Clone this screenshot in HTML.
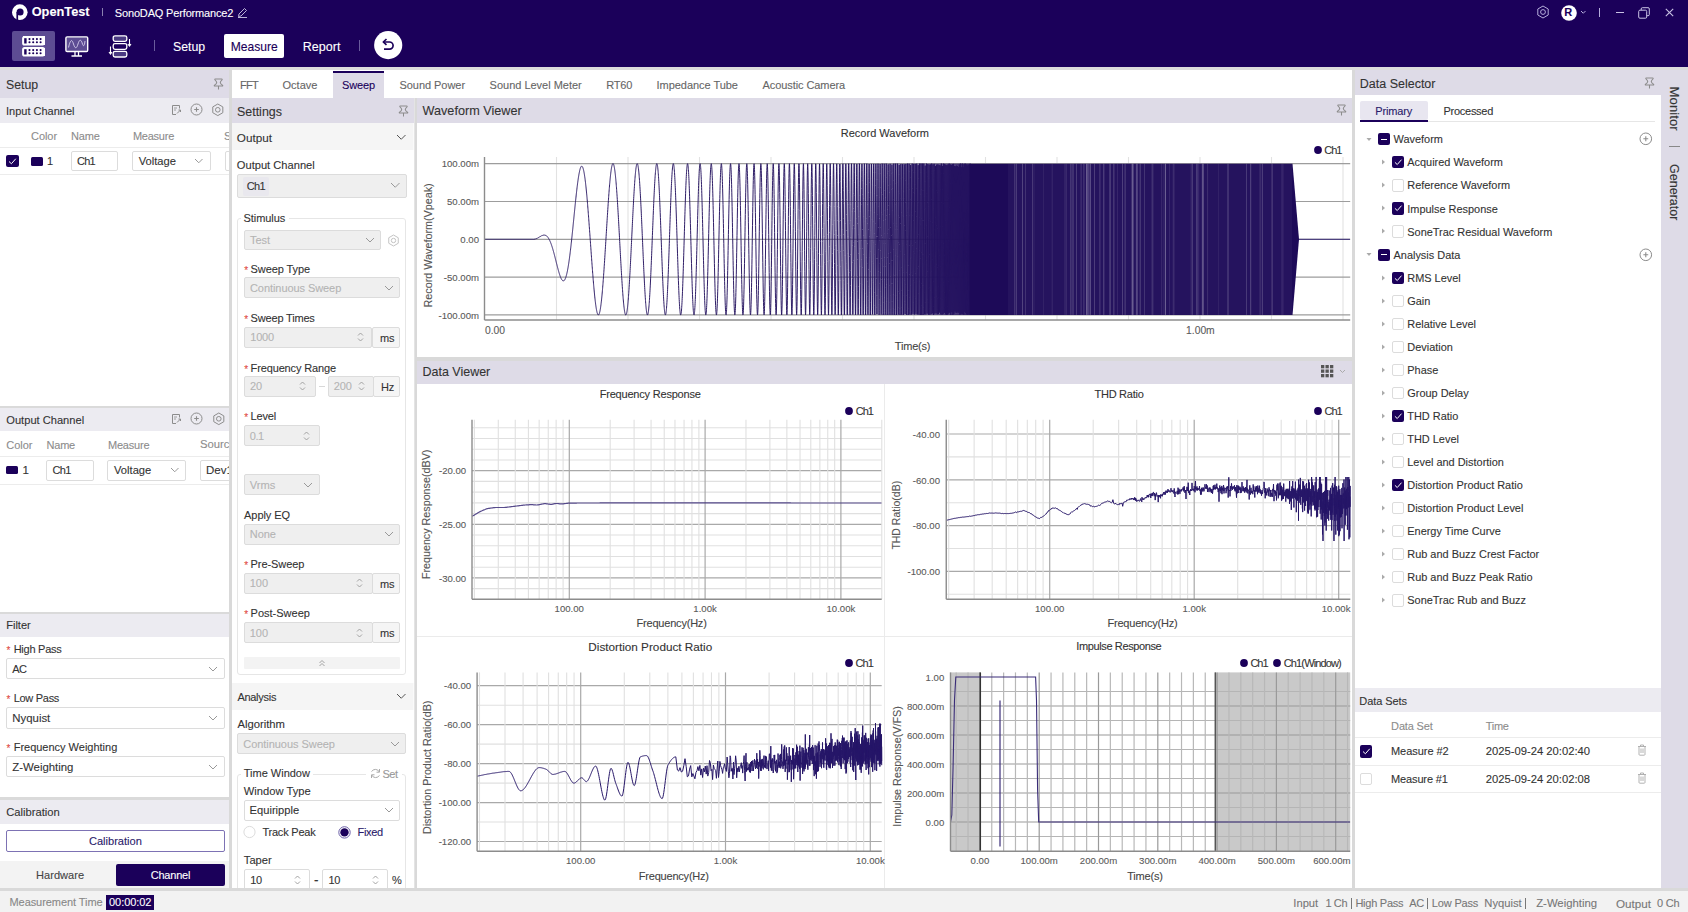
<!DOCTYPE html>
<html><head><meta charset="utf-8">
<style>
*{box-sizing:border-box;margin:0;padding:0}
html,body{width:1688px;height:912px;overflow:hidden;background:#f2f2f2;font-family:"Liberation Sans",sans-serif;font-size:12px;color:#333;position:relative}
.a{position:absolute}
.t{position:absolute;white-space:nowrap;line-height:1;-webkit-text-stroke:0.1px currentColor}
svg{position:absolute;overflow:visible}
</style></head><body>
<div class="a" style="left:0.00px;top:0.00px;width:1688.00px;height:67.00px;background:#1b005a;"></div>
<div class="a" style="left:0.00px;top:67.00px;width:1688.00px;height:3.00px;background:#dcdcdc;"></div>
<div class="a" style="left:0.00px;top:70.00px;width:229.00px;height:818.00px;background:#fff;"></div>
<div class="a" style="left:0.00px;top:70.00px;width:229.00px;height:28.00px;background:#dedbe7;"></div>
<div class="a" style="left:0.00px;top:98.00px;width:229.00px;height:24.50px;background:#ecebf1;"></div>
<div class="a" style="left:229.00px;top:70.00px;width:3.00px;height:821.00px;background:#d9d9d9;"></div>
<div class="a" style="left:232.00px;top:70.00px;width:1120.00px;height:28.00px;background:#fff;"></div>
<div class="a" style="left:232.00px;top:98.00px;width:182.00px;height:790.00px;background:#fff;"></div>
<div class="a" style="left:232.00px;top:98.00px;width:182.00px;height:25.00px;background:#dedbe7;"></div>
<div class="a" style="left:414.00px;top:98.00px;width:3.00px;height:793.00px;background:#d9d9d9;"></div>
<div class="a" style="left:417.00px;top:98.00px;width:935.00px;height:259.00px;background:#fff;"></div>
<div class="a" style="left:417.00px;top:98.00px;width:935.00px;height:25.00px;background:#dedbe7;"></div>
<div class="a" style="left:417.00px;top:357.00px;width:935.00px;height:4.00px;background:#d9d9d9;"></div>
<div class="a" style="left:417.00px;top:361.00px;width:935.00px;height:527.00px;background:#fff;"></div>
<div class="a" style="left:417.00px;top:361.00px;width:935.00px;height:23.00px;background:#dedbe7;"></div>
<div class="a" style="left:1352.00px;top:70.00px;width:3.00px;height:821.00px;background:#d9d9d9;"></div>
<div class="a" style="left:1355.00px;top:70.00px;width:333.00px;height:818.00px;background:#dedbe7;"></div>
<div class="a" style="left:1355.00px;top:95.00px;width:306.00px;height:793.00px;background:#fff;"></div>
<div class="a" style="left:0.00px;top:888.00px;width:1688.00px;height:3.00px;background:#d9d9d9;"></div>
<div class="a" style="left:0.00px;top:891.00px;width:1688.00px;height:21.00px;background:#f2f2f2;"></div>
<svg style="left:11px;top:4px;" width="18" height="17" viewBox="0 0 18 17"><circle cx="8.8" cy="8.15" r="7.8" fill="#fff"/><circle cx="9.1" cy="8" r="3.5" fill="#1b005a"/><rect x="5.4" y="8" width="1.7" height="9" fill="#1b005a"/></svg>
<div class="t" style="left:31.70px;top:6.18px;font-size:12.78px;color:#fff;font-weight:bold;">OpenTest</div>
<div class="a" style="left:101.50px;top:8.00px;width:1.00px;height:8.00px;background:#8a80b0;"></div>
<div class="t" style="left:114.80px;top:7.57px;font-size:11.00px;color:#fff;letter-spacing:-0.16px;">SonoDAQ Performance2</div>
<svg style="left:237px;top:7px;" width="11" height="11" viewBox="0 0 11 11"><path d="M1.5,9.5 L2,7 L7.5,1.5 L9.5,3.5 L4,9 Z M1,10.5 H10" fill="none" stroke="#cfc8e6" stroke-width="0.9" stroke-linejoin="round"/></svg>
<div class="a" style="left:12.30px;top:30.60px;width:42.70px;height:30.40px;background:#5d4c93;border-radius:2px;"></div>
<div class="a" style="left:23.00px;top:36.00px;width:21.50px;height:8.50px;background:#fff;"></div>
<div class="a" style="left:23.00px;top:47.50px;width:21.50px;height:8.50px;background:#fff;"></div>
<svg style="left:22.3px;top:35.6px;" width="23" height="10" viewBox="0 0 23 10"><rect x="0.75" y="0.75" width="21.5" height="8.2" rx="1.5" fill="none" stroke="#fff" stroke-width="1.3"/><rect x="2.2" y="2.2" width="2.4" height="5.3" fill="#1b005a"/><circle cx="7.5" cy="3.1" r="1.05" fill="#1b005a"/><circle cx="7.5" cy="6.300000000000001" r="1.05" fill="#1b005a"/><circle cx="11.2" cy="3.1" r="1.05" fill="#1b005a"/><circle cx="11.2" cy="6.300000000000001" r="1.05" fill="#1b005a"/><circle cx="14.9" cy="3.1" r="1.05" fill="#1b005a"/><circle cx="14.9" cy="6.300000000000001" r="1.05" fill="#1b005a"/><circle cx="18.6" cy="3.1" r="1.05" fill="#1b005a"/><circle cx="18.6" cy="6.300000000000001" r="1.05" fill="#1b005a"/></svg>
<svg style="left:22.3px;top:46.8px;" width="23" height="10" viewBox="0 0 23 10"><rect x="0.75" y="0.75" width="21.5" height="8.2" rx="1.5" fill="none" stroke="#fff" stroke-width="1.3"/><rect x="2.2" y="2.2" width="2.4" height="5.3" fill="#1b005a"/><circle cx="7.5" cy="3.1" r="1.05" fill="#1b005a"/><circle cx="7.5" cy="6.300000000000001" r="1.05" fill="#1b005a"/><circle cx="11.2" cy="3.1" r="1.05" fill="#1b005a"/><circle cx="11.2" cy="6.300000000000001" r="1.05" fill="#1b005a"/><circle cx="14.9" cy="3.1" r="1.05" fill="#1b005a"/><circle cx="14.9" cy="6.300000000000001" r="1.05" fill="#1b005a"/><circle cx="18.6" cy="3.1" r="1.05" fill="#1b005a"/><circle cx="18.6" cy="6.300000000000001" r="1.05" fill="#1b005a"/></svg>
<svg style="left:65px;top:35.5px;" width="24" height="21" viewBox="0 0 24 21"><rect x="0.9" y="0.9" width="21.8" height="14.6" rx="1.2" fill="#5d4c93" stroke="#fff" stroke-width="1.4"/><path d="M3.5,11.5 C5.5,3 7,3 8.5,8 C10,13 11.5,13 13,8 C14.5,3 16,3 17.5,8 C18.5,11 19.5,10 20,5" fill="none" stroke="#d8d0ee" stroke-width="0.9"/><path d="M10,16 V19.6 M13.5,16 V19.6 M6.5,20 H17" stroke="#fff" stroke-width="1.3"/></svg>
<svg style="left:108px;top:35px;" width="24" height="23" viewBox="0 0 24 23"><rect x="5.2" y="0.8" width="13.6" height="5.6" rx="1.8" fill="#4a3a82" stroke="#fff" stroke-width="1.3"/><rect x="5.2" y="8.7" width="13.6" height="5.6" rx="1.8" fill="#1b005a" stroke="#fff" stroke-width="1.3"/><rect x="5.2" y="16.4" width="13.6" height="5.6" rx="1.8" fill="#4a3a82" stroke="#fff" stroke-width="1.3"/><path d="M21.5,4 V10.5 M19.8,9 L21.5,11 L23,9" fill="none" stroke="#fff" stroke-width="1.1"/><path d="M2.5,11.5 V18.5 M1,17 L2.5,19 L4,17" fill="none" stroke="#fff" stroke-width="1.1"/></svg>
<div class="a" style="left:154.00px;top:40.00px;width:1.00px;height:11.00px;background:#6a5c9c;"></div>
<div class="t" style="left:173.00px;top:40.71px;font-size:12.32px;color:#fff;">Setup</div>
<div class="a" style="left:224.20px;top:33.60px;width:59.70px;height:24.20px;background:#fff;border-radius:2px;"></div>
<div class="t" style="left:230.80px;top:40.63px;font-size:12.08px;color:#1b005a;">Measure</div>
<div class="t" style="left:302.80px;top:40.61px;font-size:12.53px;color:#fff;">Report</div>
<div class="a" style="left:359.00px;top:40.00px;width:1.00px;height:11.00px;background:#6a5c9c;"></div>
<svg style="left:373.6px;top:30.9px;" width="28.4" height="28.2" viewBox="0 0 28.4 28.2"><circle cx="14.2" cy="14.1" r="14.1" fill="#fff"/><path d="M10,11 H15.5 A3.6,3.6 0 0 1 15.5,18.2 H10" fill="none" stroke="#1b005a" stroke-width="1.7"/><path d="M12.5,8 L9.3,11 L12.5,14" fill="none" stroke="#1b005a" stroke-width="1.7" stroke-linejoin="round"/></svg>
<svg style="left:1536px;top:5.300000000000001px;" width="14" height="14" viewBox="0 0 14 14"><polygon points="7.00,13.00 1.80,10.00 1.80,4.00 7.00,1.00 12.20,4.00 12.20,10.00" fill="none" stroke="#b5addb" stroke-width="1" stroke-linejoin="round"/><circle cx="7" cy="7" r="2.40" fill="none" stroke="#b5addb" stroke-width="1"/></svg>
<svg style="left:1560.5px;top:4.5px;" width="16" height="16" viewBox="0 0 16 16"><circle cx="8" cy="8" r="7.8" fill="#fff"/></svg>
<div class="t" style="left:1564.33px;top:7.27px;font-size:11.00px;color:#1b005a;font-weight:600;">R</div>
<svg style="left:1579.75px;top:9.875px;" width="6.5" height="4.25" viewBox="0 0 6.5 4.25"><polyline points="1,1 3.25,3.25 5.5,1" fill="none" stroke="#b5addb" stroke-width="1"/></svg>
<div class="a" style="left:1599.00px;top:8.00px;width:1.00px;height:9.00px;background:#b5addb;"></div>
<div class="a" style="left:1615.50px;top:12.00px;width:8.50px;height:1.00px;background:#c9c2e4;"></div>
<svg style="left:1638px;top:7px;" width="12" height="12" viewBox="0 0 12 12"><rect x="0.7" y="3.2" width="8" height="8" rx="1.2" fill="none" stroke="#c9c2e4" stroke-width="1"/><path d="M3.2,3.2 V2 A1.2,1.2 0 0 1 4.4,0.7 H10 A1.2,1.2 0 0 1 11.3,2 V7.5 A1.2,1.2 0 0 1 10,8.7 H8.7" fill="none" stroke="#c9c2e4" stroke-width="1"/></svg>
<svg style="left:1664.5px;top:7.8px;" width="9" height="9" viewBox="0 0 9 9"><path d="M0.8,0.8 L8.2,8.2 M8.2,0.8 L0.8,8.2" stroke="#c9c2e4" stroke-width="1.1"/></svg>
<div class="a" style="left:0;top:0;width:1688px;height:912px;clip-path:inset(70px 1459px 24px 0px)">
<div class="t" style="left:6.00px;top:78.91px;font-size:12.32px;color:#333;">Setup</div>
<svg style="left:212px;top:77.4px;" width="12" height="14" viewBox="0 0 12 14"><path d="M3.2,1.9 H9.6 Q10.6,1.9 10,2.8 Q8.3,4.4 8.3,5.6 Q8.6,7 10.4,8.1 Q11.2,9 10.2,9 H2.8 Q1.8,9 2.6,8.1 Q4.4,7 4.7,5.6 Q4.7,4.4 3,2.8 Q2.4,1.9 3.2,1.9 Z M6.5,9 V12.4" fill="none" stroke="#8c8c8c" stroke-width="1.05" stroke-linejoin="round"/></svg>
<div class="t" style="left:6.00px;top:106.32px;font-size:11.00px;color:#333;">Input Channel</div>
<svg style="left:169.6px;top:103.6px;" width="12" height="12" viewBox="0 0 12 12"><path d="M9.5,4.5 V1.5 H2.5 V10.5 H6" fill="none" stroke="#8c8c8c" stroke-width="1"/><path d="M4,4 H7 M4,6 H6" stroke="#8c8c8c" stroke-width="0.8"/><path d="M7,9.5 L10.5,6 M8.5,6 H10.5 V8" fill="none" stroke="#8c8c8c" stroke-width="1"/></svg>
<svg style="left:190.25px;top:103.1px;" width="13.0" height="13.0" viewBox="0 0 13.0 13.0"><circle cx="6.5" cy="6.5" r="5.5" fill="none" stroke="#8c8c8c" stroke-width="1"/><path d="M4.1899999999999995,6.5 H8.81 M6.5,4.1899999999999995 V8.81" stroke="#8c8c8c" stroke-width="1.1"/></svg>
<svg style="left:211.29999999999998px;top:102.8px;" width="13.6" height="13.6" viewBox="0 0 13.6 13.6"><polygon points="6.80,12.60 1.78,9.70 1.78,3.90 6.80,1.00 11.82,3.90 11.82,9.70" fill="none" stroke="#8c8c8c" stroke-width="1" stroke-linejoin="round"/><circle cx="6.8" cy="6.8" r="2.32" fill="none" stroke="#8c8c8c" stroke-width="1"/></svg>
<div class="t" style="left:31.10px;top:130.57px;font-size:11.00px;color:#8c8c8c;letter-spacing:-0.08px;">Color</div>
<div class="t" style="left:70.90px;top:130.57px;font-size:11.00px;color:#8c8c8c;letter-spacing:-0.14px;">Name</div>
<div class="t" style="left:132.90px;top:130.57px;font-size:11.00px;color:#8c8c8c;letter-spacing:-0.23px;">Measure</div>
<div class="t" style="left:224.10px;top:130.57px;font-size:11.00px;color:#8c8c8c;">S</div>
<div class="a" style="left:0.00px;top:147.00px;width:229.00px;height:1.00px;background:#ececec;"></div>
<div class="a" style="left:6.10px;top:154.70px;width:12.50px;height:12.50px;background:#1b005a;border-radius:2px;"></div>
<svg style="left:6.1px;top:154.7px;" width="12.5" height="12.5" viewBox="0 0 12.5 12.5"><polyline points="3.0,6.5 5.375,8.75 9.75,3.75" fill="none" stroke="#fff" stroke-width="1"/></svg>
<div class="a" style="left:30.80px;top:156.50px;width:12.30px;height:9.10px;background:#1b005a;border-radius:1.5px;"></div>
<div class="t" style="left:47.00px;top:156.37px;font-size:11.00px;color:#333;letter-spacing:-1.00px;">1</div>
<div class="a" style="left:70.60px;top:150.70px;width:47.90px;height:20.80px;background:#fff;border:1px solid #dcdcdc;border-radius:2px;"></div>
<div class="t" style="left:77.00px;top:156.37px;font-size:11.00px;color:#333;letter-spacing:-0.73px;">Ch1</div>
<div class="a" style="left:132.20px;top:150.70px;width:78.70px;height:20.80px;background:#fff;border:1px solid #dcdcdc;border-radius:2px;"></div>
<div class="t" style="left:138.70px;top:156.28px;font-size:11.18px;color:#333;">Voltage</div>
<svg style="left:194.45px;top:158.125px;" width="9.5" height="5.75" viewBox="0 0 9.5 5.75"><polyline points="1,1 4.75,4.75 8.5,1" fill="none" stroke="#999" stroke-width="1"/></svg>
<div class="a" style="left:224.60px;top:150.70px;width:10.00px;height:20.80px;background:#fff;border:1px solid #dcdcdc;border-radius:2px;"></div>
<div class="a" style="left:0.00px;top:174.00px;width:229.00px;height:1.00px;background:#ececec;"></div>
<div class="a" style="left:229.00px;top:150.00px;width:0.01px;height:1.00px;"></div>
<div class="a" style="left:0.00px;top:406.30px;width:229.00px;height:2.10px;background:#dadada;"></div>
<div class="a" style="left:0.00px;top:408.40px;width:229.00px;height:23.00px;background:#ecebf1;"></div>
<div class="t" style="left:6.30px;top:415.01px;font-size:11.12px;color:#333;">Output Channel</div>
<svg style="left:169.75px;top:412.5px;" width="12" height="12" viewBox="0 0 12 12"><path d="M9.5,4.5 V1.5 H2.5 V10.5 H6" fill="none" stroke="#8c8c8c" stroke-width="1"/><path d="M4,4 H7 M4,6 H6" stroke="#8c8c8c" stroke-width="0.8"/><path d="M7,9.5 L10.5,6 M8.5,6 H10.5 V8" fill="none" stroke="#8c8c8c" stroke-width="1"/></svg>
<svg style="left:190.4px;top:412.0px;" width="13.0" height="13.0" viewBox="0 0 13.0 13.0"><circle cx="6.5" cy="6.5" r="5.5" fill="none" stroke="#8c8c8c" stroke-width="1"/><path d="M4.1899999999999995,6.5 H8.81 M6.5,4.1899999999999995 V8.81" stroke="#8c8c8c" stroke-width="1.1"/></svg>
<svg style="left:211.6px;top:411.7px;" width="13.6" height="13.6" viewBox="0 0 13.6 13.6"><polygon points="6.80,12.60 1.78,9.70 1.78,3.90 6.80,1.00 11.82,3.90 11.82,9.70" fill="none" stroke="#8c8c8c" stroke-width="1" stroke-linejoin="round"/><circle cx="6.8" cy="6.8" r="2.32" fill="none" stroke="#8c8c8c" stroke-width="1"/></svg>
<div class="t" style="left:6.30px;top:439.57px;font-size:11.00px;color:#8c8c8c;letter-spacing:-0.04px;">Color</div>
<div class="t" style="left:46.60px;top:439.57px;font-size:11.00px;color:#8c8c8c;letter-spacing:-0.24px;">Name</div>
<div class="t" style="left:107.90px;top:439.57px;font-size:11.00px;color:#8c8c8c;letter-spacing:-0.17px;">Measure</div>
<div class="t" style="left:200.00px;top:439.42px;font-size:11.30px;color:#8c8c8c;">Source</div>
<div class="a" style="left:0.00px;top:456.00px;width:229.00px;height:1.00px;background:#ececec;"></div>
<div class="a" style="left:6.30px;top:465.50px;width:12.10px;height:8.50px;background:#1b005a;border-radius:1.5px;"></div>
<div class="t" style="left:22.40px;top:464.82px;font-size:11.50px;color:#333;">1</div>
<div class="a" style="left:46.30px;top:459.50px;width:47.40px;height:21.00px;background:#fff;border:1px solid #dcdcdc;border-radius:2px;"></div>
<div class="t" style="left:52.60px;top:465.37px;font-size:11.00px;color:#333;letter-spacing:-0.76px;">Ch1</div>
<div class="a" style="left:107.40px;top:459.50px;width:78.90px;height:21.00px;background:#fff;border:1px solid #dcdcdc;border-radius:2px;"></div>
<div class="t" style="left:114.00px;top:465.28px;font-size:11.18px;color:#333;">Voltage</div>
<svg style="left:170.05px;top:467.125px;" width="9.5" height="5.75" viewBox="0 0 9.5 5.75"><polyline points="1,1 4.75,4.75 8.5,1" fill="none" stroke="#999" stroke-width="1"/></svg>
<div class="a" style="left:200.00px;top:459.50px;width:35.00px;height:21.00px;background:#fff;border:1px solid #dcdcdc;border-radius:2px;"></div>
<div class="t" style="left:206.00px;top:465.12px;font-size:11.50px;color:#333;">Dev1</div>
<div class="a" style="left:0.00px;top:484.00px;width:229.00px;height:1.00px;background:#ececec;"></div>
<div class="a" style="left:229.00px;top:70.00px;width:3.00px;height:821.00px;background:#d9d9d9;"></div>
<div class="a" style="left:0.00px;top:612.00px;width:229.00px;height:2.40px;background:#dadada;"></div>
<div class="a" style="left:0.00px;top:614.40px;width:229.00px;height:22.60px;background:#ecebf1;"></div>
<div class="t" style="left:6.20px;top:620.24px;font-size:11.07px;color:#333;">Filter</div>
<div class="t" style="left:6.40px;top:646.08px;font-size:10.00px;color:#e0463c;">*</div>
<div class="t" style="left:13.70px;top:644.07px;font-size:11.00px;color:#333;letter-spacing:-0.26px;">High Pass</div>
<div class="a" style="left:6.20px;top:658.00px;width:218.40px;height:21.30px;background:#fff;border:1px solid #dcdcdc;border-radius:2px;"></div>
<div class="t" style="left:12.30px;top:663.72px;font-size:11.00px;color:#333;letter-spacing:-0.64px;">AC</div>
<svg style="left:208.0px;top:665.65px;" width="10" height="6.0" viewBox="0 0 10 6.0"><polyline points="1,1 5.0,5.0 9,1" fill="none" stroke="#999" stroke-width="1"/></svg>
<div class="t" style="left:6.40px;top:695.08px;font-size:10.00px;color:#e0463c;">*</div>
<div class="t" style="left:13.70px;top:693.07px;font-size:11.00px;color:#333;letter-spacing:-0.29px;">Low Pass</div>
<div class="a" style="left:6.20px;top:707.00px;width:218.40px;height:21.50px;background:#fff;border:1px solid #dcdcdc;border-radius:2px;"></div>
<div class="t" style="left:12.30px;top:712.62px;font-size:11.40px;color:#333;">Nyquist</div>
<svg style="left:208.0px;top:714.75px;" width="10" height="6.0" viewBox="0 0 10 6.0"><polyline points="1,1 5.0,5.0 9,1" fill="none" stroke="#999" stroke-width="1"/></svg>
<div class="t" style="left:6.40px;top:744.48px;font-size:10.00px;color:#e0463c;">*</div>
<div class="t" style="left:13.70px;top:742.47px;font-size:11.00px;color:#333;letter-spacing:-0.01px;">Frequency Weighting</div>
<div class="a" style="left:6.20px;top:756.20px;width:218.40px;height:21.20px;background:#fff;border:1px solid #dcdcdc;border-radius:2px;"></div>
<div class="t" style="left:12.30px;top:761.68px;font-size:11.39px;color:#333;">Z-Weighting</div>
<svg style="left:208.0px;top:763.8px;" width="10" height="6.0" viewBox="0 0 10 6.0"><polyline points="1,1 5.0,5.0 9,1" fill="none" stroke="#999" stroke-width="1"/></svg>
<div class="a" style="left:0.00px;top:797.30px;width:229.00px;height:2.70px;background:#dadada;"></div>
<div class="a" style="left:0.00px;top:800.00px;width:229.00px;height:24.00px;background:#ecebf1;"></div>
<div class="t" style="left:6.20px;top:806.97px;font-size:11.21px;color:#333;">Calibration</div>
<div class="a" style="left:6.20px;top:829.70px;width:218.40px;height:22.30px;background:#fff;border:1px solid #7d72b4;border-radius:2px;"></div>
<div class="t" style="left:88.90px;top:835.93px;font-size:11.09px;color:#2a1a6a;">Calibration</div>
<div class="a" style="left:0.00px;top:861.00px;width:229.00px;height:27.00px;background:#f3f3f3;"></div>
<div class="t" style="left:36.10px;top:870.34px;font-size:11.07px;color:#444;">Hardware</div>
<div class="a" style="left:115.50px;top:864.30px;width:109.50px;height:21.30px;background:#1b005a;border-radius:2px;"></div>
<div class="t" style="left:150.70px;top:870.37px;font-size:11.00px;color:#fff;letter-spacing:-0.21px;">Channel</div>
</div>
<div class="a" style="left:333.25px;top:72.50px;width:50.50px;height:25.50px;background:#dedbe7;"></div>
<div class="a" style="left:333.25px;top:70.50px;width:50.50px;height:2.00px;background:#1b005a;"></div>
<div class="t" style="left:240.00px;top:79.87px;font-size:11.00px;color:#666;letter-spacing:-0.72px;">FFT</div>
<div class="t" style="left:282.50px;top:79.85px;font-size:11.05px;color:#666;">Octave</div>
<div class="t" style="left:399.50px;top:79.87px;font-size:11.00px;color:#666;letter-spacing:-0.05px;">Sound Power</div>
<div class="t" style="left:489.60px;top:79.87px;font-size:11.00px;color:#666;letter-spacing:-0.01px;">Sound Level Meter</div>
<div class="t" style="left:606.30px;top:79.87px;font-size:11.00px;color:#666;letter-spacing:-0.25px;">RT60</div>
<div class="t" style="left:656.60px;top:79.87px;font-size:11.00px;color:#666;letter-spacing:-0.05px;">Impedance Tube</div>
<div class="t" style="left:762.50px;top:79.87px;font-size:11.00px;color:#666;letter-spacing:-0.08px;">Acoustic Camera</div>
<div class="t" style="left:342.00px;top:80.27px;font-size:11.00px;color:#1b005a;letter-spacing:-0.13px;">Sweep</div>
<div class="a" style="left:0;top:0;width:1688px;height:912px;clip-path:inset(98px 1274.5px 24px 232px)">
<div class="t" style="left:237.00px;top:105.59px;font-size:12.45px;color:#333;">Settings</div>
<svg style="left:397px;top:103.5px;" width="12" height="14" viewBox="0 0 12 14"><path d="M3.2,1.9 H9.6 Q10.6,1.9 10,2.8 Q8.3,4.4 8.3,5.6 Q8.6,7 10.4,8.1 Q11.2,9 10.2,9 H2.8 Q1.8,9 2.6,8.1 Q4.4,7 4.7,5.6 Q4.7,4.4 3,2.8 Q2.4,1.9 3.2,1.9 Z M6.5,9 V12.4" fill="none" stroke="#8c8c8c" stroke-width="1.05" stroke-linejoin="round"/></svg>
<div class="a" style="left:232.00px;top:123.00px;width:181.50px;height:27.20px;background:#f5f5f5;"></div>
<div class="t" style="left:236.80px;top:132.11px;font-size:11.73px;color:#333;">Output</div>
<svg style="left:396.35px;top:133.875px;" width="10.5" height="6.25" viewBox="0 0 10.5 6.25"><polyline points="1,1 5.25,5.25 9.5,1" fill="none" stroke="#555" stroke-width="1"/></svg>
<div class="t" style="left:236.80px;top:160.30px;font-size:11.14px;color:#333;">Output Channel</div>
<div class="a" style="left:237.10px;top:173.90px;width:169.60px;height:24.20px;background:#efefef;border:1px solid #dcdcdc;border-radius:2px;"></div>
<div class="a" style="left:243.00px;top:176.50px;width:25.80px;height:19.00px;background:#e9e8ee;border-radius:2px;"></div>
<div class="t" style="left:246.80px;top:180.87px;font-size:11.00px;color:#333;letter-spacing:-0.69px;">Ch1</div>
<svg style="left:389.95px;top:182.475px;" width="10.5" height="6.25" viewBox="0 0 10.5 6.25"><polyline points="1,1 5.25,5.25 9.5,1" fill="none" stroke="#999" stroke-width="1"/></svg>
<div class="a" style="left:237.10px;top:217.60px;width:169.10px;height:457.00px;border:1px solid #e6e6e6;border-radius:3px;"></div>
<div class="a" style="left:241.00px;top:210.00px;width:48.00px;height:14.00px;background:#fff;"></div>
<div class="t" style="left:243.50px;top:212.67px;font-size:11.00px;color:#333;letter-spacing:-0.05px;">Stimulus</div>
<div class="a" style="left:243.80px;top:229.70px;width:137.60px;height:20.80px;background:#efefef;border:1px solid #dcdcdc;border-radius:2px;"></div>
<div class="t" style="left:250.00px;top:235.17px;font-size:11.00px;color:#b4b4b4;letter-spacing:-0.07px;">Test</div>
<svg style="left:365.1px;top:237.1px;" width="10" height="6.0" viewBox="0 0 10 6.0"><polyline points="1,1 5.0,5.0 9,1" fill="none" stroke="#999" stroke-width="1"/></svg>
<svg style="left:387.4px;top:234.0px;" width="13.0" height="13.0" viewBox="0 0 13.0 13.0"><polygon points="6.50,12.00 1.74,9.25 1.74,3.75 6.50,1.00 11.26,3.75 11.26,9.25" fill="none" stroke="#c4c4c4" stroke-width="1" stroke-linejoin="round"/><circle cx="6.5" cy="6.5" r="2.20" fill="none" stroke="#c4c4c4" stroke-width="1"/></svg>
<div class="t" style="left:244.20px;top:266.38px;font-size:10.00px;color:#e0463c;">*</div>
<div class="t" style="left:250.60px;top:264.37px;font-size:11.00px;color:#333;letter-spacing:-0.09px;">Sweep Type</div>
<div class="a" style="left:243.60px;top:277.30px;width:156.20px;height:21.00px;background:#efefef;border:1px solid #dcdcdc;border-radius:2px;"></div>
<div class="t" style="left:250.00px;top:282.87px;font-size:11.00px;color:#b4b4b4;letter-spacing:-0.07px;">Continuous Sweep</div>
<svg style="left:383.7px;top:284.8px;" width="10" height="6.0" viewBox="0 0 10 6.0"><polyline points="1,1 5.0,5.0 9,1" fill="none" stroke="#999" stroke-width="1"/></svg>
<div class="t" style="left:244.20px;top:315.38px;font-size:10.00px;color:#e0463c;">*</div>
<div class="t" style="left:250.60px;top:313.37px;font-size:11.00px;color:#333;letter-spacing:-0.18px;">Sweep Times</div>
<div class="a" style="left:243.60px;top:326.60px;width:128.90px;height:21.00px;background:#efefef;border:1px solid #dcdcdc;border-radius:2px;"></div>
<div class="t" style="left:250.30px;top:332.17px;font-size:11.00px;color:#b4b4b4;letter-spacing:-0.22px;">1000</div>
<svg style="left:356.7px;top:331.1px;" width="7" height="12" viewBox="0 0 7 12"><polyline points="1,4.5 3.5,2 6,4.5" fill="none" stroke="#999" stroke-width="0.9"/><polyline points="1,7.5 3.5,10 6,7.5" fill="none" stroke="#999" stroke-width="0.9"/></svg>
<div class="a" style="left:371.50px;top:326.60px;width:28.30px;height:21.00px;background:#f5f5f5;border:1px solid #dcdcdc;border-radius:2px;"></div>
<div class="t" style="left:380.00px;top:332.67px;font-size:11.00px;color:#333;letter-spacing:-0.18px;">ms</div>
<div class="t" style="left:244.20px;top:364.68px;font-size:10.00px;color:#e0463c;">*</div>
<div class="t" style="left:250.60px;top:362.67px;font-size:11.00px;color:#333;letter-spacing:-0.14px;">Frequency Range</div>
<div class="a" style="left:243.60px;top:375.90px;width:72.20px;height:20.70px;background:#efefef;border:1px solid #dcdcdc;border-radius:2px;"></div>
<div class="t" style="left:250.00px;top:381.32px;font-size:11.00px;color:#b4b4b4;letter-spacing:-0.22px;">20</div>
<svg style="left:299.1px;top:380.25px;" width="7" height="12" viewBox="0 0 7 12"><polyline points="1,4.5 3.5,2 6,4.5" fill="none" stroke="#999" stroke-width="0.9"/><polyline points="1,7.5 3.5,10 6,7.5" fill="none" stroke="#999" stroke-width="0.9"/></svg>
<div class="a" style="left:319.00px;top:386.00px;width:5.80px;height:1.00px;background:#d8d8d8;"></div>
<div class="a" style="left:327.90px;top:375.90px;width:45.70px;height:20.70px;background:#efefef;border:1px solid #dcdcdc;border-radius:2px;"></div>
<div class="t" style="left:333.80px;top:381.32px;font-size:11.00px;color:#b4b4b4;letter-spacing:-0.12px;">200</div>
<svg style="left:357.6px;top:380.25px;" width="7" height="12" viewBox="0 0 7 12"><polyline points="1,4.5 3.5,2 6,4.5" fill="none" stroke="#999" stroke-width="0.9"/><polyline points="1,7.5 3.5,10 6,7.5" fill="none" stroke="#999" stroke-width="0.9"/></svg>
<div class="a" style="left:372.60px;top:375.90px;width:27.20px;height:20.70px;background:#f5f5f5;border:1px solid #dcdcdc;border-radius:2px;"></div>
<div class="t" style="left:381.00px;top:381.82px;font-size:11.00px;color:#333;letter-spacing:-0.22px;">Hz</div>
<div class="t" style="left:244.20px;top:413.48px;font-size:10.00px;color:#e0463c;">*</div>
<div class="t" style="left:250.60px;top:411.47px;font-size:11.00px;color:#333;letter-spacing:-0.18px;">Level</div>
<div class="a" style="left:244.00px;top:425.00px;width:76.40px;height:21.00px;background:#efefef;border:1px solid #dcdcdc;border-radius:2px;"></div>
<div class="t" style="left:249.70px;top:430.57px;font-size:11.00px;color:#b4b4b4;letter-spacing:-0.40px;">0.1</div>
<svg style="left:303.1px;top:429.5px;" width="7" height="12" viewBox="0 0 7 12"><polyline points="1,4.5 3.5,2 6,4.5" fill="none" stroke="#999" stroke-width="0.9"/><polyline points="1,7.5 3.5,10 6,7.5" fill="none" stroke="#999" stroke-width="0.9"/></svg>
<div class="a" style="left:244.00px;top:474.30px;width:76.40px;height:21.10px;background:#efefef;border:1px solid #dcdcdc;border-radius:2px;"></div>
<div class="t" style="left:249.70px;top:479.85px;font-size:11.15px;color:#b4b4b4;">Vrms</div>
<svg style="left:303.2px;top:481.85px;" width="10" height="6.0" viewBox="0 0 10 6.0"><polyline points="1,1 5.0,5.0 9,1" fill="none" stroke="#999" stroke-width="1"/></svg>
<div class="t" style="left:244.10px;top:510.17px;font-size:11.00px;color:#333;letter-spacing:-0.06px;">Apply EQ</div>
<div class="a" style="left:244.00px;top:523.60px;width:155.60px;height:21.10px;background:#efefef;border:1px solid #dcdcdc;border-radius:2px;"></div>
<div class="t" style="left:249.70px;top:529.22px;font-size:11.00px;color:#b4b4b4;">None</div>
<svg style="left:383.8px;top:531.1500000000001px;" width="10" height="6.0" viewBox="0 0 10 6.0"><polyline points="1,1 5.0,5.0 9,1" fill="none" stroke="#999" stroke-width="1"/></svg>
<div class="t" style="left:244.20px;top:560.88px;font-size:10.00px;color:#e0463c;">*</div>
<div class="t" style="left:250.60px;top:558.87px;font-size:11.00px;color:#333;letter-spacing:-0.08px;">Pre-Sweep</div>
<div class="a" style="left:244.00px;top:572.60px;width:128.50px;height:21.40px;background:#efefef;border:1px solid #dcdcdc;border-radius:2px;"></div>
<div class="t" style="left:249.70px;top:578.36px;font-size:11.03px;color:#b4b4b4;">100</div>
<svg style="left:356.3px;top:577.3px;" width="7" height="12" viewBox="0 0 7 12"><polyline points="1,4.5 3.5,2 6,4.5" fill="none" stroke="#999" stroke-width="0.9"/><polyline points="1,7.5 3.5,10 6,7.5" fill="none" stroke="#999" stroke-width="0.9"/></svg>
<div class="a" style="left:371.50px;top:572.60px;width:28.30px;height:21.40px;background:#f5f5f5;border:1px solid #dcdcdc;border-radius:2px;"></div>
<div class="t" style="left:380.00px;top:578.87px;font-size:11.00px;color:#333;letter-spacing:-0.18px;">ms</div>
<div class="t" style="left:244.20px;top:610.08px;font-size:10.00px;color:#e0463c;">*</div>
<div class="t" style="left:250.60px;top:608.07px;font-size:11.00px;color:#333;letter-spacing:-0.00px;">Post-Sweep</div>
<div class="a" style="left:244.00px;top:622.00px;width:128.50px;height:21.30px;background:#efefef;border:1px solid #dcdcdc;border-radius:2px;"></div>
<div class="t" style="left:249.70px;top:627.71px;font-size:11.03px;color:#b4b4b4;">100</div>
<svg style="left:356.3px;top:626.65px;" width="7" height="12" viewBox="0 0 7 12"><polyline points="1,4.5 3.5,2 6,4.5" fill="none" stroke="#999" stroke-width="0.9"/><polyline points="1,7.5 3.5,10 6,7.5" fill="none" stroke="#999" stroke-width="0.9"/></svg>
<div class="a" style="left:371.50px;top:622.00px;width:28.30px;height:21.30px;background:#f5f5f5;border:1px solid #dcdcdc;border-radius:2px;"></div>
<div class="t" style="left:380.00px;top:628.22px;font-size:11.00px;color:#333;letter-spacing:-0.18px;">ms</div>
<div class="a" style="left:244.00px;top:656.50px;width:155.60px;height:12.50px;background:#f3f3f3;border-radius:1px;"></div>
<svg style="left:318px;top:658.7px;" width="8" height="8" viewBox="0 0 8 8"><polyline points="1.5,4 4,1.5 6.5,4" fill="none" stroke="#999" stroke-width="0.9"/><polyline points="1.5,7 4,4.5 6.5,7" fill="none" stroke="#999" stroke-width="0.9"/></svg>
<div class="a" style="left:232.00px;top:682.50px;width:181.50px;height:27.50px;background:#f5f5f5;"></div>
<div class="t" style="left:237.40px;top:691.57px;font-size:11.00px;color:#333;letter-spacing:-0.28px;">Analysis</div>
<svg style="left:396.35px;top:692.875px;" width="10.5" height="6.25" viewBox="0 0 10.5 6.25"><polyline points="1,1 5.25,5.25 9.5,1" fill="none" stroke="#555" stroke-width="1"/></svg>
<div class="t" style="left:237.40px;top:719.44px;font-size:11.27px;color:#333;">Algorithm</div>
<div class="a" style="left:237.40px;top:733.40px;width:169.10px;height:20.80px;background:#efefef;border:1px solid #dcdcdc;border-radius:2px;"></div>
<div class="t" style="left:243.30px;top:738.87px;font-size:11.00px;color:#b4b4b4;letter-spacing:-0.05px;">Continuous Sweep</div>
<svg style="left:390.1px;top:740.8px;" width="10" height="6.0" viewBox="0 0 10 6.0"><polyline points="1,1 5.0,5.0 9,1" fill="none" stroke="#999" stroke-width="1"/></svg>
<div class="a" style="left:237.40px;top:773.60px;width:169.10px;height:130.00px;border:1px solid #e6e6e6;border-radius:3px;"></div>
<div class="a" style="left:241.00px;top:766.00px;width:72.00px;height:14.00px;background:#fff;"></div>
<div class="a" style="left:366.00px;top:766.00px;width:36.00px;height:14.00px;background:#fff;"></div>
<div class="t" style="left:243.80px;top:768.07px;font-size:11.00px;color:#333;letter-spacing:-0.01px;">Time Window</div>
<svg style="left:369.7px;top:768px;" width="11" height="11" viewBox="0 0 11 11"><path d="M9.3,4 A4.3,4.3 0 0 0 1.6,3.6 M1.7,7 A4.3,4.3 0 0 0 9.4,7.4" fill="none" stroke="#aaa" stroke-width="1"/><path d="M9.5,1 V4.2 H6.5 M1.5,10 V6.8 H4.5" fill="none" stroke="#aaa" stroke-width="1"/></svg>
<div class="t" style="left:382.40px;top:768.87px;font-size:11.00px;color:#999;letter-spacing:-0.44px;">Set</div>
<div class="t" style="left:243.80px;top:785.98px;font-size:11.18px;color:#333;">Window Type</div>
<div class="a" style="left:243.80px;top:800.00px;width:155.90px;height:20.60px;background:#fff;border:1px solid #dcdcdc;border-radius:2px;"></div>
<div class="t" style="left:249.60px;top:805.30px;font-size:11.15px;color:#333;">Equiripple</div>
<svg style="left:383.7px;top:807.3px;" width="10" height="6.0" viewBox="0 0 10 6.0"><polyline points="1,1 5.0,5.0 9,1" fill="none" stroke="#999" stroke-width="1"/></svg>
<svg style="left:243.3px;top:826px;" width="13" height="13" viewBox="0 0 13 13"><circle cx="6.5" cy="6" r="5.6" fill="#fff" stroke="#dcdcdc" stroke-width="1"/></svg>
<div class="t" style="left:262.40px;top:827.07px;font-size:11.00px;color:#333;letter-spacing:-0.21px;">Track Peak</div>
<svg style="left:337.7px;top:825.6px;" width="13" height="13" viewBox="0 0 13 13"><circle cx="6.5" cy="6.4" r="5.7" fill="#fff" stroke="#6b5fa8" stroke-width="1"/><circle cx="6.5" cy="6.4" r="4.2" fill="#1b005a"/></svg>
<div class="t" style="left:357.50px;top:827.07px;font-size:11.00px;color:#2a1a6a;letter-spacing:-0.30px;">Fixed</div>
<div class="t" style="left:243.80px;top:855.48px;font-size:11.19px;color:#333;">Taper</div>
<div class="a" style="left:243.80px;top:869.00px;width:66.20px;height:25.00px;background:#fff;border:1px solid #dcdcdc;border-radius:2px;"></div>
<div class="t" style="left:250.20px;top:874.67px;font-size:11.00px;color:#333;letter-spacing:-0.42px;">10</div>
<svg style="left:293.7px;top:873.6px;" width="7" height="12" viewBox="0 0 7 12"><polyline points="1,4.5 3.5,2 6,4.5" fill="none" stroke="#999" stroke-width="0.9"/><polyline points="1,7.5 3.5,10 6,7.5" fill="none" stroke="#999" stroke-width="0.9"/></svg>
<div class="t" style="left:314.00px;top:873.41px;font-size:13.51px;color:#333;">-</div>
<div class="a" style="left:321.90px;top:869.00px;width:66.30px;height:25.00px;background:#fff;border:1px solid #dcdcdc;border-radius:2px;"></div>
<div class="t" style="left:328.50px;top:874.67px;font-size:11.00px;color:#333;letter-spacing:-0.42px;">10</div>
<svg style="left:372.0px;top:873.6px;" width="7" height="12" viewBox="0 0 7 12"><polyline points="1,4.5 3.5,2 6,4.5" fill="none" stroke="#999" stroke-width="0.9"/><polyline points="1,7.5 3.5,10 6,7.5" fill="none" stroke="#999" stroke-width="0.9"/></svg>
<div class="t" style="left:392.00px;top:874.67px;font-size:11.00px;color:#333;letter-spacing:-1.00px;">%</div>
</div>
<div class="a" style="left:232.00px;top:888.00px;width:182.00px;height:3.00px;background:#d9d9d9;"></div>
<div class="a" style="left:413.50px;top:98.00px;width:1.00px;height:790.00px;background:#e4e4e4;"></div>
<div class="t" style="left:422.50px;top:105.23px;font-size:12.67px;color:#333;">Waveform Viewer</div>
<svg style="left:1334.8px;top:103.2px;" width="12" height="14" viewBox="0 0 12 14"><path d="M3.2,1.9 H9.6 Q10.6,1.9 10,2.8 Q8.3,4.4 8.3,5.6 Q8.6,7 10.4,8.1 Q11.2,9 10.2,9 H2.8 Q1.8,9 2.6,8.1 Q4.4,7 4.7,5.6 Q4.7,4.4 3,2.8 Q2.4,1.9 3.2,1.9 Z M6.5,9 V12.4" fill="none" stroke="#8c8c8c" stroke-width="1.05" stroke-linejoin="round"/></svg>
<div class="t" style="left:422.50px;top:365.92px;font-size:12.49px;color:#333;">Data Viewer</div>
<svg style="left:1321px;top:365px;" width="13" height="13" viewBox="0 0 13 13"><rect x="0.0" y="0.0" width="3.3" height="3.3" fill="#555"/><rect x="0.0" y="4.5" width="3.3" height="3.3" fill="#555"/><rect x="0.0" y="9.0" width="3.3" height="3.3" fill="#555"/><rect x="4.5" y="0.0" width="3.3" height="3.3" fill="#555"/><rect x="4.5" y="4.5" width="3.3" height="3.3" fill="#555"/><rect x="4.5" y="9.0" width="3.3" height="3.3" fill="#555"/><rect x="9.0" y="0.0" width="3.3" height="3.3" fill="#555"/><rect x="9.0" y="4.5" width="3.3" height="3.3" fill="#555"/><rect x="9.0" y="9.0" width="3.3" height="3.3" fill="#555"/></svg>
<svg style="left:1339.3px;top:369.25px;" width="7" height="4.5" viewBox="0 0 7 4.5"><polyline points="1,1 3.5,3.5 6,1" fill="none" stroke="#aaa" stroke-width="1"/></svg>
<div class="t" style="left:1359.75px;top:77.57px;font-size:12.50px;color:#333;">Data Selector</div>
<svg style="left:1643px;top:75.75px;" width="12" height="14" viewBox="0 0 12 14"><path d="M3.2,1.9 H9.6 Q10.6,1.9 10,2.8 Q8.3,4.4 8.3,5.6 Q8.6,7 10.4,8.1 Q11.2,9 10.2,9 H2.8 Q1.8,9 2.6,8.1 Q4.4,7 4.7,5.6 Q4.7,4.4 3,2.8 Q2.4,1.9 3.2,1.9 Z M6.5,9 V12.4" fill="none" stroke="#8c8c8c" stroke-width="1.05" stroke-linejoin="round"/></svg>
<div class="a" style="left:1359.75px;top:101.25px;width:68.25px;height:18.25px;background:#e8e6f0;border-radius:2px;"></div>
<div class="a" style="left:1428.00px;top:120.50px;width:226.75px;height:1.00px;background:#e6e6e6;"></div>
<div class="a" style="left:1359.75px;top:119.50px;width:68.25px;height:2.25px;background:#1b005a;"></div>
<div class="t" style="left:1375.25px;top:106.32px;font-size:11.00px;color:#2a1a6a;letter-spacing:-0.13px;">Primary</div>
<div class="t" style="left:1443.50px;top:106.32px;font-size:11.00px;color:#333;letter-spacing:-0.27px;">Processed</div>
<svg style="left:1366px;top:136.75px;" width="6" height="5" viewBox="0 0 6 5"><polygon points="0.5,1 5.5,1 3,4" fill="#aaa"/></svg>
<div class="a" style="left:1378.00px;top:133.25px;width:12.20px;height:12.20px;background:#1b005a;border-radius:2px;"></div>
<div class="a" style="left:1381.05px;top:138.60px;width:6.10px;height:1.50px;background:#fff;"></div>
<div class="t" style="left:1393.50px;top:134.35px;font-size:10.95px;color:#333;">Waveform</div>
<svg style="left:1638.95px;top:132.45px;" width="13.6" height="13.6" viewBox="0 0 13.6 13.6"><circle cx="6.8" cy="6.8" r="5.8" fill="none" stroke="#8c8c8c" stroke-width="1"/><path d="M4.364,6.8 H9.236 M6.8,4.364 V9.236" stroke="#8c8c8c" stroke-width="1.1"/></svg>
<svg style="left:1381px;top:159.305px;" width="5" height="6" viewBox="0 0 5 6"><polygon points="1,0.5 4,3 1,5.5" fill="#aaa"/></svg>
<div class="a" style="left:1391.75px;top:156.31px;width:12.20px;height:12.20px;background:#1b005a;border-radius:2px;"></div>
<svg style="left:1391.75px;top:156.305px;" width="12.2" height="12.2" viewBox="0 0 12.2 12.2"><polyline points="2.928,6.343999999999999 5.2459999999999996,8.54 9.516,3.6599999999999997" fill="none" stroke="#fff" stroke-width="1"/></svg>
<div class="t" style="left:1407.25px;top:157.40px;font-size:10.95px;color:#333;">Acquired Waveform</div>
<svg style="left:1381px;top:182.36px;" width="5" height="6" viewBox="0 0 5 6"><polygon points="1,0.5 4,3 1,5.5" fill="#aaa"/></svg>
<div class="a" style="left:1391.75px;top:179.36px;width:12.20px;height:12.20px;background:#fff;border:1px solid #dcdcdc;border-radius:2px;"></div>
<div class="t" style="left:1407.25px;top:180.46px;font-size:10.95px;color:#333;">Reference Waveform</div>
<svg style="left:1381px;top:205.415px;" width="5" height="6" viewBox="0 0 5 6"><polygon points="1,0.5 4,3 1,5.5" fill="#aaa"/></svg>
<div class="a" style="left:1391.75px;top:202.41px;width:12.20px;height:12.20px;background:#1b005a;border-radius:2px;"></div>
<svg style="left:1391.75px;top:202.415px;" width="12.2" height="12.2" viewBox="0 0 12.2 12.2"><polyline points="2.928,6.343999999999999 5.2459999999999996,8.54 9.516,3.6599999999999997" fill="none" stroke="#fff" stroke-width="1"/></svg>
<div class="t" style="left:1407.25px;top:203.51px;font-size:10.95px;color:#333;">Impulse Response</div>
<svg style="left:1381px;top:228.47px;" width="5" height="6" viewBox="0 0 5 6"><polygon points="1,0.5 4,3 1,5.5" fill="#aaa"/></svg>
<div class="a" style="left:1391.75px;top:225.47px;width:12.20px;height:12.20px;background:#fff;border:1px solid #dcdcdc;border-radius:2px;"></div>
<div class="t" style="left:1407.25px;top:226.57px;font-size:10.95px;color:#333;">SoneTrac Residual Waveform</div>
<svg style="left:1366px;top:252.025px;" width="6" height="5" viewBox="0 0 6 5"><polygon points="0.5,1 5.5,1 3,4" fill="#aaa"/></svg>
<div class="a" style="left:1378.00px;top:248.53px;width:12.20px;height:12.20px;background:#1b005a;border-radius:2px;"></div>
<div class="a" style="left:1381.05px;top:253.88px;width:6.10px;height:1.50px;background:#fff;"></div>
<div class="t" style="left:1393.50px;top:249.62px;font-size:10.95px;color:#333;">Analysis Data</div>
<svg style="left:1638.95px;top:247.725px;" width="13.6" height="13.6" viewBox="0 0 13.6 13.6"><circle cx="6.8" cy="6.8" r="5.8" fill="none" stroke="#8c8c8c" stroke-width="1"/><path d="M4.364,6.8 H9.236 M6.8,4.364 V9.236" stroke="#8c8c8c" stroke-width="1.1"/></svg>
<svg style="left:1381px;top:274.58px;" width="5" height="6" viewBox="0 0 5 6"><polygon points="1,0.5 4,3 1,5.5" fill="#aaa"/></svg>
<div class="a" style="left:1391.75px;top:271.58px;width:12.20px;height:12.20px;background:#1b005a;border-radius:2px;"></div>
<svg style="left:1391.75px;top:271.58px;" width="12.2" height="12.2" viewBox="0 0 12.2 12.2"><polyline points="2.928,6.343999999999999 5.2459999999999996,8.54 9.516,3.6599999999999997" fill="none" stroke="#fff" stroke-width="1"/></svg>
<div class="t" style="left:1407.25px;top:272.68px;font-size:10.95px;color:#333;">RMS Level</div>
<svg style="left:1381px;top:297.635px;" width="5" height="6" viewBox="0 0 5 6"><polygon points="1,0.5 4,3 1,5.5" fill="#aaa"/></svg>
<div class="a" style="left:1391.75px;top:294.63px;width:12.20px;height:12.20px;background:#fff;border:1px solid #dcdcdc;border-radius:2px;"></div>
<div class="t" style="left:1407.25px;top:295.73px;font-size:10.95px;color:#333;">Gain</div>
<svg style="left:1381px;top:320.69px;" width="5" height="6" viewBox="0 0 5 6"><polygon points="1,0.5 4,3 1,5.5" fill="#aaa"/></svg>
<div class="a" style="left:1391.75px;top:317.69px;width:12.20px;height:12.20px;background:#fff;border:1px solid #dcdcdc;border-radius:2px;"></div>
<div class="t" style="left:1407.25px;top:318.79px;font-size:10.95px;color:#333;">Relative Level</div>
<svg style="left:1381px;top:343.745px;" width="5" height="6" viewBox="0 0 5 6"><polygon points="1,0.5 4,3 1,5.5" fill="#aaa"/></svg>
<div class="a" style="left:1391.75px;top:340.75px;width:12.20px;height:12.20px;background:#fff;border:1px solid #dcdcdc;border-radius:2px;"></div>
<div class="t" style="left:1407.25px;top:341.84px;font-size:10.95px;color:#333;">Deviation</div>
<svg style="left:1381px;top:366.8px;" width="5" height="6" viewBox="0 0 5 6"><polygon points="1,0.5 4,3 1,5.5" fill="#aaa"/></svg>
<div class="a" style="left:1391.75px;top:363.80px;width:12.20px;height:12.20px;background:#fff;border:1px solid #dcdcdc;border-radius:2px;"></div>
<div class="t" style="left:1407.25px;top:364.90px;font-size:10.95px;color:#333;">Phase</div>
<svg style="left:1381px;top:389.855px;" width="5" height="6" viewBox="0 0 5 6"><polygon points="1,0.5 4,3 1,5.5" fill="#aaa"/></svg>
<div class="a" style="left:1391.75px;top:386.86px;width:12.20px;height:12.20px;background:#fff;border:1px solid #dcdcdc;border-radius:2px;"></div>
<div class="t" style="left:1407.25px;top:387.95px;font-size:10.95px;color:#333;">Group Delay</div>
<svg style="left:1381px;top:412.90999999999997px;" width="5" height="6" viewBox="0 0 5 6"><polygon points="1,0.5 4,3 1,5.5" fill="#aaa"/></svg>
<div class="a" style="left:1391.75px;top:409.91px;width:12.20px;height:12.20px;background:#1b005a;border-radius:2px;"></div>
<svg style="left:1391.75px;top:409.90999999999997px;" width="12.2" height="12.2" viewBox="0 0 12.2 12.2"><polyline points="2.928,6.343999999999999 5.2459999999999996,8.54 9.516,3.6599999999999997" fill="none" stroke="#fff" stroke-width="1"/></svg>
<div class="t" style="left:1407.25px;top:411.01px;font-size:10.95px;color:#333;">THD Ratio</div>
<svg style="left:1381px;top:435.965px;" width="5" height="6" viewBox="0 0 5 6"><polygon points="1,0.5 4,3 1,5.5" fill="#aaa"/></svg>
<div class="a" style="left:1391.75px;top:432.96px;width:12.20px;height:12.20px;background:#fff;border:1px solid #dcdcdc;border-radius:2px;"></div>
<div class="t" style="left:1407.25px;top:434.06px;font-size:10.95px;color:#333;">THD Level</div>
<svg style="left:1381px;top:459.02px;" width="5" height="6" viewBox="0 0 5 6"><polygon points="1,0.5 4,3 1,5.5" fill="#aaa"/></svg>
<div class="a" style="left:1391.75px;top:456.02px;width:12.20px;height:12.20px;background:#fff;border:1px solid #dcdcdc;border-radius:2px;"></div>
<div class="t" style="left:1407.25px;top:457.12px;font-size:10.95px;color:#333;">Level and Distortion</div>
<svg style="left:1381px;top:482.075px;" width="5" height="6" viewBox="0 0 5 6"><polygon points="1,0.5 4,3 1,5.5" fill="#aaa"/></svg>
<div class="a" style="left:1391.75px;top:479.07px;width:12.20px;height:12.20px;background:#1b005a;border-radius:2px;"></div>
<svg style="left:1391.75px;top:479.075px;" width="12.2" height="12.2" viewBox="0 0 12.2 12.2"><polyline points="2.928,6.343999999999999 5.2459999999999996,8.54 9.516,3.6599999999999997" fill="none" stroke="#fff" stroke-width="1"/></svg>
<div class="t" style="left:1407.25px;top:480.17px;font-size:10.95px;color:#333;">Distortion Product Ratio</div>
<svg style="left:1381px;top:505.13px;" width="5" height="6" viewBox="0 0 5 6"><polygon points="1,0.5 4,3 1,5.5" fill="#aaa"/></svg>
<div class="a" style="left:1391.75px;top:502.13px;width:12.20px;height:12.20px;background:#fff;border:1px solid #dcdcdc;border-radius:2px;"></div>
<div class="t" style="left:1407.25px;top:503.23px;font-size:10.95px;color:#333;">Distortion Product Level</div>
<svg style="left:1381px;top:528.185px;" width="5" height="6" viewBox="0 0 5 6"><polygon points="1,0.5 4,3 1,5.5" fill="#aaa"/></svg>
<div class="a" style="left:1391.75px;top:525.18px;width:12.20px;height:12.20px;background:#fff;border:1px solid #dcdcdc;border-radius:2px;"></div>
<div class="t" style="left:1407.25px;top:526.28px;font-size:10.95px;color:#333;">Energy Time Curve</div>
<svg style="left:1381px;top:551.24px;" width="5" height="6" viewBox="0 0 5 6"><polygon points="1,0.5 4,3 1,5.5" fill="#aaa"/></svg>
<div class="a" style="left:1391.75px;top:548.24px;width:12.20px;height:12.20px;background:#fff;border:1px solid #dcdcdc;border-radius:2px;"></div>
<div class="t" style="left:1407.25px;top:549.34px;font-size:10.95px;color:#333;">Rub and Buzz Crest Factor</div>
<svg style="left:1381px;top:574.2950000000001px;" width="5" height="6" viewBox="0 0 5 6"><polygon points="1,0.5 4,3 1,5.5" fill="#aaa"/></svg>
<div class="a" style="left:1391.75px;top:571.30px;width:12.20px;height:12.20px;background:#fff;border:1px solid #dcdcdc;border-radius:2px;"></div>
<div class="t" style="left:1407.25px;top:572.39px;font-size:10.95px;color:#333;">Rub and Buzz Peak Ratio</div>
<svg style="left:1381px;top:597.35px;" width="5" height="6" viewBox="0 0 5 6"><polygon points="1,0.5 4,3 1,5.5" fill="#aaa"/></svg>
<div class="a" style="left:1391.75px;top:594.35px;width:12.20px;height:12.20px;background:#fff;border:1px solid #dcdcdc;border-radius:2px;"></div>
<div class="t" style="left:1407.25px;top:595.45px;font-size:10.95px;color:#333;">SoneTrac Rub and Buzz</div>
<div class="a" style="left:1355.00px;top:687.60px;width:305.60px;height:24.90px;background:#ecebf1;"></div>
<div class="t" style="left:1359.30px;top:695.67px;font-size:11.00px;color:#333;letter-spacing:-0.08px;">Data Sets</div>
<div class="t" style="left:1391.10px;top:720.57px;font-size:11.00px;color:#8c8c8c;letter-spacing:-0.16px;">Data Set</div>
<div class="t" style="left:1485.70px;top:720.57px;font-size:11.00px;color:#8c8c8c;letter-spacing:-0.28px;">Time</div>
<div class="a" style="left:1355.00px;top:737.00px;width:305.60px;height:1.00px;background:#ececec;"></div>
<div class="a" style="left:1359.90px;top:745.10px;width:12.50px;height:12.50px;background:#1b005a;border-radius:2px;"></div>
<svg style="left:1359.9px;top:745.1px;" width="12.5" height="12.5" viewBox="0 0 12.5 12.5"><polyline points="3.0,6.5 5.375,8.75 9.75,3.75" fill="none" stroke="#fff" stroke-width="1"/></svg>
<div class="t" style="left:1391.00px;top:746.27px;font-size:11.00px;color:#333;letter-spacing:-0.05px;">Measure #2</div>
<div class="t" style="left:1485.70px;top:746.15px;font-size:11.24px;color:#333;">2025-09-24 20:02:40</div>
<svg style="left:1637.25px;top:743.9px;" width="10" height="12" viewBox="0 0 10 12"><path d="M1,2.5 H9 M3.5,2.5 V1 H6.5 V2.5 M2,2.5 V10.5 A0.8,0.8 0 0 0 2.8,11.2 H7.2 A0.8,0.8 0 0 0 8,10.5 V2.5 M4,4.5 V9 M6,4.5 V9" fill="none" stroke="#aaa" stroke-width="0.9"/></svg>
<div class="a" style="left:1355.00px;top:764.50px;width:305.60px;height:1.00px;background:#ececec;"></div>
<div class="a" style="left:1359.90px;top:772.80px;width:12.50px;height:12.50px;background:#fff;border:1px solid #dcdcdc;border-radius:2px;"></div>
<div class="t" style="left:1391.00px;top:773.97px;font-size:11.00px;color:#333;letter-spacing:-0.13px;">Measure #1</div>
<div class="t" style="left:1485.70px;top:773.85px;font-size:11.24px;color:#333;">2025-09-24 20:02:08</div>
<svg style="left:1637.25px;top:771.6px;" width="10" height="12" viewBox="0 0 10 12"><path d="M1,2.5 H9 M3.5,2.5 V1 H6.5 V2.5 M2,2.5 V10.5 A0.8,0.8 0 0 0 2.8,11.2 H7.2 A0.8,0.8 0 0 0 8,10.5 V2.5 M4,4.5 V9 M6,4.5 V9" fill="none" stroke="#aaa" stroke-width="0.9"/></svg>
<div class="a" style="left:1355.00px;top:792.30px;width:305.60px;height:1.00px;background:#ececec;"></div>
<div class="t" style="left:1651.85px;top:101.92px;font-size:13.29px;color:#333;transform:rotate(90deg);transform-origin:center;">Monitor</div>
<div class="a" style="left:1668.50px;top:146.00px;width:11.00px;height:1.00px;background:#888;"></div>
<div class="t" style="left:1645.85px;top:186.32px;font-size:12.50px;color:#333;transform:rotate(90deg);transform-origin:center;">Generator</div>
<div class="a" style="left:884.20px;top:384.00px;width:1.30px;height:504.00px;background:#ebebeb;"></div>
<div class="a" style="left:417.00px;top:636.00px;width:935.00px;height:1.30px;background:#ebebeb;"></div>
<div class="t" style="left:599.70px;top:389.07px;font-size:11.00px;color:#333;letter-spacing:-0.20px;">Frequency Response</div>
<svg style="left:845.2px;top:406.6px;" width="8" height="8" viewBox="0 0 8 8"><circle cx="4" cy="4" r="3.9" fill="#1b005a"/></svg>
<div class="t" style="left:855.70px;top:405.67px;font-size:11.00px;color:#333;letter-spacing:-1.00px;">Ch1</div>
<svg style="left:417px;top:384px" width="468" height="252" viewBox="417 384 468 252"><path d="M472.00,427.82H881.70" stroke="#e0e0e0" stroke-width="1.1"/><path d="M472.00,438.54H881.70" stroke="#e0e0e0" stroke-width="1.1"/><path d="M472.00,449.26H881.70" stroke="#e0e0e0" stroke-width="1.1"/><path d="M472.00,459.98H881.70" stroke="#e0e0e0" stroke-width="1.1"/><path d="M472.00,470.70H881.70" stroke="#a9a9a9" stroke-width="1.2"/><path d="M472.00,481.42H881.70" stroke="#e0e0e0" stroke-width="1.1"/><path d="M472.00,492.14H881.70" stroke="#e0e0e0" stroke-width="1.1"/><path d="M472.00,502.86H881.70" stroke="#e0e0e0" stroke-width="1.1"/><path d="M472.00,513.58H881.70" stroke="#e0e0e0" stroke-width="1.1"/><path d="M472.00,524.30H881.70" stroke="#a9a9a9" stroke-width="1.2"/><path d="M472.00,535.02H881.70" stroke="#e0e0e0" stroke-width="1.1"/><path d="M472.00,545.74H881.70" stroke="#e0e0e0" stroke-width="1.1"/><path d="M472.00,556.46H881.70" stroke="#e0e0e0" stroke-width="1.1"/><path d="M472.00,567.18H881.70" stroke="#e0e0e0" stroke-width="1.1"/><path d="M472.00,577.90H881.70" stroke="#a9a9a9" stroke-width="1.2"/><path d="M472.00,588.62H881.70" stroke="#e0e0e0" stroke-width="1.1"/><path d="M474.38,419.70V599.20" stroke="#e0e0e0" stroke-width="1.1"/><path d="M498.29,419.70V599.20" stroke="#e0e0e0" stroke-width="1.1"/><path d="M515.26,419.70V599.20" stroke="#e0e0e0" stroke-width="1.1"/><path d="M528.42,419.70V599.20" stroke="#e0e0e0" stroke-width="1.1"/><path d="M539.17,419.70V599.20" stroke="#e0e0e0" stroke-width="1.1"/><path d="M548.26,419.70V599.20" stroke="#e0e0e0" stroke-width="1.1"/><path d="M556.14,419.70V599.20" stroke="#e0e0e0" stroke-width="1.1"/><path d="M563.09,419.70V599.20" stroke="#e0e0e0" stroke-width="1.1"/><path d="M569.30,419.70V599.20" stroke="#a9a9a9" stroke-width="1.2"/><path d="M610.18,419.70V599.20" stroke="#e0e0e0" stroke-width="1.1"/><path d="M634.09,419.70V599.20" stroke="#e0e0e0" stroke-width="1.1"/><path d="M651.06,419.70V599.20" stroke="#e0e0e0" stroke-width="1.1"/><path d="M664.22,419.70V599.20" stroke="#e0e0e0" stroke-width="1.1"/><path d="M674.97,419.70V599.20" stroke="#e0e0e0" stroke-width="1.1"/><path d="M684.06,419.70V599.20" stroke="#e0e0e0" stroke-width="1.1"/><path d="M691.94,419.70V599.20" stroke="#e0e0e0" stroke-width="1.1"/><path d="M698.89,419.70V599.20" stroke="#e0e0e0" stroke-width="1.1"/><path d="M705.10,419.70V599.20" stroke="#a9a9a9" stroke-width="1.2"/><path d="M745.98,419.70V599.20" stroke="#e0e0e0" stroke-width="1.1"/><path d="M769.89,419.70V599.20" stroke="#e0e0e0" stroke-width="1.1"/><path d="M786.86,419.70V599.20" stroke="#e0e0e0" stroke-width="1.1"/><path d="M800.02,419.70V599.20" stroke="#e0e0e0" stroke-width="1.1"/><path d="M810.77,419.70V599.20" stroke="#e0e0e0" stroke-width="1.1"/><path d="M819.86,419.70V599.20" stroke="#e0e0e0" stroke-width="1.1"/><path d="M827.74,419.70V599.20" stroke="#e0e0e0" stroke-width="1.1"/><path d="M834.69,419.70V599.20" stroke="#e0e0e0" stroke-width="1.1"/><path d="M840.90,419.70V599.20" stroke="#a9a9a9" stroke-width="1.2"/><path d="M881.78,419.70V599.20" stroke="#e0e0e0" stroke-width="1.1"/><path d="M472.0,516.1 472.5,516.0 473.0,515.8 473.5,515.5 474.0,515.2 474.5,514.9 475.0,514.6 475.5,514.3 476.0,514.0 476.5,513.7 477.0,513.4 477.5,513.1 478.0,512.8 478.5,512.5 479.0,512.2 479.5,511.9 480.0,511.7 480.5,511.4 481.0,511.2 481.5,511.0 482.0,510.7 482.5,510.5 483.0,510.3 483.5,510.1 484.0,509.9 484.5,509.7 485.0,509.5 485.5,509.2 486.0,509.0 486.5,508.9 487.0,508.7 487.5,508.6 488.0,508.5 488.5,508.4 489.0,508.3 489.5,508.3 490.0,508.2 490.5,508.1 491.0,508.1 491.5,508.0 492.0,507.9 492.5,507.8 493.0,507.8 493.5,507.7 494.0,507.6 494.5,507.6 495.0,507.6 495.5,507.5 496.0,507.5 496.5,507.5 497.0,507.5 497.5,507.5 498.0,507.5 498.5,507.5 499.0,507.5 499.5,507.5 500.0,507.5 500.5,507.5 501.0,507.5 501.5,507.5 502.0,507.5 502.5,507.5 503.0,507.5 503.5,507.5 504.0,507.5 504.5,507.5 505.0,507.4 505.5,507.4 506.0,507.4 506.5,507.3 507.0,507.2 507.5,507.2 508.0,507.1 508.5,507.0 509.0,507.0 509.5,506.9 510.0,506.8 510.5,506.8 511.0,506.7 511.5,506.7 512.0,506.6 512.5,506.5 513.0,506.5 513.5,506.4 514.0,506.3 514.5,506.3 515.0,506.2 515.5,506.1 516.0,506.1 516.5,506.0 517.0,506.0 517.5,505.9 518.0,505.8 518.5,505.8 519.0,505.7 519.5,505.7 520.0,505.6 520.5,505.5 521.0,505.5 521.5,505.4 522.0,505.4 522.5,505.3 523.0,505.2 523.5,505.2 524.0,505.1 524.5,505.1 525.0,505.0 525.5,505.0 526.0,504.9 526.5,504.9 527.0,504.9 527.5,504.9 528.0,504.8 528.5,504.8 529.0,504.8 529.5,504.7 530.0,504.7 530.5,504.7 531.0,504.7 531.5,504.7 532.0,504.7 532.5,504.7 533.0,504.7 533.5,504.8 534.0,504.8 534.5,504.9 535.0,504.9 535.5,504.9 536.0,505.0 536.5,505.0 537.0,505.0 537.5,504.9 538.0,504.9 538.5,504.8 539.0,504.7 539.5,504.6 540.0,504.5 540.5,504.4 541.0,504.3 541.5,504.2 542.0,504.1 542.5,504.0 543.0,503.9 543.5,503.8 544.0,503.7 544.5,503.7 545.0,503.7 545.5,503.7 546.0,503.7 546.5,503.8 547.0,503.8 547.5,503.9 548.0,504.0 548.5,504.1 549.0,504.2 549.5,504.2 550.0,504.3 550.5,504.3 551.0,504.3 551.5,504.3 552.0,504.3 552.5,504.2 553.0,504.1 553.5,503.9 554.0,503.8 554.5,503.7 555.0,503.6 555.5,503.6 556.0,503.5 556.5,503.5 557.0,503.5 557.5,503.5 558.0,503.6 558.5,503.6 559.0,503.7 559.5,503.8 560.0,503.8 560.5,503.9 561.0,503.9 561.5,503.9 562.0,503.9 562.5,503.9 563.0,503.8 563.5,503.8 564.0,503.7 564.5,503.7 565.0,503.6 565.5,503.5 566.0,503.5 566.5,503.4 567.0,503.3 567.5,503.3 568.0,503.2 568.5,503.2 569.0,503.2 569.5,503.2 570.0,503.2 570.5,503.2 571.0,503.1 571.5,503.1 572.0,503.1 572.5,503.1 573.0,503.1 573.5,503.1 574.0,503.1 574.5,503.1 575.0,503.1 575.5,503.1 576.0,503.1 576.5,503.1 577.0,503.0 577.5,503.0 578.0,503.0 578.5,503.0 579.0,503.0 579.5,503.0 580.0,503.0 580.5,503.0 581.0,503.0 581.5,503.0 582.0,503.0 582.5,503.0 583.0,503.0 583.5,503.0 584.0,503.0 584.5,503.0 585.0,503.0 585.5,503.0 586.0,503.0 586.5,503.0 587.0,503.0 587.5,503.0 588.0,503.0 588.5,503.0 589.0,503.0 589.5,503.0 590.0,503.0 590.5,503.0 591.0,503.0 591.5,503.0 592.0,503.0 592.5,503.0 593.0,503.0 593.5,503.0 594.0,503.0 594.5,503.0 595.0,503.0 595.5,503.0 596.0,503.0 596.5,503.0 597.0,503.0 597.5,503.0 598.0,503.0 598.5,503.0 599.0,503.0 599.5,503.0 600.0,502.9 600.5,502.9 601.0,502.9 601.5,502.9 602.0,502.9 602.5,502.9 603.0,502.9 603.5,502.9 604.0,502.9 604.5,502.9 605.0,502.9 605.5,502.9 606.0,502.9 606.5,502.9 607.0,502.9 607.5,502.9 608.0,502.9 608.5,502.9 609.0,502.9 609.5,502.9 610.0,502.9 610.5,502.9 611.0,502.9 611.5,502.9 612.0,502.9 612.5,502.9 613.0,502.9 613.5,502.9 614.0,502.9 614.5,502.9 615.0,502.9 615.5,502.9 616.0,502.9 616.5,502.9 617.0,502.9 617.5,502.9 618.0,502.9 618.5,502.9 619.0,502.9 619.5,502.9 620.0,502.9 620.5,502.9 621.0,502.9 621.5,502.9 622.0,502.9 622.5,502.9 623.0,502.9 623.5,502.9 624.0,502.9 624.5,502.9 625.0,502.9 625.5,502.9 626.0,502.9 626.5,502.9 627.0,502.9 627.5,502.9 628.0,502.9 628.5,502.9 629.0,502.9 629.5,502.9 630.0,502.9 630.5,502.9 631.0,502.9 631.5,502.9 632.0,502.9 632.5,502.9 633.0,502.9 633.5,502.9 634.0,502.9 634.5,502.9 635.0,502.9 635.5,502.9 636.0,502.9 636.5,502.9 637.0,502.9 637.5,502.9 638.0,502.9 638.5,502.9 639.0,502.9 639.5,502.9 640.0,502.9 640.5,502.9 641.0,502.9 641.5,502.9 642.0,502.9 642.5,502.9 643.0,502.9 643.5,502.9 644.0,502.9 644.5,502.9 645.0,502.9 645.5,502.9 646.0,502.9 646.5,502.9 647.0,502.9 647.5,502.9 648.0,502.9 648.5,502.9 649.0,502.9 649.5,502.9 650.0,502.9 650.5,502.9 651.0,502.9 651.5,502.9 652.0,502.9 652.5,502.9 653.0,502.9 653.5,502.9 654.0,502.9 654.5,502.9 655.0,502.9 655.5,502.9 656.0,502.9 656.5,502.9 657.0,502.9 657.5,502.9 658.0,502.9 658.5,502.9 659.0,502.9 659.5,502.9 660.0,502.9 660.5,502.9 661.0,502.9 661.5,502.9 662.0,502.9 662.5,502.9 663.0,502.9 663.5,502.9 664.0,502.9 664.5,502.9 665.0,502.9 665.5,502.9 666.0,502.9 666.5,502.9 667.0,502.9 667.5,502.9 668.0,502.9 668.5,502.9 669.0,502.9 669.5,502.9 670.0,502.9 670.5,502.9 671.0,502.9 671.5,502.9 672.0,502.9 672.5,502.9 673.0,502.9 673.5,502.9 674.0,502.9 674.5,502.9 675.0,502.9 675.5,502.9 676.0,502.9 676.5,502.9 677.0,502.9 677.5,502.9 678.0,502.9 678.5,502.9 679.0,502.9 679.5,502.9 680.0,502.9 680.5,502.9 681.0,502.9 681.5,502.9 682.0,502.9 682.5,502.9 683.0,502.9 683.5,502.9 684.0,502.9 684.5,502.9 685.0,502.9 685.5,502.9 686.0,502.9 686.5,502.9 687.0,502.9 687.5,502.9 688.0,502.9 688.5,502.9 689.0,502.9 689.5,502.9 690.0,502.9 690.5,502.9 691.0,502.9 691.5,502.9 692.0,502.9 692.5,502.9 693.0,502.9 693.5,502.9 694.0,502.9 694.5,502.9 695.0,502.9 695.5,502.9 696.0,502.9 696.5,502.9 697.0,502.9 697.5,502.9 698.0,502.9 698.5,502.9 699.0,502.9 699.5,502.9 700.0,502.9 700.5,502.9 701.0,502.9 701.5,502.9 702.0,502.9 702.5,502.9 703.0,502.9 703.5,502.9 704.0,502.9 704.5,502.9 705.0,502.9 705.5,502.9 706.0,502.9 706.5,502.9 707.0,502.9 707.5,502.9 708.0,502.9 708.5,502.9 709.0,502.9 709.5,502.9 710.0,502.9 710.5,502.9 711.0,502.9 711.5,502.9 712.0,502.9 712.5,502.9 713.0,502.9 713.5,502.9 714.0,502.9 714.5,502.9 715.0,502.9 715.5,502.9 716.0,502.9 716.5,502.9 717.0,502.9 717.5,502.9 718.0,502.9 718.5,502.9 719.0,502.9 719.5,502.9 720.0,502.9 720.5,502.9 721.0,502.9 721.5,502.9 722.0,502.9 722.5,502.9 723.0,502.9 723.5,502.9 724.0,502.9 724.5,502.9 725.0,502.9 725.5,502.9 726.0,502.9 726.5,502.9 727.0,502.9 727.5,502.9 728.0,502.9 728.5,502.9 729.0,502.9 729.5,502.9 730.0,502.9 730.5,502.9 731.0,502.9 731.5,502.9 732.0,502.9 732.5,502.9 733.0,502.9 733.5,502.9 734.0,502.9 734.5,502.9 735.0,502.9 735.5,502.9 736.0,502.9 736.5,502.9 737.0,502.9 737.5,502.9 738.0,502.9 738.5,502.9 739.0,502.9 739.5,502.9 740.0,502.9 740.5,502.9 741.0,502.9 741.5,502.9 742.0,502.9 742.5,502.9 743.0,502.9 743.5,502.9 744.0,502.9 744.5,502.9 745.0,502.9 745.5,502.9 746.0,502.9 746.5,502.9 747.0,502.9 747.5,502.9 748.0,502.9 748.5,502.9 749.0,502.9 749.5,502.9 750.0,502.9 750.5,502.9 751.0,502.9 751.5,502.9 752.0,502.9 752.5,502.9 753.0,502.9 753.5,502.9 754.0,502.9 754.5,502.9 755.0,502.9 755.5,502.9 756.0,502.9 756.5,502.9 757.0,502.9 757.5,502.9 758.0,502.9 758.5,502.9 759.0,502.9 759.5,502.9 760.0,502.9 760.5,502.9 761.0,502.9 761.5,502.9 762.0,502.9 762.5,502.9 763.0,502.9 763.5,502.9 764.0,502.9 764.5,502.9 765.0,502.9 765.5,502.9 766.0,502.9 766.5,502.9 767.0,502.9 767.5,502.9 768.0,502.9 768.5,502.9 769.0,502.9 769.5,502.9 770.0,502.9 770.5,502.9 771.0,502.9 771.5,502.9 772.0,502.9 772.5,502.9 773.0,502.9 773.5,502.9 774.0,502.9 774.5,502.9 775.0,502.9 775.5,502.9 776.0,502.9 776.5,502.9 777.0,502.9 777.5,502.9 778.0,502.9 778.5,502.9 779.0,502.9 779.5,502.9 780.0,502.9 780.5,502.9 781.0,502.9 781.5,502.9 782.0,502.9 782.5,502.9 783.0,502.9 783.5,502.9 784.0,502.9 784.5,502.9 785.0,502.9 785.5,502.9 786.0,502.9 786.5,502.9 787.0,502.9 787.5,502.9 788.0,502.9 788.5,502.9 789.0,502.9 789.5,502.9 790.0,502.9 790.5,502.9 791.0,503.0 791.5,503.0 792.0,503.0 792.5,503.0 793.0,503.0 793.5,503.0 794.0,503.0 794.5,503.0 795.0,503.0 795.5,503.0 796.0,503.0 796.5,503.0 797.0,503.0 797.5,503.0 798.0,503.0 798.5,503.0 799.0,503.0 799.5,503.0 800.0,503.0 800.5,503.0 801.0,503.0 801.5,503.0 802.0,503.0 802.5,503.0 803.0,503.0 803.5,503.0 804.0,503.0 804.5,503.0 805.0,503.0 805.5,503.0 806.0,503.0 806.5,503.0 807.0,503.0 807.5,503.0 808.0,503.0 808.5,503.0 809.0,503.0 809.5,503.0 810.0,503.0 810.5,503.0 811.0,503.0 811.5,503.0 812.0,503.0 812.5,503.0 813.0,503.0 813.5,503.0 814.0,503.0 814.5,503.0 815.0,503.0 815.5,503.0 816.0,503.0 816.5,503.0 817.0,503.0 817.5,503.0 818.0,503.0 818.5,503.0 819.0,503.0 819.5,503.0 820.0,503.0 820.5,503.0 821.0,503.0 821.5,503.0 822.0,503.0 822.5,503.0 823.0,503.0 823.5,503.0 824.0,503.0 824.5,503.0 825.0,503.0 825.5,503.0 826.0,503.0 826.5,503.0 827.0,503.0 827.5,503.0 828.0,503.0 828.5,503.0 829.0,503.0 829.5,503.0 830.0,503.0 830.5,503.0 831.0,503.0 831.5,503.0 832.0,503.0 832.5,503.0 833.0,503.0 833.5,503.0 834.0,503.0 834.5,503.0 835.0,503.0 835.5,503.0 836.0,503.0 836.5,503.0 837.0,503.0 837.5,503.0 838.0,503.0 838.5,503.0 839.0,503.0 839.5,503.0 840.0,503.0 840.5,503.0 841.0,503.0 841.5,503.0 842.0,503.0 842.5,503.0 843.0,503.0 843.5,503.0 844.0,503.0 844.5,503.0 845.0,503.0 845.5,503.0 846.0,503.0 846.5,503.0 847.0,503.0 847.5,503.0 848.0,503.0 848.5,503.0 849.0,503.0 849.5,503.0 850.0,503.0 850.5,503.0 851.0,503.0 851.5,503.0 852.0,503.0 852.5,503.0 853.0,503.0 853.5,503.0 854.0,503.0 854.5,503.0 855.0,503.0 855.5,503.0 856.0,503.0 856.5,503.0 857.0,503.0 857.5,503.0 858.0,503.0 858.5,503.0 859.0,503.0 859.5,503.0 860.0,503.0 860.5,503.0 861.0,503.0 861.5,503.0 862.0,503.0 862.5,503.0 863.0,503.0 863.5,503.0 864.0,503.0 864.5,503.0 865.0,503.0 865.5,503.0 866.0,503.0 866.5,503.0 867.0,503.0 867.5,503.0 868.0,503.0 868.5,503.0 869.0,503.0 869.5,503.0 870.0,503.0 870.5,503.0 871.0,503.0 871.5,503.0 872.0,503.0 872.5,503.0 873.0,503.0 873.5,503.0 874.0,503.0 874.5,503.0 875.0,503.0 875.5,503.0 876.0,503.0 876.5,503.0 877.0,503.0 877.5,503.0 878.0,503.0 878.5,503.0 879.0,503.0 879.5,503.0 880.0,503.0 880.5,503.0 881.0,503.0 881.5,503.0" fill="none" stroke="#3a2c78" stroke-width="1.2" opacity="0.85"/><path d="M472.00,419.70V599.20" stroke="#8c8c8c" stroke-width="1.4"/><path d="M472.00,599.20H881.70" stroke="#8c8c8c" stroke-width="1.4"/></svg>
<div class="t" style="left:438.98px;top:466.48px;font-size:9.60px;color:#5a5a5a;">-20.00</div>
<div class="t" style="left:438.98px;top:520.08px;font-size:9.60px;color:#5a5a5a;">-25.00</div>
<div class="t" style="left:438.98px;top:573.68px;font-size:9.60px;color:#5a5a5a;">-30.00</div>
<div class="t" style="left:554.62px;top:603.78px;font-size:9.60px;color:#5a5a5a;">100.00</div>
<div class="t" style="left:693.36px;top:603.78px;font-size:9.60px;color:#5a5a5a;">1.00k</div>
<div class="t" style="left:826.49px;top:603.78px;font-size:9.60px;color:#5a5a5a;">10.00k</div>
<div class="t" style="left:636.60px;top:618.07px;font-size:11.00px;color:#444;letter-spacing:-0.21px;">Frequency(Hz)</div>
<div class="t" style="left:362.40px;top:508.80px;font-size:10.74px;color:#555;transform:rotate(-90deg);transform-origin:center;">Frequency Response(dBV)</div>
<div class="t" style="left:1094.50px;top:389.07px;font-size:11.00px;color:#333;letter-spacing:-0.26px;">THD Ratio</div>
<svg style="left:1314px;top:406.6px;" width="8" height="8" viewBox="0 0 8 8"><circle cx="4" cy="4" r="3.9" fill="#1b005a"/></svg>
<div class="t" style="left:1324.50px;top:405.67px;font-size:11.00px;color:#333;letter-spacing:-1.00px;">Ch1</div>
<svg style="left:885px;top:384px" width="467" height="252" viewBox="885 384 467 252"><path d="M946.25,434.00H1350.30" stroke="#a9a9a9" stroke-width="1.2"/><path d="M946.25,456.90H1350.30" stroke="#e0e0e0" stroke-width="1.1"/><path d="M946.25,479.80H1350.30" stroke="#a9a9a9" stroke-width="1.2"/><path d="M946.25,502.70H1350.30" stroke="#e0e0e0" stroke-width="1.1"/><path d="M946.25,525.60H1350.30" stroke="#a9a9a9" stroke-width="1.2"/><path d="M946.25,548.50H1350.30" stroke="#e0e0e0" stroke-width="1.1"/><path d="M946.25,571.40H1350.30" stroke="#a9a9a9" stroke-width="1.2"/><path d="M946.25,594.30H1350.30" stroke="#e0e0e0" stroke-width="1.1"/><path d="M948.70,419.70V599.20" stroke="#e0e0e0" stroke-width="1.1"/><path d="M974.14,419.70V599.20" stroke="#e0e0e0" stroke-width="1.1"/><path d="M992.20,419.70V599.20" stroke="#e0e0e0" stroke-width="1.1"/><path d="M1006.20,419.70V599.20" stroke="#e0e0e0" stroke-width="1.1"/><path d="M1017.64,419.70V599.20" stroke="#e0e0e0" stroke-width="1.1"/><path d="M1027.32,419.70V599.20" stroke="#e0e0e0" stroke-width="1.1"/><path d="M1035.70,419.70V599.20" stroke="#e0e0e0" stroke-width="1.1"/><path d="M1043.09,419.70V599.20" stroke="#e0e0e0" stroke-width="1.1"/><path d="M1049.70,419.70V599.20" stroke="#a9a9a9" stroke-width="1.2"/><path d="M1093.20,419.70V599.20" stroke="#e0e0e0" stroke-width="1.1"/><path d="M1118.64,419.70V599.20" stroke="#e0e0e0" stroke-width="1.1"/><path d="M1136.70,419.70V599.20" stroke="#e0e0e0" stroke-width="1.1"/><path d="M1150.70,419.70V599.20" stroke="#e0e0e0" stroke-width="1.1"/><path d="M1162.14,419.70V599.20" stroke="#e0e0e0" stroke-width="1.1"/><path d="M1171.82,419.70V599.20" stroke="#e0e0e0" stroke-width="1.1"/><path d="M1180.20,419.70V599.20" stroke="#e0e0e0" stroke-width="1.1"/><path d="M1187.59,419.70V599.20" stroke="#e0e0e0" stroke-width="1.1"/><path d="M1194.20,419.70V599.20" stroke="#a9a9a9" stroke-width="1.2"/><path d="M1237.70,419.70V599.20" stroke="#e0e0e0" stroke-width="1.1"/><path d="M1263.14,419.70V599.20" stroke="#e0e0e0" stroke-width="1.1"/><path d="M1281.20,419.70V599.20" stroke="#e0e0e0" stroke-width="1.1"/><path d="M1295.20,419.70V599.20" stroke="#e0e0e0" stroke-width="1.1"/><path d="M1306.64,419.70V599.20" stroke="#e0e0e0" stroke-width="1.1"/><path d="M1316.32,419.70V599.20" stroke="#e0e0e0" stroke-width="1.1"/><path d="M1324.70,419.70V599.20" stroke="#e0e0e0" stroke-width="1.1"/><path d="M1332.09,419.70V599.20" stroke="#e0e0e0" stroke-width="1.1"/><path d="M1338.70,419.70V599.20" stroke="#a9a9a9" stroke-width="1.2"/><path d="M946.2,520.4 947.0,520.2 947.7,520.0 948.4,519.8 949.1,519.7 949.8,519.5 950.5,519.3 951.2,519.1 951.9,519.0 952.6,518.8 953.3,518.6 954.0,518.5 954.7,518.3 955.4,518.3 956.1,518.1 956.8,518.0 957.5,517.9 958.2,517.7 958.9,517.6 959.6,517.6 960.3,517.4 961.0,517.3 961.7,517.3 962.4,517.1 963.1,517.1 963.8,517.1 964.5,517.0 965.2,516.9 965.9,516.8 966.6,516.7 967.3,516.6 968.0,516.7 968.7,516.5 969.4,516.1 970.1,516.4 970.8,516.2 971.5,516.1 972.2,515.9 972.9,515.9 973.6,515.6 974.3,515.6 975.0,515.4 975.7,515.1 976.4,515.1 977.1,514.9 977.8,514.7 978.5,514.7 979.2,514.7 979.9,514.6 980.6,514.3 981.3,514.3 982.0,514.1 982.7,514.0 983.4,514.0 984.1,513.8 984.8,513.7 985.5,513.7 986.2,513.4 986.9,513.6 987.6,513.5 988.3,513.3 989.0,513.4 989.7,512.9 990.4,513.1 991.1,513.2 991.8,513.0 992.5,513.1 993.2,513.1 993.9,513.3 994.6,513.1 995.3,512.9 996.0,513.1 996.7,513.0 997.4,513.1 998.1,513.2 998.8,513.1 999.5,513.1 1000.2,513.3 1000.9,513.3 1001.6,513.6 1002.3,513.4 1003.0,513.5 1003.7,513.7 1004.4,513.5 1005.1,513.6 1005.8,513.5 1006.5,513.6 1007.2,513.7 1007.9,513.4 1008.6,513.6 1009.3,513.5 1010.0,513.4 1010.7,513.3 1011.4,513.3 1012.1,513.2 1012.8,513.0 1013.5,512.9 1014.2,512.7 1014.9,512.4 1015.6,512.0 1016.3,512.6 1017.0,512.0 1017.7,511.9 1018.4,511.9 1019.1,511.6 1019.8,511.5 1020.5,511.3 1021.2,511.4 1021.9,511.1 1022.6,510.8 1023.3,510.5 1024.0,510.3 1024.7,510.9 1025.4,511.2 1026.1,511.5 1026.8,511.5 1027.5,512.2 1028.2,512.4 1028.9,512.5 1029.6,512.7 1030.3,513.5 1031.0,513.9 1031.7,513.8 1032.4,514.8 1033.1,515.2 1033.8,515.5 1034.5,516.2 1035.2,516.5 1035.9,517.1 1036.6,517.3 1037.3,518.1 1038.0,518.0 1038.7,518.3 1039.4,518.6 1040.1,518.2 1040.8,517.3 1041.5,517.4 1042.2,517.0 1042.9,516.5 1043.6,516.1 1044.3,515.6 1045.0,514.7 1045.7,514.1 1046.4,513.8 1047.1,512.3 1047.8,512.1 1048.5,510.6 1049.2,510.7 1049.9,509.9 1050.6,509.1 1051.3,509.1 1052.0,508.0 1052.7,508.1 1053.4,508.1 1054.1,508.0 1054.8,508.4 1055.5,507.9 1056.2,508.4 1056.9,508.7 1057.6,508.7 1058.3,509.8 1059.0,509.9 1059.7,510.4 1060.4,510.7 1061.1,511.1 1061.8,511.8 1062.5,512.3 1063.2,512.5 1063.9,513.3 1064.6,513.2 1065.3,513.6 1066.0,513.4 1066.7,514.5 1067.4,514.6 1068.1,514.3 1068.8,514.8 1069.5,514.2 1070.2,513.8 1070.9,512.5 1071.6,511.8 1072.3,512.0 1073.0,511.4 1073.7,510.9 1074.4,510.6 1075.1,509.8 1075.8,509.5 1076.5,508.4 1077.2,509.4 1077.9,507.4 1078.6,506.7 1079.3,506.5 1080.0,505.7 1080.7,505.3 1081.4,505.1 1082.1,504.1 1082.8,504.2 1083.5,504.1 1084.2,503.4 1084.9,504.1 1085.6,503.9 1086.3,504.3 1087.0,504.0 1087.7,504.3 1088.4,504.4 1089.1,505.1 1089.8,504.8 1090.5,506.2 1091.2,505.7 1091.9,506.3 1092.6,506.6 1093.3,506.0 1094.0,506.8 1094.7,506.8 1095.4,506.5 1096.1,506.5 1096.8,506.2 1097.5,506.0 1098.2,505.5 1098.9,504.9 1099.6,505.5 1100.3,505.0 1101.0,504.4 1101.7,503.4 1102.4,503.2 1103.1,503.1 1103.8,502.6 1104.5,502.2 1105.2,502.0 1105.9,501.9 1106.6,501.6 1107.3,501.0 1108.0,501.0 1108.7,501.4 1109.4,501.3 1110.1,502.1 1110.8,502.3 1111.5,502.7 1112.2,502.2 1112.9,499.7 1113.6,503.3 1114.3,503.6 1115.0,504.2 1115.7,503.2 1116.4,504.1 1117.1,504.8 1117.8,504.6 1118.5,504.4 1119.2,504.8 1119.9,503.1 1120.6,503.9 1121.3,503.5 1122.0,503.0 1122.7,506.3 1123.4,502.5 1124.1,501.7 1124.8,502.2 1125.5,501.6 1126.2,501.6 1126.9,499.9 1127.6,500.2 1128.3,499.9 1129.0,499.3 1129.7,499.9 1130.0,498.4 1130.2,499.4 1130.5,499.3 1130.8,499.0 1131.0,498.8 1131.2,498.7 1131.5,498.2 1131.8,499.5 1132.0,498.3 1132.2,498.7 1132.5,498.3 1132.8,498.8 1133.0,499.0 1133.2,498.3 1133.5,499.9 1133.8,499.2 1134.0,500.1 1134.2,500.0 1134.5,497.4 1134.8,499.3 1135.0,499.7 1135.2,497.8 1135.5,500.6 1135.8,498.3 1136.0,500.0 1136.2,499.6 1136.5,501.3 1136.8,501.6 1137.0,500.4 1137.2,500.3 1137.5,501.1 1137.8,500.6 1138.0,500.6 1138.2,500.6 1138.5,500.5 1138.8,499.9 1139.0,499.9 1139.2,500.4 1139.5,501.4 1139.8,501.0 1140.0,500.8 1140.2,500.2 1140.5,498.6 1140.8,499.3 1141.0,499.5 1141.2,500.9 1141.5,500.6 1141.8,501.9 1142.0,497.2 1142.2,499.6 1142.5,499.3 1142.8,499.3 1143.0,498.4 1143.2,499.3 1143.5,499.0 1143.8,499.8 1144.0,498.6 1144.2,498.5 1144.5,498.9 1144.8,498.7 1145.0,498.2 1145.2,497.2 1145.5,497.5 1145.8,497.7 1146.0,497.5 1146.2,498.1 1146.5,497.1 1146.8,497.0 1147.0,496.2 1147.2,495.1 1147.5,496.7 1147.8,496.6 1148.0,495.0 1148.2,497.4 1148.5,495.4 1148.8,496.8 1149.0,494.8 1149.2,494.4 1149.5,494.3 1149.8,494.8 1150.0,493.9 1150.2,493.9 1150.5,495.5 1150.8,498.0 1151.0,493.8 1151.2,494.8 1151.5,495.7 1151.8,494.7 1152.0,493.3 1152.2,496.1 1152.5,493.4 1152.8,493.6 1153.0,494.4 1153.2,492.3 1153.5,492.2 1153.8,493.5 1154.0,495.0 1154.2,496.2 1154.5,493.1 1154.8,494.7 1155.0,495.6 1155.2,500.1 1155.5,494.9 1155.8,494.3 1156.0,495.3 1156.2,492.8 1156.5,492.7 1156.8,494.8 1157.0,496.6 1157.2,496.5 1157.5,496.2 1157.8,495.3 1158.0,496.1 1158.2,502.1 1158.5,495.4 1158.8,496.5 1159.0,495.4 1159.2,496.7 1159.5,495.4 1159.8,496.3 1160.0,495.6 1160.2,497.4 1160.5,498.3 1160.8,494.4 1161.0,495.9 1161.2,494.8 1161.5,495.0 1161.8,495.9 1162.0,494.9 1162.2,496.4 1162.5,493.9 1162.8,494.4 1163.0,494.3 1163.2,494.0 1163.5,492.5 1163.8,492.0 1164.0,494.8 1164.2,494.0 1164.5,493.0 1164.8,492.0 1165.0,492.2 1165.2,494.7 1165.5,494.2 1165.8,490.8 1166.0,490.6 1166.2,492.3 1166.5,492.7 1166.8,491.2 1167.0,491.5 1167.2,490.7 1167.5,492.7 1167.8,490.6 1168.0,489.1 1168.2,491.4 1168.5,491.3 1168.8,490.4 1169.0,491.3 1169.2,491.8 1169.5,490.7 1169.8,491.2 1170.0,492.4 1170.2,492.4 1170.5,491.6 1170.8,490.8 1171.0,488.2 1171.2,491.4 1171.5,490.4 1171.8,490.6 1172.0,491.9 1172.2,491.9 1172.5,491.0 1172.8,491.5 1173.0,490.1 1173.2,491.7 1173.5,492.9 1173.8,493.5 1174.0,493.2 1174.2,488.4 1174.5,490.7 1174.8,495.5 1175.0,497.0 1175.2,492.7 1175.5,492.9 1175.8,491.8 1176.0,492.5 1176.2,492.8 1176.5,493.4 1176.8,492.8 1177.0,492.7 1177.2,490.8 1177.5,492.8 1177.8,494.5 1178.0,487.7 1178.2,489.3 1178.5,492.9 1178.8,494.1 1179.0,488.8 1179.2,489.5 1179.5,492.0 1179.8,492.1 1180.0,493.7 1180.2,489.6 1180.5,489.9 1180.8,490.0 1181.0,491.6 1181.2,490.6 1181.5,491.0 1181.8,489.2 1182.0,490.3 1182.2,488.8 1182.5,488.7 1182.8,488.1 1183.0,487.8 1183.2,487.2 1183.5,490.4 1183.8,488.1 1184.0,491.6 1184.2,486.1 1184.5,490.2 1184.8,490.4 1185.0,493.0 1185.2,491.8 1185.5,490.0 1185.8,492.0 1186.0,499.0 1186.2,490.4 1186.5,490.8 1186.8,490.4 1187.0,486.8 1187.2,491.1 1187.5,487.5 1187.8,490.6 1188.0,490.4 1188.2,482.7 1188.5,491.1 1188.8,493.1 1189.0,492.1 1189.2,490.6 1189.5,491.9 1189.8,495.0 1190.0,491.2 1190.2,490.6 1190.5,490.9 1190.8,489.0 1191.0,491.0 1191.2,490.2 1191.5,490.9 1191.8,490.3 1192.0,482.9 1192.2,488.1 1192.5,489.6 1192.8,490.2 1193.0,489.2 1193.2,490.1 1193.5,489.2 1193.8,488.7 1194.0,491.2 1194.2,486.2 1194.5,486.9 1194.8,487.5 1195.0,492.3 1195.2,484.1 1195.5,481.0 1195.8,489.0 1196.0,487.3 1196.2,490.2 1196.5,489.2 1196.8,488.9 1197.0,486.4 1197.2,490.6 1197.5,488.1 1197.8,490.1 1198.0,488.3 1198.2,488.7 1198.5,489.6 1198.8,489.4 1199.0,488.5 1199.2,489.1 1199.5,486.0 1199.8,490.6 1200.0,490.9 1200.2,489.7 1200.5,494.5 1200.8,493.3 1201.0,489.1 1201.2,494.7 1201.5,487.8 1201.8,490.5 1202.0,490.3 1202.2,489.6 1202.5,488.7 1202.8,491.5 1203.0,487.4 1203.2,489.7 1203.5,490.0 1203.8,488.2 1204.0,491.3 1204.2,487.5 1204.5,487.3 1204.8,487.0 1205.0,484.2 1205.2,487.9 1205.5,487.3 1205.8,488.7 1206.0,487.9 1206.2,488.5 1206.5,484.3 1206.8,487.6 1207.0,488.7 1207.2,485.5 1207.5,492.0 1207.8,490.3 1208.0,488.5 1208.2,489.4 1208.5,488.8 1208.8,489.5 1209.0,492.1 1209.2,487.6 1209.5,488.9 1209.8,488.9 1210.0,487.5 1210.2,490.7 1210.5,488.7 1210.8,491.2 1211.0,492.3 1211.2,489.3 1211.5,492.8 1211.8,490.2 1212.0,488.9 1212.2,489.4 1212.5,493.7 1212.8,491.7 1213.0,489.0 1213.2,485.9 1213.5,489.7 1213.8,485.2 1214.0,486.9 1214.2,488.5 1214.5,488.4 1214.8,489.2 1215.0,484.7 1215.2,489.5 1215.5,487.0 1215.8,488.5 1216.0,487.1 1216.2,487.7 1216.5,488.3 1216.8,483.6 1217.0,488.5 1217.2,487.9 1217.5,487.4 1217.8,489.5 1218.0,489.2 1218.2,492.1 1218.5,488.5 1218.8,490.3 1219.0,501.7 1219.2,490.9 1219.5,487.7 1219.8,485.5 1220.0,491.2 1220.2,489.5 1220.5,490.9 1220.8,487.2 1221.0,493.2 1221.2,488.8 1221.5,489.6 1221.8,485.9 1222.0,494.2 1222.2,487.6 1222.5,489.8 1222.8,488.0 1223.0,489.0 1223.2,490.9 1223.5,485.0 1223.8,486.8 1224.0,493.4 1224.2,490.0 1224.5,490.4 1224.8,487.7 1225.0,487.9 1225.2,488.8 1225.5,488.1 1225.8,488.4 1226.0,493.2 1226.2,491.3 1226.5,491.2 1226.8,486.7 1227.0,488.8 1227.2,487.9 1227.5,486.3 1227.8,490.5 1228.0,490.3 1228.2,497.6 1228.5,488.7 1228.8,477.3 1229.0,489.9 1229.2,490.1 1229.5,491.0 1229.8,490.1 1230.0,496.4 1230.2,491.0 1230.5,486.2 1230.8,489.6 1231.0,490.8 1231.2,487.4 1231.5,483.4 1231.8,488.1 1232.0,488.8 1232.2,486.8 1232.5,489.8 1232.8,487.8 1233.0,486.5 1233.2,487.7 1233.5,487.5 1233.8,488.7 1234.0,486.1 1234.2,486.5 1234.5,485.3 1234.8,490.4 1235.0,488.2 1235.2,491.4 1235.5,487.0 1235.8,490.0 1236.0,489.6 1236.2,493.1 1236.5,497.7 1236.8,485.2 1237.0,491.8 1237.2,493.5 1237.5,491.3 1237.8,486.2 1238.0,485.4 1238.2,493.0 1238.5,487.0 1238.8,486.0 1239.0,488.3 1239.2,489.6 1239.5,487.9 1239.8,489.8 1240.0,486.8 1240.2,493.1 1240.5,491.5 1240.8,487.8 1241.0,488.7 1241.2,492.8 1241.5,492.4 1241.8,490.0 1242.0,482.1 1242.2,490.5 1242.5,491.0 1242.8,490.8 1243.0,488.8 1243.2,486.4 1243.5,491.1 1243.8,487.9 1244.0,489.8 1244.2,491.6 1244.5,492.6 1244.8,487.9 1245.0,489.4 1245.2,491.3 1245.5,487.1 1245.8,490.3 1246.0,487.5 1246.2,492.5 1246.5,487.8 1246.8,485.0 1247.0,479.9 1247.2,489.8 1247.5,488.6 1247.8,493.4 1248.0,490.0 1248.2,489.6 1248.5,491.4 1248.8,491.7 1249.0,494.2 1249.2,499.5 1249.5,490.3 1249.8,485.3 1250.0,489.1 1250.2,492.4 1250.5,494.5 1250.8,490.2 1251.0,487.8 1251.2,489.4 1251.5,493.1 1251.8,493.0 1252.0,490.9 1252.2,491.4 1252.5,491.4 1252.8,494.2 1253.0,488.4 1253.2,484.4 1253.5,491.2 1253.8,486.3 1254.0,491.3 1254.2,490.0 1254.5,492.8 1254.8,497.5 1255.0,491.3 1255.2,492.0 1255.5,487.6 1255.8,491.0 1256.0,489.2 1256.2,486.0 1256.5,489.5 1256.8,491.6 1257.0,488.6 1257.2,486.6 1257.5,494.2 1257.8,485.5 1258.0,486.6 1258.2,492.6 1258.5,490.5 1258.8,491.2 1259.0,488.1 1259.2,491.3 1259.5,485.7 1259.8,490.1 1260.0,493.1 1260.2,489.4 1260.5,492.0 1260.8,493.6 1261.0,492.1 1261.2,491.6 1261.5,495.7 1261.8,492.7 1262.0,490.0 1262.2,491.4 1262.5,493.8 1262.8,491.4 1263.0,490.3 1263.2,488.4 1263.5,487.6 1263.8,486.3 1264.0,481.9 1264.2,483.0 1264.5,489.7 1264.8,492.8 1265.0,490.9 1265.2,498.3 1265.5,488.3 1265.8,494.8 1266.0,494.4 1266.2,493.9 1266.5,491.7 1266.8,495.5 1267.0,488.4 1267.2,488.6 1267.5,491.6 1267.8,492.2 1268.0,492.7 1268.2,489.8 1268.5,492.6 1268.8,496.2 1269.0,487.3 1269.2,490.6 1269.5,489.1 1269.8,490.5 1270.0,492.7 1270.2,496.9 1270.5,490.0 1270.8,490.6 1271.0,490.0 1271.2,495.6 1271.5,493.2 1271.8,493.2 1272.0,497.0 1272.2,495.2 1272.5,496.5 1272.8,488.9 1273.0,491.3 1273.2,490.2 1273.5,484.0 1273.8,493.0 1274.0,501.2 1274.2,494.5 1274.5,490.1 1274.8,490.5 1275.0,490.4 1275.2,493.3 1275.5,490.9 1275.8,495.7 1276.0,492.5 1276.2,492.0 1276.5,500.4 1276.8,488.1 1277.0,484.7 1277.2,490.4 1277.5,483.6 1277.8,487.0 1278.0,494.1 1278.2,498.3 1278.5,497.5 1278.8,485.8 1279.0,483.5 1279.2,495.3 1279.5,492.9 1279.8,494.9 1280.0,491.2 1280.1,490.4 1280.2,482.5 1280.4,494.1 1280.5,495.1 1280.6,486.8 1280.7,494.8 1280.8,490.5 1281.0,492.3 1281.1,495.2 1281.2,495.1 1281.3,485.8 1281.4,492.7 1281.6,500.7 1281.7,487.6 1281.8,489.8 1281.9,494.2 1282.0,491.4 1282.2,491.8 1282.3,493.5 1282.4,499.3 1282.5,490.0 1282.6,490.7 1282.8,495.4 1282.9,489.6 1283.0,496.1 1283.1,487.1 1283.2,497.5 1283.4,493.7 1283.5,498.9 1283.6,492.1 1283.7,483.6 1283.8,487.1 1284.0,493.1 1284.1,493.3 1284.2,493.2 1284.3,491.9 1284.4,494.3 1284.6,495.6 1284.7,493.0 1284.8,495.0 1284.9,492.2 1285.0,496.3 1285.2,490.2 1285.3,492.2 1285.4,492.8 1285.5,491.3 1285.6,496.6 1285.8,501.7 1285.9,491.0 1286.0,495.1 1286.1,493.5 1286.2,488.8 1286.4,496.1 1286.5,490.3 1286.6,496.8 1286.7,489.7 1286.8,489.2 1287.0,497.8 1287.1,494.5 1287.2,498.3 1287.3,490.2 1287.4,494.0 1287.6,488.8 1287.7,492.9 1287.8,490.7 1287.9,496.4 1288.0,489.7 1288.2,499.2 1288.3,491.7 1288.4,491.0 1288.5,490.5 1288.6,493.4 1288.8,489.8 1288.9,498.5 1289.0,491.6 1289.1,488.6 1289.2,494.6 1289.4,494.7 1289.5,503.9 1289.6,481.0 1289.7,491.7 1289.8,491.4 1290.0,495.3 1290.1,491.9 1290.2,491.2 1290.3,497.7 1290.4,494.2 1290.6,495.7 1290.7,497.5 1290.8,501.5 1290.9,494.9 1291.0,496.8 1291.2,491.0 1291.3,509.9 1291.4,489.3 1291.5,491.2 1291.6,489.1 1291.8,494.9 1291.9,486.4 1292.0,492.9 1292.1,498.5 1292.2,491.2 1292.4,497.2 1292.5,492.5 1292.6,495.7 1292.7,481.1 1292.8,498.2 1293.0,492.1 1293.1,491.2 1293.2,495.8 1293.3,488.4 1293.4,494.4 1293.6,495.6 1293.7,499.4 1293.8,499.6 1293.9,507.5 1294.0,498.8 1294.2,488.6 1294.3,489.6 1294.4,497.6 1294.5,494.7 1294.6,490.2 1294.8,496.7 1294.9,492.2 1295.0,492.9 1295.1,497.7 1295.2,495.2 1295.4,481.7 1295.5,493.0 1295.6,499.4 1295.7,496.7 1295.8,490.6 1296.0,491.9 1296.1,491.4 1296.2,491.4 1296.3,512.2 1296.4,500.0 1296.6,502.8 1296.7,493.1 1296.8,501.1 1296.9,496.6 1297.0,490.7 1297.2,489.5 1297.3,493.1 1297.4,493.5 1297.5,494.1 1297.6,500.5 1297.8,495.3 1297.9,496.4 1298.0,493.2 1298.1,487.8 1298.2,498.5 1298.4,490.3 1298.5,520.7 1298.6,479.6 1298.7,495.4 1298.8,490.5 1299.0,494.0 1299.1,502.8 1299.2,501.9 1299.3,493.9 1299.4,495.2 1299.6,496.1 1299.7,485.1 1299.8,489.6 1299.9,492.0 1300.0,484.3 1300.2,498.8 1300.3,477.9 1300.4,494.3 1300.5,501.2 1300.6,497.1 1300.8,504.8 1300.9,489.9 1301.0,489.4 1301.1,493.2 1301.2,492.5 1301.4,496.9 1301.5,494.8 1301.6,491.1 1301.7,492.1 1301.8,494.7 1302.0,490.2 1302.1,496.5 1302.2,489.2 1302.3,500.8 1302.4,508.5 1302.6,493.8 1302.7,512.1 1302.8,481.1 1302.9,495.5 1303.0,498.8 1303.2,499.8 1303.3,502.5 1303.4,499.9 1303.5,482.5 1303.6,481.7 1303.8,497.5 1303.9,496.4 1304.0,501.0 1304.1,500.9 1304.2,488.1 1304.4,495.2 1304.5,485.8 1304.6,510.6 1304.7,502.7 1304.8,491.0 1305.0,505.6 1305.1,491.2 1305.2,495.2 1305.3,493.6 1305.4,500.1 1305.6,505.8 1305.7,488.6 1305.8,495.0 1305.9,493.6 1306.0,498.3 1306.2,484.2 1306.3,500.0 1306.4,498.1 1306.5,490.8 1306.6,483.0 1306.8,501.1 1306.9,492.8 1307.0,496.9 1307.1,497.5 1307.2,499.2 1307.4,497.7 1307.5,489.7 1307.6,488.8 1307.7,511.9 1307.8,499.5 1308.0,513.5 1308.1,488.2 1308.2,491.3 1308.3,498.6 1308.4,513.3 1308.6,479.8 1308.7,510.5 1308.8,492.7 1308.9,505.7 1309.0,490.9 1309.2,494.8 1309.3,497.1 1309.4,482.4 1309.5,490.4 1309.6,493.7 1309.8,497.3 1309.9,500.7 1310.0,509.6 1310.1,498.8 1310.2,488.9 1310.4,490.3 1310.5,500.7 1310.6,504.3 1310.7,496.4 1310.8,491.7 1311.0,500.4 1311.1,493.3 1311.2,516.4 1311.3,496.2 1311.4,496.9 1311.6,477.0 1311.7,488.4 1311.8,479.5 1311.9,505.8 1312.0,499.4 1312.2,490.1 1312.3,483.7 1312.4,482.4 1312.5,486.2 1312.6,490.9 1312.8,501.9 1312.9,496.8 1313.0,495.8 1313.1,503.3 1313.2,503.5 1313.4,505.3 1313.5,487.5 1313.6,493.2 1313.7,485.4 1313.8,494.0 1314.0,493.8 1314.1,497.9 1314.2,492.2 1314.3,492.9 1314.4,498.4 1314.6,508.8 1314.7,504.8 1314.8,494.3 1314.9,491.0 1315.0,510.5 1315.2,482.1 1315.3,502.0 1315.4,507.3 1315.5,503.1 1315.6,502.7 1315.8,501.1 1315.9,509.5 1316.0,500.0 1316.1,477.0 1316.2,477.0 1316.4,496.8 1316.5,496.0 1316.6,517.3 1316.7,499.0 1316.8,502.2 1317.0,489.5 1317.1,493.3 1317.2,497.5 1317.3,502.2 1317.4,491.9 1317.6,516.7 1317.7,500.1 1317.8,508.2 1317.9,510.0 1318.0,493.5 1318.2,501.2 1318.3,493.7 1318.4,495.4 1318.5,488.5 1318.6,497.2 1318.8,498.1 1318.9,507.1 1319.0,492.8 1319.1,498.9 1319.2,493.7 1319.4,481.2 1319.5,499.4 1319.6,486.6 1319.7,490.9 1319.8,477.0 1320.0,499.8 1320.1,477.0 1320.2,513.7 1320.3,507.4 1320.4,497.9 1320.6,501.6 1320.7,506.8 1320.8,482.6 1320.9,494.2 1321.0,488.9 1321.2,519.5 1321.3,492.4 1321.4,509.4 1321.5,489.1 1321.6,484.2 1321.8,500.9 1321.9,503.0 1322.0,497.8 1322.1,499.3 1322.2,493.0 1322.4,493.0 1322.5,534.4 1322.6,518.0 1322.7,503.0 1322.8,509.8 1323.0,541.0 1323.1,501.2 1323.2,504.3 1323.3,502.9 1323.4,492.2 1323.6,500.5 1323.7,512.9 1323.8,492.0 1323.9,498.3 1324.0,495.2 1324.2,499.6 1324.3,516.0 1324.4,503.4 1324.5,490.9 1324.6,500.2 1324.8,521.3 1324.9,525.7 1325.0,504.3 1325.1,522.5 1325.2,503.8 1325.4,507.1 1325.5,477.0 1325.6,501.2 1325.7,491.0 1325.8,513.4 1326.0,502.4 1326.1,477.0 1326.2,530.6 1326.3,492.0 1326.4,513.8 1326.6,477.0 1326.7,483.7 1326.8,505.2 1326.9,491.7 1327.0,501.2 1327.2,502.0 1327.3,518.8 1327.4,508.6 1327.5,490.1 1327.6,494.6 1327.8,495.6 1327.9,490.1 1328.0,506.6 1328.1,503.2 1328.2,502.0 1328.4,517.9 1328.5,505.3 1328.6,514.0 1328.7,520.6 1328.8,508.8 1329.0,499.7 1329.1,505.3 1329.2,509.8 1329.3,506.8 1329.4,506.8 1329.6,502.5 1329.7,510.5 1329.8,490.5 1329.9,493.0 1330.0,503.4 1330.2,499.2 1330.3,515.0 1330.4,494.0 1330.5,487.9 1330.6,500.0 1330.8,519.8 1330.9,512.5 1331.0,494.3 1331.1,513.1 1331.2,495.1 1331.4,514.1 1331.5,510.2 1331.6,493.9 1331.7,530.5 1331.8,510.5 1332.0,520.1 1332.1,485.6 1332.2,512.5 1332.3,496.0 1332.4,495.7 1332.6,499.1 1332.7,483.1 1332.8,505.6 1332.9,498.2 1333.0,514.8 1333.2,503.3 1333.3,493.7 1333.4,492.1 1333.5,491.2 1333.6,487.6 1333.8,490.0 1333.9,539.3 1334.0,541.0 1334.1,530.4 1334.2,517.5 1334.4,510.1 1334.5,484.8 1334.6,507.4 1334.7,502.8 1334.8,520.9 1335.0,493.9 1335.1,477.0 1335.2,498.6 1335.3,516.8 1335.4,504.6 1335.6,497.9 1335.7,494.9 1335.8,534.6 1335.9,500.7 1336.0,486.3 1336.2,498.1 1336.3,501.4 1336.4,510.6 1336.5,514.3 1336.6,486.5 1336.8,487.8 1336.9,492.8 1337.0,520.6 1337.1,498.4 1337.2,508.9 1337.4,500.9 1337.5,491.8 1337.6,508.0 1337.7,530.5 1337.8,513.3 1338.0,493.6 1338.1,491.0 1338.2,490.0 1338.3,507.2 1338.4,494.0 1338.6,501.6 1338.7,485.7 1338.8,536.2 1338.9,489.9 1339.0,508.7 1339.2,501.4 1339.3,534.7 1339.4,500.4 1339.5,517.0 1339.6,490.8 1339.8,500.7 1339.9,489.1 1340.0,531.2 1340.1,506.3 1340.2,507.9 1340.4,500.8 1340.5,517.4 1340.6,494.9 1340.7,501.4 1340.8,499.1 1341.0,516.5 1341.1,505.9 1341.2,517.1 1341.3,511.1 1341.4,515.5 1341.6,495.0 1341.7,514.1 1341.8,487.9 1341.9,496.8 1342.0,528.3 1342.2,495.5 1342.3,513.6 1342.4,512.0 1342.5,513.9 1342.6,510.3 1342.8,501.0 1342.9,483.2 1343.0,492.6 1343.1,496.5 1343.2,493.6 1343.4,503.4 1343.5,498.1 1343.6,504.4 1343.7,505.4 1343.8,508.5 1344.0,479.5 1344.1,541.0 1344.2,492.8 1344.3,499.2 1344.4,505.8 1344.6,502.2 1344.7,487.5 1344.8,496.3 1344.9,507.8 1345.0,499.2 1345.2,524.8 1345.3,506.0 1345.4,501.8 1345.5,490.6 1345.6,515.3 1345.8,502.2 1345.9,477.0 1346.0,515.5 1346.1,501.2 1346.2,508.4 1346.4,508.9 1346.5,488.8 1346.6,494.8 1346.7,509.1 1346.8,497.3 1347.0,500.9 1347.1,499.9 1347.2,477.0 1347.3,496.8 1347.4,529.7 1347.6,523.7 1347.7,487.1 1347.8,500.6 1347.9,494.4 1348.0,506.7 1348.2,505.8 1348.3,492.6 1348.4,507.5 1348.5,497.1 1348.6,491.1 1348.8,477.0 1348.9,486.4 1349.0,539.3 1349.1,507.6 1349.2,492.8 1349.4,479.6 1349.5,491.0 1349.6,506.6 1349.7,496.8 1349.8,537.4 1350.0,495.4 1350.1,485.9 1350.2,506.9" fill="none" stroke="#261668" stroke-width="1.0"/><path d="M946.25,419.70V599.20" stroke="#8c8c8c" stroke-width="1.4"/><path d="M946.25,599.20H1350.30" stroke="#8c8c8c" stroke-width="1.4"/></svg>
<div class="t" style="left:912.78px;top:429.78px;font-size:9.60px;color:#5a5a5a;">-40.00</div>
<div class="t" style="left:912.78px;top:475.58px;font-size:9.60px;color:#5a5a5a;">-60.00</div>
<div class="t" style="left:912.78px;top:521.38px;font-size:9.60px;color:#5a5a5a;">-80.00</div>
<div class="t" style="left:907.44px;top:567.18px;font-size:9.60px;color:#5a5a5a;">-100.00</div>
<div class="t" style="left:1035.02px;top:603.78px;font-size:9.60px;color:#5a5a5a;">100.00</div>
<div class="t" style="left:1182.46px;top:603.78px;font-size:9.60px;color:#5a5a5a;">1.00k</div>
<div class="t" style="left:1321.68px;top:603.78px;font-size:9.60px;color:#5a5a5a;">10.00k</div>
<div class="t" style="left:1107.50px;top:618.07px;font-size:11.00px;color:#444;letter-spacing:-0.21px;">Frequency(Hz)</div>
<div class="t" style="left:862.83px;top:509.73px;font-size:10.49px;color:#555;transform:rotate(-90deg);transform-origin:center;">THD Ratio(dB)</div>
<div class="t" style="left:588.30px;top:641.10px;font-size:11.74px;color:#333;">Distortion Product Ratio</div>
<svg style="left:845.1px;top:659px;" width="8" height="8" viewBox="0 0 8 8"><circle cx="4" cy="4" r="3.9" fill="#1b005a"/></svg>
<div class="t" style="left:855.60px;top:658.07px;font-size:11.00px;color:#333;letter-spacing:-1.00px;">Ch1</div>
<svg style="left:417px;top:637px" width="468" height="251" viewBox="417 637 468 251"><path d="M477.10,685.70H881.70" stroke="#a9a9a9" stroke-width="1.2"/><path d="M477.10,705.18H881.70" stroke="#e0e0e0" stroke-width="1.1"/><path d="M477.10,724.65H881.70" stroke="#a9a9a9" stroke-width="1.2"/><path d="M477.10,744.12H881.70" stroke="#e0e0e0" stroke-width="1.1"/><path d="M477.10,763.60H881.70" stroke="#a9a9a9" stroke-width="1.2"/><path d="M477.10,783.08H881.70" stroke="#e0e0e0" stroke-width="1.1"/><path d="M477.10,802.55H881.70" stroke="#a9a9a9" stroke-width="1.2"/><path d="M477.10,822.03H881.70" stroke="#e0e0e0" stroke-width="1.1"/><path d="M477.10,841.50H881.70" stroke="#a9a9a9" stroke-width="1.2"/><path d="M479.49,672.40V851.20" stroke="#e0e0e0" stroke-width="1.1"/><path d="M504.99,672.40V851.20" stroke="#e0e0e0" stroke-width="1.1"/><path d="M523.08,672.40V851.20" stroke="#e0e0e0" stroke-width="1.1"/><path d="M537.11,672.40V851.20" stroke="#e0e0e0" stroke-width="1.1"/><path d="M548.58,672.40V851.20" stroke="#e0e0e0" stroke-width="1.1"/><path d="M558.27,672.40V851.20" stroke="#e0e0e0" stroke-width="1.1"/><path d="M566.67,672.40V851.20" stroke="#e0e0e0" stroke-width="1.1"/><path d="M574.07,672.40V851.20" stroke="#e0e0e0" stroke-width="1.1"/><path d="M580.70,672.40V851.20" stroke="#a9a9a9" stroke-width="1.2"/><path d="M624.29,672.40V851.20" stroke="#e0e0e0" stroke-width="1.1"/><path d="M649.79,672.40V851.20" stroke="#e0e0e0" stroke-width="1.1"/><path d="M667.88,672.40V851.20" stroke="#e0e0e0" stroke-width="1.1"/><path d="M681.91,672.40V851.20" stroke="#e0e0e0" stroke-width="1.1"/><path d="M693.38,672.40V851.20" stroke="#e0e0e0" stroke-width="1.1"/><path d="M703.07,672.40V851.20" stroke="#e0e0e0" stroke-width="1.1"/><path d="M711.47,672.40V851.20" stroke="#e0e0e0" stroke-width="1.1"/><path d="M718.87,672.40V851.20" stroke="#e0e0e0" stroke-width="1.1"/><path d="M725.50,672.40V851.20" stroke="#a9a9a9" stroke-width="1.2"/><path d="M769.09,672.40V851.20" stroke="#e0e0e0" stroke-width="1.1"/><path d="M794.59,672.40V851.20" stroke="#e0e0e0" stroke-width="1.1"/><path d="M812.68,672.40V851.20" stroke="#e0e0e0" stroke-width="1.1"/><path d="M826.71,672.40V851.20" stroke="#e0e0e0" stroke-width="1.1"/><path d="M838.18,672.40V851.20" stroke="#e0e0e0" stroke-width="1.1"/><path d="M847.87,672.40V851.20" stroke="#e0e0e0" stroke-width="1.1"/><path d="M856.27,672.40V851.20" stroke="#e0e0e0" stroke-width="1.1"/><path d="M863.67,672.40V851.20" stroke="#e0e0e0" stroke-width="1.1"/><path d="M870.30,672.40V851.20" stroke="#a9a9a9" stroke-width="1.2"/><path d="M477.0,776.3 477.4,776.2 477.8,776.1 478.2,776.0 478.6,775.9 479.0,775.8 479.4,775.7 479.8,775.7 480.2,775.6 480.6,775.5 481.0,775.4 481.4,775.3 481.8,775.2 482.2,775.1 482.6,775.1 483.0,775.0 483.4,774.9 483.8,774.8 484.2,774.7 484.6,774.6 485.0,774.6 485.4,774.5 485.8,774.4 486.2,774.3 486.6,774.3 487.0,774.2 487.4,774.1 487.8,774.0 488.2,774.0 488.6,773.9 489.0,773.8 489.4,773.8 489.8,773.7 490.2,773.6 490.6,773.6 491.0,773.5 491.4,773.4 491.8,773.4 492.2,773.3 492.6,773.2 493.0,773.2 493.4,773.1 493.8,773.1 494.2,773.0 494.6,773.0 495.0,772.9 495.4,772.8 495.8,772.8 496.2,772.7 496.6,772.7 497.0,772.6 497.4,772.6 497.8,772.5 498.2,772.4 498.6,772.4 499.0,772.3 499.4,772.3 499.8,772.2 500.2,772.2 500.6,772.1 501.0,772.0 501.4,772.0 501.8,771.9 502.2,771.9 502.6,771.8 503.0,771.8 503.4,771.7 503.8,771.7 504.2,771.7 504.6,771.6 505.0,771.6 505.4,771.6 505.8,771.5 506.2,771.5 506.6,771.5 507.0,771.4 507.4,771.4 507.8,771.4 508.2,771.4 508.6,771.4 509.0,771.4 509.4,771.5 509.8,771.7 510.2,772.0 510.6,772.4 511.0,772.9 511.4,773.5 511.8,774.2 512.2,775.0 512.6,775.8 513.0,776.7 513.4,777.6 513.8,778.5 514.2,779.5 514.6,780.5 515.0,781.5 515.4,782.5 515.8,783.4 516.2,784.4 516.6,785.3 517.0,786.2 517.4,787.0 517.8,787.8 518.2,788.5 518.6,789.1 519.0,789.7 519.4,790.1 519.8,790.5 520.2,790.7 520.6,790.8 521.0,790.8 521.4,790.7 521.8,790.6 522.2,790.4 522.6,790.1 523.0,789.8 523.4,789.5 523.8,789.1 524.2,788.6 524.6,788.2 525.0,787.7 525.4,787.1 525.8,786.5 526.2,785.9 526.6,785.3 527.0,784.6 527.4,783.9 527.8,783.2 528.2,782.5 528.6,781.8 529.0,781.1 529.4,780.3 529.8,779.6 530.2,778.8 530.6,778.1 531.0,777.3 531.4,776.6 531.8,775.9 532.2,775.2 532.6,774.5 533.0,773.8 533.4,773.1 533.8,772.5 534.2,771.9 534.6,771.3 535.0,770.7 535.4,770.2 535.8,769.8 536.2,769.3 536.6,768.9 537.0,768.6 537.4,768.3 537.8,768.0 538.2,767.8 538.6,767.7 539.0,767.6 539.4,767.6 539.8,767.6 540.2,767.6 540.6,767.7 541.0,767.7 541.4,767.8 541.8,767.9 542.2,768.0 542.6,768.1 543.0,768.2 543.4,768.3 543.8,768.4 544.2,768.6 544.6,768.7 545.0,768.8 545.4,769.0 545.8,769.1 546.2,769.3 546.6,769.5 547.0,769.8 547.4,770.1 547.8,770.4 548.2,770.8 548.6,771.2 549.0,771.6 549.4,772.1 549.8,772.5 550.2,772.9 550.6,773.2 551.0,773.6 551.4,773.9 551.8,774.1 552.2,774.3 552.6,774.4 553.0,774.4 553.4,774.4 553.8,774.4 554.2,774.3 554.6,774.2 555.0,774.1 555.4,774.1 555.8,773.9 556.2,773.8 556.6,773.7 557.0,773.6 557.4,773.4 557.8,773.3 558.2,773.1 558.6,773.0 559.0,772.8 559.4,772.7 559.8,772.5 560.2,772.4 560.6,772.2 561.0,772.1 561.4,772.0 561.8,771.9 562.2,771.7 562.6,771.7 563.0,771.6 563.4,771.5 563.8,771.4 564.2,771.4 564.6,771.4 565.0,771.4 565.4,771.6 565.8,771.9 566.2,772.2 566.6,772.7 567.0,773.2 567.4,773.8 567.8,774.5 568.2,775.2 568.6,775.9 569.0,776.7 569.4,777.4 569.8,778.2 570.2,778.9 570.6,779.7 571.0,780.3 571.4,781.0 571.8,781.5 572.2,782.0 572.6,782.5 573.0,782.8 573.4,783.0 573.8,783.1 574.2,783.1 574.6,783.0 575.0,782.8 575.4,782.6 575.8,782.3 576.2,782.0 576.6,781.6 577.0,781.3 577.4,780.9 577.8,780.5 578.2,780.0 578.6,779.6 579.0,779.3 579.4,778.9 579.8,778.6 580.2,778.3 580.6,778.1 581.0,777.9 581.4,777.8 581.8,777.8 582.2,777.9 582.6,778.2 583.0,778.5 583.4,779.0 583.8,779.5 584.2,779.9 584.6,780.4 585.0,780.9 585.4,781.2 585.8,781.5 586.2,781.6 586.6,781.6 587.0,781.3 587.4,781.0 587.8,780.5 588.2,779.9 588.6,779.2 589.0,778.4 589.4,777.6 589.8,776.7 590.2,775.7 590.6,774.7 591.0,773.7 591.4,772.7 591.8,771.7 592.2,770.8 592.6,769.9 593.0,769.1 593.4,768.3 593.8,767.6 594.2,767.0 594.6,766.6 595.0,766.3 595.4,766.1 595.8,766.1 596.2,766.5 596.6,767.2 597.0,768.2 597.4,769.4 597.8,770.9 598.2,772.6 598.6,774.4 599.0,776.4 599.4,778.5 599.8,780.6 600.2,782.8 600.6,785.0 601.0,787.2 601.4,789.3 601.8,791.3 602.2,793.2 602.6,794.9 603.0,796.4 603.4,797.7 603.8,798.8 604.2,799.6 604.6,800.0 605.0,800.1 605.4,799.5 605.8,798.2 606.2,796.4 606.6,794.1 607.0,791.4 607.4,788.5 607.8,785.4 608.2,782.2 608.6,779.2 609.0,776.3 609.4,773.7 609.8,771.5 610.2,769.8 610.6,768.7 611.0,768.3 611.4,768.5 611.8,769.2 612.2,770.1 612.6,771.4 613.0,772.8 613.4,774.4 613.8,776.1 614.2,777.8 614.6,779.4 615.0,780.9 615.4,782.3 615.8,783.4 616.2,784.4 616.6,785.5 617.0,786.6 617.4,787.8 617.8,788.9 618.2,790.0 618.6,791.1 619.0,792.1 619.4,793.0 619.8,793.8 620.2,794.6 620.6,795.2 621.0,795.6 621.4,796.0 621.8,796.1 622.2,795.9 622.6,794.9 623.0,793.2 623.4,791.0 623.8,788.3 624.2,785.3 624.6,782.1 625.0,778.8 625.4,775.5 625.8,772.4 626.2,769.5 626.6,766.9 627.0,764.8 627.4,763.3 627.8,762.5 628.2,762.5 628.6,763.0 629.0,764.0 629.4,765.4 629.8,767.1 630.2,769.1 630.6,771.2 631.0,773.4 631.4,775.7 631.8,777.9 632.2,779.9 632.6,781.8 633.0,783.3 633.4,784.5 633.8,785.3 634.2,785.6 634.6,785.3 635.0,784.3 635.4,782.9 635.8,780.9 636.2,778.7 636.6,776.2 637.0,773.5 637.4,770.8 637.8,768.1 638.2,765.4 638.6,763.0 639.0,760.9 639.4,759.1 639.8,757.7 640.2,757.0 640.6,756.7 641.0,756.6 641.4,756.5 641.8,756.3 642.2,756.2 642.6,756.1 643.0,756.0 643.4,755.9 643.8,755.9 644.2,755.8 644.6,755.7 645.0,755.7 645.4,755.6 645.8,755.6 646.2,755.6 646.6,755.6 647.0,755.7 647.4,756.0 647.8,756.6 648.2,757.3 648.6,758.1 649.0,759.1 649.4,760.2 649.8,761.4 650.2,762.6 650.6,763.9 651.0,765.2 651.4,766.5 651.8,767.8 652.2,769.0 652.6,770.2 653.0,771.2 653.4,772.4 653.8,773.7 654.2,775.1 654.6,776.6 655.0,778.1 655.4,779.6 655.8,781.2 656.2,782.8 656.6,784.4 657.0,786.0 657.4,787.6 657.8,789.1 658.2,790.5 658.6,791.9 659.0,793.2 659.4,794.4 659.8,795.5 660.2,796.4 660.6,797.2 661.0,797.8 661.4,798.3 661.8,798.5 662.2,798.6 662.6,798.0 663.0,796.7 663.4,794.8 663.8,792.5 664.2,789.7 664.6,786.7 665.0,783.5 665.4,780.3 665.8,777.1 666.2,774.0 666.6,771.2 667.0,768.8 667.4,766.8 667.8,765.4 668.2,764.6 668.6,763.9 669.0,763.3 669.4,762.6 669.8,762.0 670.2,761.4 670.6,760.8 671.0,760.3 671.4,759.8 671.8,759.3 672.2,758.9 672.6,758.5 673.0,758.1 673.4,757.8 673.8,757.5 674.2,757.3 674.6,757.1 675.0,757.0 675.4,756.9 675.8,756.8 677.4,770.0 678.7,771.1 680.0,767.6 681.3,772.0 682.6,771.2 683.8,765.7 685.0,758.7 686.2,766.6 687.3,776.8 688.5,775.9 689.6,769.1 690.7,765.6 691.8,776.9 692.9,773.5 693.9,776.0 694.9,778.8 696.0,772.3 697.0,770.6 697.9,766.6 698.9,770.8 699.9,765.4 700.8,775.1 701.7,768.9 702.6,777.5 703.5,768.2 704.4,772.0 705.3,766.0 706.2,774.1 707.0,765.7 707.8,776.1 708.7,772.4 709.5,760.5 710.3,762.7 711.1,770.8 711.9,769.3 712.6,779.6 713.4,765.0 714.2,768.4 714.9,769.4 715.7,770.6 716.4,778.3 717.1,768.9 717.8,761.0 718.5,777.5 719.2,771.5 719.9,761.4 720.6,765.7 721.3,767.6 722.0,769.8 722.6,773.4 723.3,767.8 723.9,766.3 724.6,763.8 725.2,768.1 725.8,769.3 726.4,771.4 727.1,757.0 727.7,763.8 728.3,771.2 728.9,777.8 729.5,773.4 730.1,755.8 730.6,757.6 731.2,771.3 731.8,768.4 732.4,768.4 732.9,779.0 733.5,762.0 734.0,774.6 734.6,768.4 735.1,764.4 735.6,755.8 736.2,760.9 736.7,777.8 737.2,767.9 737.8,771.9 738.3,770.6 738.8,766.3 739.3,771.9 739.8,768.9 740.3,765.9 740.8,765.1 741.3,762.7 741.8,768.4 742.2,765.6 742.7,773.1 743.2,764.8 743.7,761.2 744.1,755.6 744.6,770.8 745.1,781.0 745.5,766.1 746.0,753.2 746.4,771.6 746.9,762.2 747.3,770.2 747.8,768.1 748.2,770.2 748.7,766.6 749.1,764.2 749.5,772.1 749.9,764.0 750.4,772.6 750.8,762.0 751.2,766.4 751.6,761.0 752.0,771.0 752.5,761.3 752.9,760.4 753.3,771.0 753.7,767.2 754.1,764.6 754.5,759.1 754.9,764.7 755.3,767.4 755.6,769.0 756.0,760.5 756.4,767.9 756.8,753.2 757.2,765.1 757.6,759.1 757.9,769.0 758.3,761.9 758.7,778.6 759.1,765.4 759.4,766.4 759.8,750.3 760.2,755.7 760.5,770.5 760.9,759.9 761.2,771.0 761.6,759.6 761.9,767.8 762.3,758.9 762.6,766.6 763.0,768.0 763.3,769.4 763.7,759.1 764.0,755.6 764.4,767.1 764.7,765.0 765.0,767.8 765.4,755.9 765.7,768.2 766.0,762.4 766.4,756.6 766.7,760.5 767.0,769.1 767.3,764.3 767.7,764.2 768.0,763.7 768.3,760.7 768.6,770.9 768.9,763.2 769.3,753.8 769.6,753.8 769.9,759.4 770.2,760.5 770.5,767.6 770.8,746.1 771.1,767.7 771.4,770.4 771.7,759.7 772.0,770.8 772.3,758.3 772.6,761.6 772.9,759.4 773.2,773.0 773.5,770.0 773.8,769.6 774.1,755.0 774.4,763.1 774.7,754.9 774.9,763.4 775.2,766.0 775.5,771.3 775.8,761.3 776.1,763.7 776.4,761.2 776.6,759.8 776.9,773.1 777.2,764.6 777.5,771.6 777.7,767.6 778.0,753.5 778.3,757.8 778.6,766.5 778.8,767.6 779.1,766.4 779.4,761.8 779.6,767.5 779.9,755.1 780.2,760.0 780.4,753.9 780.7,768.3 781.0,764.1 781.2,766.3 781.5,759.7 781.7,744.3 782.0,756.1 782.2,762.4 782.5,761.7 782.7,767.6 783.0,768.9 783.3,766.9 783.5,766.6 783.8,749.4 784.0,765.7 784.2,746.6 784.5,764.5 784.7,745.4 785.0,764.4 785.2,771.9 785.5,759.8 785.7,765.8 786.0,768.6 786.2,758.7 786.4,747.4 786.7,760.9 786.9,753.2 787.1,757.9 787.4,779.7 787.6,773.6 787.8,765.2 788.1,755.9 788.3,764.5 788.5,763.1 788.8,759.5 789.0,772.2 789.2,747.1 789.5,771.7 789.7,757.5 789.9,769.8 790.1,759.5 790.4,760.2 790.6,755.7 790.8,762.2 791.0,762.9 791.3,781.9 791.5,771.7 791.7,760.0 791.9,763.9 792.1,760.9 792.3,764.4 792.6,748.0 792.8,760.2 793.0,769.4 793.2,756.8 793.4,748.6 793.6,779.2 793.9,771.7 794.1,758.6 794.3,761.2 794.5,768.5 794.7,763.9 794.9,755.0 795.1,757.5 795.3,759.4 795.5,759.9 795.7,768.4 795.9,752.4 796.1,762.7 796.3,758.7 796.6,744.7 796.8,765.1 797.0,760.8 797.2,750.3 797.4,746.7 797.6,766.6 797.8,772.0 798.0,760.3 798.2,757.9 798.4,764.9 798.6,754.7 798.7,755.7 798.9,766.5 799.1,751.0 799.3,767.9 799.5,761.6 799.7,769.0 799.9,745.6 800.1,780.6 800.3,758.6 800.5,764.0 800.7,753.2 800.9,751.6 801.1,767.7 801.2,762.7 801.4,763.2 801.6,764.2 801.8,763.6 802.0,747.3 802.2,756.8 802.4,756.5 802.6,774.0 802.7,769.0 802.9,752.4 803.1,747.8 803.3,764.3 803.5,763.2 803.7,769.2 803.8,750.2 804.0,771.4 804.2,760.3 804.4,768.5 804.6,760.9 804.7,755.7 804.9,752.8 805.1,769.1 805.3,734.4 805.4,766.9 805.6,763.9 805.8,753.4 806.0,764.5 806.1,757.6 806.3,748.8 806.5,756.3 806.7,762.9 806.8,758.8 807.0,752.6 807.2,763.6 807.4,764.0 807.5,767.6 807.7,759.9 807.9,769.7 808.0,752.7 808.2,754.8 808.4,747.2 808.5,757.5 808.7,758.4 808.9,757.7 809.0,762.0 809.2,765.7 809.4,744.8 809.5,750.5 809.7,735.0 809.9,765.7 810.0,763.8 810.2,756.1 810.4,760.1 810.5,748.0 810.7,749.2 810.8,750.0 811.0,759.9 811.2,754.4 811.3,758.8 811.5,749.1 811.7,746.9 811.8,760.6 812.0,759.6 812.1,760.7 812.3,764.0 812.4,759.4 812.6,745.1 812.8,748.7 812.9,759.7 813.1,749.8 813.2,747.6 813.4,749.8 813.5,770.1 813.7,761.8 813.8,759.5 814.0,755.8 814.2,776.1 814.3,756.3 814.5,765.4 814.6,764.5 814.8,760.5 814.9,757.2 815.1,745.2 815.2,761.6 815.4,774.3 815.5,761.4 815.7,773.2 815.8,762.8 816.0,764.4 816.1,753.4 816.3,756.1 816.4,778.7 816.6,766.0 816.7,749.0 816.9,745.7 817.0,756.1 817.2,756.1 817.3,760.7 817.4,770.5 817.6,752.5 817.7,771.8 817.9,761.4 818.0,757.1 818.2,743.5 818.3,768.7 818.5,770.9 818.6,767.1 818.7,760.8 818.9,753.4 819.0,741.4 819.2,750.3 819.3,745.1 819.5,745.6 819.6,749.8 819.7,751.9 819.9,760.5 820.0,766.8 820.2,754.7 820.3,762.7 820.4,753.5 820.6,753.8 820.7,759.0 820.9,751.2 821.0,758.1 821.1,752.2 821.3,749.2 821.4,764.5 821.5,768.2 821.7,758.0 821.8,752.3 821.9,757.3 822.1,749.8 822.2,752.1 822.4,753.0 822.5,742.4 822.6,754.4 822.8,759.2 822.9,757.9 823.0,754.5 823.2,764.1 823.3,749.1 823.4,764.5 823.6,763.4 823.7,757.2 823.8,767.7 823.9,749.3 824.1,757.5 824.2,754.4 824.3,758.4 824.5,752.9 824.6,758.7 824.7,758.7 824.9,760.5 825.0,750.1 825.1,754.6 825.2,754.5 825.4,750.1 825.5,755.2 825.6,738.3 825.8,746.0 825.9,751.3 826.0,752.2 826.1,760.4 826.3,750.8 826.4,768.6 826.5,743.5 826.6,769.8 826.8,747.5 826.9,746.0 827.0,749.1 827.2,750.1 827.3,752.7 827.4,751.3 827.5,758.6 827.6,761.2 827.8,746.5 827.9,764.8 828.0,756.9 828.1,754.9 828.3,761.6 828.4,754.1 828.5,766.4 828.6,745.1 828.8,764.5 828.9,751.0 829.0,760.6 829.1,751.2 829.2,768.1 829.4,757.8 829.5,760.7 829.6,746.2 829.7,742.8 829.8,756.6 830.0,766.8 830.1,756.0 830.2,742.9 830.3,768.3 830.4,750.5 830.6,760.7 830.7,748.0 830.8,748.9 830.9,756.9 831.0,733.3 831.1,746.5 831.3,751.1 831.4,751.1 831.5,741.3 831.6,763.2 831.7,752.5 831.8,752.8 832.0,738.9 832.1,753.4 832.2,759.2 832.3,760.8 832.4,758.8 832.5,768.0 832.6,752.0 832.8,755.2 832.9,759.1 833.0,751.9 833.1,752.0 833.2,756.8 833.3,751.6 833.4,755.7 833.6,754.7 833.7,746.2 833.8,765.7 833.9,759.0 834.0,746.2 834.1,745.8 834.2,749.6 834.3,748.6 834.5,745.5 834.6,755.2 834.7,750.7 834.8,745.7 834.9,765.6 835.0,750.5 835.1,755.8 835.2,742.4 835.3,744.3 835.4,745.0 835.6,760.6 835.7,758.9 835.8,751.2 835.9,750.6 836.0,755.7 836.1,746.0 836.2,751.0 836.3,760.6 836.4,745.7 836.5,758.1 836.6,752.1 836.7,754.4 836.9,751.7 837.0,759.7 837.1,759.8 837.2,757.2 837.3,739.6 837.4,753.8 837.5,762.3 837.6,744.6 837.7,740.3 837.8,750.9 837.9,759.2 838.0,742.4 838.1,755.4 838.2,750.3 838.3,752.3 838.4,755.9 838.5,751.1 838.6,748.0 838.8,753.9 838.9,765.1 839.0,757.4 839.1,758.2 839.2,745.0 839.3,748.3 839.4,741.8 839.5,760.0 839.6,760.7 839.7,756.0 839.8,758.9 839.9,749.1 840.0,749.5 840.1,762.3 840.2,749.3 840.3,760.8 840.4,766.0 840.5,743.1 840.6,745.3 840.7,766.3 840.8,760.6 840.9,765.2 841.0,766.3 841.1,750.1 841.2,769.0 841.3,763.9 841.4,761.0 841.5,755.2 841.6,749.7 841.7,746.3 841.8,740.8 841.9,745.6 842.0,746.2 842.1,754.1 842.2,746.8 842.3,738.0 842.4,753.9 842.5,735.6 842.6,749.6 842.7,758.0 842.8,739.8 842.9,742.4 843.0,751.9 843.1,763.3 843.2,751.2 843.3,748.6 843.4,754.5 843.5,737.8 843.5,739.7 843.6,757.9 843.7,758.8 843.8,757.1 843.9,753.3 844.0,755.9 844.1,737.6 844.2,743.1 844.3,748.9 844.4,760.2 844.5,753.7 844.6,752.4 844.7,742.7 844.8,753.1 844.9,755.3 845.0,756.9 845.1,751.0 845.2,769.1 845.3,742.4 845.4,759.6 845.4,741.5 845.5,741.5 845.6,758.1 845.7,748.8 845.8,745.8 845.9,752.5 846.0,773.5 846.1,747.1 846.2,749.4 846.3,762.5 846.4,747.5 846.5,772.3 846.6,741.5 846.6,750.4 846.7,760.4 846.8,750.3 846.9,748.0 847.0,740.3 847.1,751.0 847.2,759.4 847.3,749.9 847.4,743.8 847.5,763.3 847.6,759.2 847.6,756.9 847.7,750.2 847.8,744.8 847.9,761.6 848.0,752.5 848.1,748.8 848.2,750.4 848.3,755.2 848.4,759.0 848.5,751.7 848.5,748.6 848.6,742.3 848.7,749.5 848.8,750.0 848.9,754.5 849.0,751.6 849.1,747.2 849.2,750.8 849.2,757.0 849.3,750.9 849.4,750.2 849.5,749.6 849.6,748.9 849.7,754.5 849.8,756.8 849.9,749.2 849.9,750.0 850.0,754.9 850.1,758.0 850.2,763.2 850.3,740.4 850.4,758.7 850.5,747.5 850.6,756.8 850.6,759.3 850.7,767.0 850.8,747.3 850.9,760.1 851.0,731.1 851.1,752.0 851.2,733.0 851.2,745.4 851.3,742.0 851.4,739.2 851.5,751.2 851.6,742.1 851.7,741.6 851.7,744.6 851.8,746.9 851.9,755.6 852.0,747.5 852.1,743.4 852.2,736.8 852.3,756.1 852.3,753.6 852.4,756.4 852.5,757.8 852.6,761.3 852.7,755.8 852.8,770.3 852.8,748.0 852.9,758.2 853.0,764.8 853.1,749.1 853.2,750.9 853.2,746.9 853.3,748.7 853.4,757.8 853.5,752.8 853.6,742.2 853.7,771.9 853.7,745.0 853.8,760.8 853.9,751.5 854.0,756.8 854.1,755.9 854.2,757.9 854.2,757.8 854.3,765.6 854.4,745.3 854.5,752.1 854.6,737.0 854.6,733.7 854.7,755.2 854.8,736.2 854.9,744.3 855.0,753.0 855.0,748.4 855.1,751.6 855.2,728.1 855.3,739.9 855.4,737.7 855.4,750.5 855.5,750.3 855.6,754.0 855.7,761.0 855.8,780.0 855.8,746.1 855.9,756.5 856.0,758.3 856.1,749.6 856.2,742.1 856.2,757.9 856.3,758.2 856.4,755.3 856.5,744.4 856.5,731.6 856.6,741.7 856.7,760.8 856.8,760.7 856.9,741.8 856.9,752.6 857.0,761.6 857.1,761.8 857.2,742.6 857.2,748.9 857.3,749.9 857.4,741.0 857.5,765.3 857.6,735.4 857.6,753.9 857.7,759.2 857.8,754.3 857.9,756.8 857.9,731.2 858.0,750.9 858.1,753.0 858.2,752.9 858.2,739.1 858.3,748.4 858.4,743.4 858.5,762.4 858.5,744.8 858.6,749.3 858.7,748.9 858.8,748.6 858.8,765.0 858.9,762.9 859.0,753.7 859.1,747.5 859.1,746.6 859.2,734.4 859.3,751.0 859.4,753.1 859.4,748.9 859.5,742.4 859.6,760.6 859.7,757.0 859.7,751.7 859.8,763.9 859.9,752.5 860.0,769.7 860.0,748.8 860.1,751.7 860.2,745.2 860.3,758.2 860.3,746.2 860.4,753.8 860.5,751.5 860.6,743.9 860.6,769.3 860.7,759.7 860.8,748.3 860.9,757.6 860.9,753.3 861.0,746.6 861.1,766.1 861.1,757.5 861.2,772.8 861.3,754.8 861.4,756.1 861.4,756.9 861.5,752.5 861.6,752.0 861.7,751.4 861.7,737.4 861.8,748.8 861.9,760.9 861.9,763.6 862.0,752.1 862.1,743.5 862.2,759.0 862.2,743.4 862.3,741.4 862.4,738.2 862.4,732.6 862.5,766.4 862.6,750.5 862.7,725.6 862.7,743.1 862.8,735.4 862.9,757.4 862.9,744.4 863.0,743.4 863.1,755.4 863.1,763.8 863.2,743.2 863.3,749.3 863.4,741.3 863.4,757.7 863.5,751.8 863.6,750.7 863.6,742.6 863.7,762.4 863.8,747.0 863.8,759.7 863.9,760.2 864.0,739.7 864.1,747.9 864.1,751.7 864.2,740.2 864.3,748.7 864.3,752.3 864.4,735.3 864.5,746.9 864.5,752.2 864.6,745.5 864.7,744.4 864.7,737.3 864.8,749.6 864.9,751.2 865.0,748.5 865.0,761.2 865.1,749.4 865.2,745.7 865.2,764.4 865.3,755.4 865.4,758.9 865.4,760.6 865.5,744.9 865.6,741.0 865.6,763.7 865.7,732.9 865.8,744.8 865.8,763.2 865.9,743.6 866.0,758.6 866.0,742.4 866.1,770.0 866.2,748.7 866.2,756.4 866.3,737.8 866.4,755.8 866.4,755.3 866.5,745.4 866.6,755.3 866.6,747.5 866.7,752.8 866.8,744.9 866.8,745.4 866.9,738.6 867.0,753.1 867.0,747.5 867.1,748.4 867.2,763.6 867.2,749.5 867.3,748.0 867.4,743.0 867.4,757.3 867.5,750.6 867.6,742.0 867.6,747.1 867.7,754.3 867.8,750.1 867.8,759.3 867.9,758.1 868.0,768.3 868.0,743.5 868.1,748.8 868.2,747.1 868.2,747.1 868.3,749.8 868.4,746.1 868.4,757.0 868.5,738.4 868.5,749.6 868.6,754.6 868.7,774.4 868.7,749.0 868.8,751.8 868.9,749.6 868.9,753.4 869.0,747.6 869.1,755.3 869.1,760.8 869.2,767.2 869.3,746.2 869.3,756.4 869.4,751.5 869.4,752.8 869.5,745.2 869.6,750.1 869.6,754.0 869.7,751.3 869.8,745.6 869.8,759.7 869.9,750.2 870.0,747.1 870.0,749.2 870.1,747.2 870.1,742.5 870.2,753.5 870.3,747.0 870.3,738.2 870.4,757.7 870.5,745.9 870.5,736.4 870.6,748.2 870.6,742.7 870.7,750.4 870.8,738.4 870.8,745.1 870.9,734.4 871.0,736.7 871.0,749.4 871.1,743.6 871.1,761.7 871.2,742.1 871.3,749.9 871.3,737.4 871.4,761.4 871.5,758.2 871.5,735.1 871.6,750.5 871.6,755.2 871.7,767.1 871.8,757.9 871.8,741.6 871.9,754.6 871.9,752.6 872.0,745.3 872.1,745.5 872.1,746.2 872.2,739.9 872.3,750.9 872.3,744.1 872.4,747.6 872.4,745.3 872.5,742.1 872.6,765.2 872.6,750.9 872.7,754.2 872.7,771.8 872.8,748.0 872.9,742.2 872.9,733.4 873.0,735.9 873.0,753.8 873.1,736.2 873.2,730.4 873.2,748.6 873.3,747.6 873.3,762.9 873.4,735.6 873.5,759.4 873.5,728.0 873.6,759.4 873.6,750.7 873.7,739.9 873.8,758.9 873.8,749.6 873.9,753.4 873.9,748.5 874.0,758.1 874.1,753.9 874.1,739.8 874.2,740.5 874.2,740.8 874.3,755.0 874.3,753.5 874.4,750.6 874.5,746.1 874.5,743.0 874.6,751.1 874.6,756.3 874.7,754.8 874.8,762.3 874.8,763.2 874.9,744.9 874.9,770.2 875.0,761.2 875.1,750.7 875.1,751.3 875.2,752.9 875.2,743.6 875.3,742.2 875.3,748.5 875.4,744.9 875.5,723.1 875.5,753.5 875.6,731.4 875.6,750.9 875.7,744.9 875.7,742.5 875.8,754.6 875.9,740.8 875.9,739.5 876.0,750.5 876.0,749.8 876.1,741.8 876.2,741.2 876.2,741.4 876.3,750.7 876.3,751.6 876.4,755.0 876.4,746.9 876.5,739.9 876.6,754.1 876.6,770.9 876.7,761.9 876.7,738.8 876.8,754.4 876.8,746.7 876.9,746.8 876.9,745.4 877.0,740.5 877.1,735.8 877.1,751.6 877.2,738.8 877.2,742.9 877.3,744.3 877.3,748.5 877.4,743.9 877.5,746.4 877.5,743.9 877.6,749.9 877.6,750.8 877.7,760.6 877.7,752.6 877.8,742.6 877.8,752.6 877.9,755.7 878.0,742.7 878.0,742.8 878.1,727.8 878.1,760.8 878.2,748.9 878.2,759.5 878.3,734.2 878.3,727.0 878.4,750.3 878.5,740.2 878.5,749.1 878.6,740.8 878.6,754.8 878.7,744.7 878.7,746.2 878.8,751.8 878.8,743.7 878.9,744.2 879.0,758.6 879.0,746.8 879.1,749.5 879.1,752.0 879.2,748.5 879.2,752.1 879.3,764.4 879.3,757.1 879.4,735.2 879.4,728.2 879.5,745.1 879.6,726.8 879.6,723.7 879.7,738.3 879.7,739.0 879.8,749.0 879.8,751.5 879.9,766.6 879.9,741.2 880.0,742.1 880.0,749.4 880.1,757.0 880.1,745.1 880.2,739.4 880.3,723.7 880.3,754.8 880.4,745.3 880.4,761.0 880.5,763.3 880.5,764.0 880.6,751.3 880.6,755.0 880.7,735.4 880.7,751.0 880.8,744.0 880.8,756.4 880.9,742.4 880.9,745.2 881.0,739.8 881.1,763.3 881.1,748.2 881.2,738.3 881.2,743.7 881.3,735.8 881.3,757.8 881.4,758.0 881.4,748.5 881.5,749.7 881.5,734.3 881.6,760.9 881.6,746.7 881.7,765.2" fill="none" stroke="#261668" stroke-width="1.0"/><path d="M477.10,672.40V851.20" stroke="#8c8c8c" stroke-width="1.4"/><path d="M477.10,851.20H881.70" stroke="#8c8c8c" stroke-width="1.4"/></svg>
<div class="t" style="left:443.98px;top:681.48px;font-size:9.60px;color:#5a5a5a;">-40.00</div>
<div class="t" style="left:443.98px;top:720.43px;font-size:9.60px;color:#5a5a5a;">-60.00</div>
<div class="t" style="left:443.98px;top:759.38px;font-size:9.60px;color:#5a5a5a;">-80.00</div>
<div class="t" style="left:438.64px;top:798.33px;font-size:9.60px;color:#5a5a5a;">-100.00</div>
<div class="t" style="left:438.64px;top:837.28px;font-size:9.60px;color:#5a5a5a;">-120.00</div>
<div class="t" style="left:566.02px;top:856.18px;font-size:9.60px;color:#5a5a5a;">100.00</div>
<div class="t" style="left:713.76px;top:856.18px;font-size:9.60px;color:#5a5a5a;">1.00k</div>
<div class="t" style="left:855.89px;top:856.18px;font-size:9.60px;color:#5a5a5a;">10.00k</div>
<div class="t" style="left:638.80px;top:871.07px;font-size:11.00px;color:#444;letter-spacing:-0.21px;">Frequency(Hz)</div>
<div class="t" style="left:361.20px;top:761.61px;font-size:10.73px;color:#555;transform:rotate(-90deg);transform-origin:center;">Distortion Product Ratio(dB)</div>
<div class="t" style="left:1076.30px;top:641.47px;font-size:11.00px;color:#333;letter-spacing:-0.38px;">Impulse Response</div>
<svg style="left:1239.9px;top:659px;" width="8" height="8" viewBox="0 0 8 8"><circle cx="4" cy="4" r="3.9" fill="#1b005a"/></svg>
<div class="t" style="left:1250.40px;top:658.07px;font-size:11.00px;color:#333;letter-spacing:-1.00px;">Ch1</div>
<svg style="left:1273.3px;top:659px;" width="8" height="8" viewBox="0 0 8 8"><circle cx="4" cy="4" r="3.9" fill="#1b005a"/></svg>
<div class="t" style="left:1283.80px;top:658.07px;font-size:11.00px;color:#333;letter-spacing:-0.87px;">Ch1(Window)</div>
<svg style="left:885px;top:637px" width="467" height="251" viewBox="885 637 467 251"><rect x="950.5" y="672.4" width="30.0" height="178.80000000000007" fill="#c9c9c9"/><rect x="1215" y="672.4" width="135.20000000000005" height="178.80000000000007" fill="#c9c9c9"/><path d="M950.50,836.50H1350.20" stroke="#b5b5b5" stroke-width="1.2"/><path d="M950.50,822.00H1350.20" stroke="#9a9a9a" stroke-width="1.2"/><path d="M950.50,807.50H1350.20" stroke="#b5b5b5" stroke-width="1.2"/><path d="M950.50,793.00H1350.20" stroke="#9a9a9a" stroke-width="1.2"/><path d="M950.50,778.50H1350.20" stroke="#b5b5b5" stroke-width="1.2"/><path d="M950.50,764.00H1350.20" stroke="#9a9a9a" stroke-width="1.2"/><path d="M950.50,749.50H1350.20" stroke="#b5b5b5" stroke-width="1.2"/><path d="M950.50,735.00H1350.20" stroke="#9a9a9a" stroke-width="1.2"/><path d="M950.50,720.50H1350.20" stroke="#b5b5b5" stroke-width="1.2"/><path d="M950.50,706.00H1350.20" stroke="#9a9a9a" stroke-width="1.2"/><path d="M950.50,691.50H1350.20" stroke="#b5b5b5" stroke-width="1.2"/><path d="M956.18,672.40V851.20" stroke="#b8b8b8" stroke-width="1.2"/><path d="M968.04,672.40V851.20" stroke="#b8b8b8" stroke-width="1.2"/><path d="M979.90,672.40V851.20" stroke="#9a9a9a" stroke-width="1.2"/><path d="M991.76,672.40V851.20" stroke="#b8b8b8" stroke-width="1.2"/><path d="M1003.62,672.40V851.20" stroke="#b8b8b8" stroke-width="1.2"/><path d="M1015.48,672.40V851.20" stroke="#b8b8b8" stroke-width="1.2"/><path d="M1027.34,672.40V851.20" stroke="#b8b8b8" stroke-width="1.2"/><path d="M1039.20,672.40V851.20" stroke="#9a9a9a" stroke-width="1.2"/><path d="M1051.06,672.40V851.20" stroke="#b8b8b8" stroke-width="1.2"/><path d="M1062.92,672.40V851.20" stroke="#b8b8b8" stroke-width="1.2"/><path d="M1074.78,672.40V851.20" stroke="#b8b8b8" stroke-width="1.2"/><path d="M1086.64,672.40V851.20" stroke="#b8b8b8" stroke-width="1.2"/><path d="M1098.50,672.40V851.20" stroke="#9a9a9a" stroke-width="1.2"/><path d="M1110.36,672.40V851.20" stroke="#b8b8b8" stroke-width="1.2"/><path d="M1122.22,672.40V851.20" stroke="#b8b8b8" stroke-width="1.2"/><path d="M1134.08,672.40V851.20" stroke="#b8b8b8" stroke-width="1.2"/><path d="M1145.94,672.40V851.20" stroke="#b8b8b8" stroke-width="1.2"/><path d="M1157.80,672.40V851.20" stroke="#9a9a9a" stroke-width="1.2"/><path d="M1169.66,672.40V851.20" stroke="#b8b8b8" stroke-width="1.2"/><path d="M1181.52,672.40V851.20" stroke="#b8b8b8" stroke-width="1.2"/><path d="M1193.38,672.40V851.20" stroke="#b8b8b8" stroke-width="1.2"/><path d="M1205.24,672.40V851.20" stroke="#b8b8b8" stroke-width="1.2"/><path d="M1217.10,672.40V851.20" stroke="#9a9a9a" stroke-width="1.2"/><path d="M1228.96,672.40V851.20" stroke="#b8b8b8" stroke-width="1.2"/><path d="M1240.82,672.40V851.20" stroke="#b8b8b8" stroke-width="1.2"/><path d="M1252.68,672.40V851.20" stroke="#b8b8b8" stroke-width="1.2"/><path d="M1264.54,672.40V851.20" stroke="#b8b8b8" stroke-width="1.2"/><path d="M1276.40,672.40V851.20" stroke="#9a9a9a" stroke-width="1.2"/><path d="M1288.26,672.40V851.20" stroke="#b8b8b8" stroke-width="1.2"/><path d="M1300.12,672.40V851.20" stroke="#b8b8b8" stroke-width="1.2"/><path d="M1311.98,672.40V851.20" stroke="#b8b8b8" stroke-width="1.2"/><path d="M1323.84,672.40V851.20" stroke="#b8b8b8" stroke-width="1.2"/><path d="M1335.70,672.40V851.20" stroke="#9a9a9a" stroke-width="1.2"/><path d="M1347.56,672.40V851.20" stroke="#b8b8b8" stroke-width="1.2"/><path d="M980.30,672.40V851.20" stroke="#333" stroke-width="1.5"/><path d="M1215.30,672.40V851.20" stroke="#555" stroke-width="1.5"/><path d="M950.5,822.0 951.8,815.0 953.0,770.0 954.5,700.0 955.8,677.0 1035.6,677.0 1036.5,700.0 1037.6,790.0 1038.7,822.0 1350.0,822.0" fill="none" stroke="#3a2c78" stroke-width="1.1"/><path d="M1000.00,700.50V846.50" stroke="#3a2c78" stroke-width="1.2"/><path d="M950.50,672.40V851.20" stroke="#8c8c8c" stroke-width="1.4"/><path d="M950.50,851.20H1350.20" stroke="#8c8c8c" stroke-width="1.4"/></svg>
<div class="t" style="left:925.62px;top:672.78px;font-size:9.60px;color:#5a5a5a;">1.00</div>
<div class="t" style="left:906.94px;top:701.78px;font-size:9.60px;color:#5a5a5a;">800.00m</div>
<div class="t" style="left:906.94px;top:730.78px;font-size:9.60px;color:#5a5a5a;">600.00m</div>
<div class="t" style="left:906.94px;top:759.78px;font-size:9.60px;color:#5a5a5a;">400.00m</div>
<div class="t" style="left:906.94px;top:788.78px;font-size:9.60px;color:#5a5a5a;">200.00m</div>
<div class="t" style="left:925.62px;top:817.78px;font-size:9.60px;color:#5a5a5a;">0.00</div>
<div class="t" style="left:970.56px;top:856.18px;font-size:9.60px;color:#5a5a5a;">0.00</div>
<div class="t" style="left:1020.52px;top:856.18px;font-size:9.60px;color:#5a5a5a;">100.00m</div>
<div class="t" style="left:1079.82px;top:856.18px;font-size:9.60px;color:#5a5a5a;">200.00m</div>
<div class="t" style="left:1139.12px;top:856.18px;font-size:9.60px;color:#5a5a5a;">300.00m</div>
<div class="t" style="left:1198.42px;top:856.18px;font-size:9.60px;color:#5a5a5a;">400.00m</div>
<div class="t" style="left:1257.72px;top:856.18px;font-size:9.60px;color:#5a5a5a;">500.00m</div>
<div class="t" style="left:1313.14px;top:856.18px;font-size:9.60px;color:#5a5a5a;">600.00m</div>
<div class="t" style="left:1127.25px;top:871.07px;font-size:11.00px;color:#444;letter-spacing:-0.19px;">Time(s)</div>
<div class="t" style="left:836.70px;top:761.28px;font-size:10.80px;color:#555;transform:rotate(-90deg);transform-origin:center;">Impulse Response(V/FS)</div>
<div class="t" style="left:840.80px;top:128.07px;font-size:11.00px;color:#333;letter-spacing:-0.00px;">Record Waveform</div>
<svg style="left:1313.8px;top:145.7px;" width="8" height="8" viewBox="0 0 8 8"><circle cx="4" cy="4" r="3.9" fill="#1b005a"/></svg>
<div class="t" style="left:1324.30px;top:144.77px;font-size:11.00px;color:#333;letter-spacing:-1.00px;">Ch1</div>
<svg style="left:417px;top:123px" width="935" height="234" viewBox="417 123 935 234"><path d="M556.50,157.00V320.00" stroke="#e2e2e2" stroke-width="1.1"/><path d="M628.00,157.00V320.00" stroke="#e2e2e2" stroke-width="1.1"/><path d="M699.50,157.00V320.00" stroke="#e2e2e2" stroke-width="1.1"/><path d="M771.00,157.00V320.00" stroke="#e2e2e2" stroke-width="1.1"/><path d="M842.50,157.00V320.00" stroke="#e2e2e2" stroke-width="1.1"/><path d="M914.00,157.00V320.00" stroke="#e2e2e2" stroke-width="1.1"/><path d="M985.50,157.00V320.00" stroke="#e2e2e2" stroke-width="1.1"/><path d="M1057.00,157.00V320.00" stroke="#e2e2e2" stroke-width="1.1"/><path d="M1128.50,157.00V320.00" stroke="#e2e2e2" stroke-width="1.1"/><path d="M1200.00,157.00V320.00" stroke="#e2e2e2" stroke-width="1.1"/><path d="M1271.50,157.00V320.00" stroke="#e2e2e2" stroke-width="1.1"/><path d="M1343.00,157.00V320.00" stroke="#e2e2e2" stroke-width="1.1"/><path d="M484.50,163.65H1350.20" stroke="#9d9d9d" stroke-width="1.2"/><path d="M484.50,201.48H1350.20" stroke="#9d9d9d" stroke-width="1.2"/><path d="M484.50,239.30H1350.20" stroke="#9d9d9d" stroke-width="1.2"/><path d="M484.50,277.12H1350.20" stroke="#9d9d9d" stroke-width="1.2"/><path d="M484.50,314.95H1350.20" stroke="#9d9d9d" stroke-width="1.2"/><defs><linearGradient id="wg" x1="0" x2="1" y1="0" y2="0"><stop offset="0" stop-color="#2a1a6a" stop-opacity="0"/><stop offset="0.4" stop-color="#2a1a6a" stop-opacity="0.3"/><stop offset="1" stop-color="#1d0a58" stop-opacity="0.92"/></linearGradient></defs><rect x="830" y="163.65" width="140" height="151.30" fill="url(#wg)"/><path d="M484.5,239.3 484.6,239.3 484.7,239.3 484.8,239.3 484.9,239.3 485.0,239.3 485.1,239.3 485.2,239.3 485.3,239.3 485.4,239.3 485.5,239.3 485.6,239.3 485.7,239.3 485.8,239.3 485.9,239.3 486.0,239.3 486.1,239.3 486.2,239.3 486.3,239.3 486.4,239.3 486.5,239.3 486.6,239.3 486.7,239.3 486.8,239.3 486.9,239.3 487.0,239.3 487.1,239.3 487.2,239.3 487.3,239.3 487.4,239.3 487.5,239.3 487.6,239.3 487.7,239.3 487.8,239.3 487.9,239.3 488.0,239.3 488.1,239.3 488.2,239.3 488.3,239.3 488.4,239.3 488.5,239.3 488.6,239.3 488.7,239.3 488.8,239.3 488.9,239.3 489.0,239.3 489.1,239.3 489.2,239.3 489.3,239.3 489.4,239.3 489.5,239.3 489.6,239.3 489.7,239.3 489.8,239.3 489.9,239.3 490.0,239.3 490.1,239.3 490.2,239.3 490.3,239.3 490.4,239.3 490.5,239.3 490.6,239.3 490.7,239.3 490.8,239.3 490.9,239.3 491.0,239.3 491.1,239.3 491.2,239.3 491.3,239.3 491.4,239.3 491.5,239.3 491.6,239.3 491.7,239.3 491.8,239.3 491.9,239.3 492.0,239.3 492.1,239.3 492.2,239.3 492.3,239.3 492.4,239.3 492.5,239.3 492.6,239.3 492.7,239.3 492.8,239.3 492.9,239.3 493.0,239.3 493.1,239.3 493.2,239.3 493.3,239.3 493.4,239.3 493.5,239.3 493.6,239.3 493.7,239.3 493.8,239.3 493.9,239.3 494.0,239.3 494.1,239.3 494.2,239.3 494.3,239.3 494.4,239.3 494.5,239.3 494.6,239.3 494.7,239.3 494.8,239.3 494.9,239.3 495.0,239.3 495.1,239.3 495.2,239.3 495.3,239.3 495.4,239.3 495.5,239.3 495.6,239.3 495.7,239.3 495.8,239.3 495.9,239.3 496.0,239.3 496.1,239.3 496.2,239.3 496.3,239.3 496.4,239.3 496.5,239.3 496.6,239.3 496.7,239.3 496.8,239.3 496.9,239.3 497.0,239.3 497.1,239.3 497.2,239.3 497.3,239.3 497.4,239.3 497.5,239.3 497.6,239.3 497.7,239.3 497.8,239.3 497.9,239.3 498.0,239.3 498.1,239.3 498.2,239.3 498.3,239.3 498.4,239.3 498.5,239.3 498.6,239.3 498.7,239.3 498.8,239.3 498.9,239.3 499.0,239.3 499.1,239.3 499.2,239.3 499.3,239.3 499.4,239.3 499.5,239.3 499.6,239.3 499.7,239.3 499.8,239.3 499.9,239.3 500.0,239.3 500.1,239.3 500.2,239.3 500.3,239.3 500.4,239.3 500.5,239.3 500.6,239.3 500.7,239.3 500.8,239.3 500.9,239.3 501.0,239.3 501.1,239.3 501.2,239.3 501.3,239.3 501.4,239.3 501.5,239.3 501.6,239.3 501.7,239.3 501.8,239.3 501.9,239.3 502.0,239.3 502.1,239.3 502.2,239.3 502.3,239.3 502.4,239.3 502.5,239.3 502.6,239.3 502.7,239.3 502.8,239.3 502.9,239.3 503.0,239.3 503.1,239.3 503.2,239.3 503.3,239.3 503.4,239.3 503.5,239.3 503.6,239.3 503.7,239.3 503.8,239.3 503.9,239.3 504.0,239.3 504.1,239.3 504.2,239.3 504.3,239.3 504.4,239.3 504.5,239.3 504.6,239.3 504.7,239.3 504.8,239.3 504.9,239.3 505.0,239.3 505.1,239.3 505.2,239.3 505.3,239.3 505.4,239.3 505.5,239.3 505.6,239.3 505.7,239.3 505.8,239.3 505.9,239.3 506.0,239.3 506.1,239.3 506.2,239.3 506.3,239.3 506.4,239.3 506.5,239.3 506.6,239.3 506.7,239.3 506.8,239.3 506.9,239.3 507.0,239.3 507.1,239.3 507.2,239.3 507.3,239.3 507.4,239.3 507.5,239.3 507.6,239.3 507.7,239.3 507.8,239.3 507.9,239.3 508.0,239.3 508.1,239.3 508.2,239.3 508.3,239.3 508.4,239.3 508.5,239.3 508.6,239.3 508.7,239.3 508.8,239.3 508.9,239.3 509.0,239.3 509.1,239.3 509.2,239.3 509.3,239.3 509.4,239.3 509.5,239.3 509.6,239.3 509.7,239.3 509.8,239.3 509.9,239.3 510.0,239.3 510.1,239.3 510.2,239.3 510.3,239.3 510.4,239.3 510.5,239.3 510.6,239.3 510.7,239.3 510.8,239.3 510.9,239.3 511.0,239.3 511.1,239.3 511.2,239.3 511.3,239.3 511.4,239.3 511.5,239.3 511.6,239.3 511.7,239.3 511.8,239.3 511.9,239.3 512.0,239.3 512.1,239.3 512.2,239.3 512.3,239.3 512.4,239.3 512.5,239.3 512.6,239.3 512.7,239.3 512.8,239.3 512.9,239.3 513.0,239.3 513.1,239.3 513.2,239.3 513.3,239.3 513.4,239.3 513.5,239.3 513.6,239.3 513.7,239.3 513.8,239.3 513.9,239.3 514.0,239.3 514.1,239.3 514.2,239.3 514.3,239.3 514.4,239.3 514.5,239.3 514.6,239.3 514.7,239.3 514.8,239.3 514.9,239.3 515.0,239.3 515.1,239.3 515.2,239.3 515.3,239.3 515.4,239.3 515.5,239.3 515.6,239.3 515.7,239.3 515.8,239.3 515.9,239.3 516.0,239.3 516.1,239.3 516.2,239.3 516.3,239.3 516.4,239.3 516.5,239.3 516.6,239.3 516.7,239.3 516.8,239.3 516.9,239.3 517.0,239.3 517.1,239.3 517.2,239.3 517.3,239.3 517.4,239.3 517.5,239.3 517.6,239.3 517.7,239.3 517.8,239.3 517.9,239.3 518.0,239.3 518.1,239.3 518.2,239.3 518.3,239.3 518.4,239.3 518.5,239.3 518.6,239.3 518.7,239.3 518.8,239.3 518.9,239.3 519.0,239.3 519.1,239.3 519.2,239.3 519.3,239.3 519.4,239.3 519.5,239.3 519.6,239.3 519.7,239.3 519.8,239.3 519.9,239.3 520.0,239.3 520.1,239.3 520.2,239.3 520.3,239.3 520.4,239.3 520.5,239.3 520.6,239.3 520.7,239.3 520.8,239.3 520.9,239.3 521.0,239.3 521.1,239.3 521.2,239.3 521.3,239.3 521.4,239.3 521.5,239.3 521.6,239.3 521.7,239.3 521.8,239.3 521.9,239.3 522.0,239.3 522.1,239.3 522.2,239.3 522.3,239.3 522.4,239.3 522.5,239.3 522.6,239.3 522.7,239.3 522.8,239.3 522.9,239.3 523.0,239.3 523.1,239.3 523.2,239.3 523.3,239.3 523.4,239.3 523.5,239.3 523.6,239.3 523.7,239.3 523.8,239.3 523.9,239.3 524.0,239.3 524.1,239.3 524.2,239.3 524.3,239.3 524.4,239.3 524.5,239.3 524.6,239.3 524.7,239.3 524.8,239.3 524.9,239.3 525.0,239.3 525.1,239.3 525.2,239.3 525.3,239.3 525.4,239.3 525.5,239.3 525.6,239.3 525.7,239.3 525.8,239.3 525.9,239.3 526.0,239.3 526.1,239.3 526.2,239.3 526.3,239.3 526.4,239.3 526.5,239.3 526.6,239.3 526.7,239.3 526.8,239.3 526.9,239.3 527.0,239.3 527.1,239.3 527.2,239.3 527.3,239.3 527.4,239.3 527.5,239.3 527.6,239.3 527.7,239.3 527.8,239.3 527.9,239.3 528.0,239.3 528.1,239.3 528.2,239.3 528.3,239.3 528.4,239.3 528.5,239.3 528.6,239.3 528.7,239.3 528.8,239.3 528.9,239.3 529.0,239.3 529.1,239.3 529.2,239.3 529.3,239.3 529.4,239.3 529.5,239.3 529.6,239.3 529.7,239.3 529.8,239.3 529.9,239.3 530.0,239.3 530.1,239.3 530.2,239.3 530.3,239.3 530.4,239.3 530.5,239.3 530.6,239.3 530.7,239.3 530.8,239.3 530.9,239.3 531.0,239.3 531.1,239.3 531.2,239.3 531.3,239.3 531.4,239.3 531.5,239.3 531.6,239.3 531.7,239.3 531.8,239.3 531.9,239.3 532.0,239.3 532.1,239.3 532.2,239.3 532.3,239.3 532.4,239.3 532.5,239.3 532.6,239.3 532.7,239.3 532.8,239.3 532.9,239.3 533.0,239.3 533.1,239.3 533.2,239.3 533.3,239.3 533.4,239.3 533.5,239.3 533.6,239.3 533.7,239.3 533.8,239.3 533.9,239.3 534.0,239.2 534.1,239.2 534.2,239.2 534.3,239.2 534.4,239.2 534.5,239.2 534.6,239.1 534.7,239.1 534.8,239.1 534.9,239.1 535.0,239.1 535.1,239.0 535.2,239.0 535.3,239.0 535.4,238.9 535.5,238.9 535.6,238.9 535.7,238.9 535.8,238.8 535.9,238.8 536.0,238.7 536.1,238.7 536.2,238.7 536.3,238.6 536.4,238.6 536.5,238.5 536.6,238.5 536.7,238.5 536.8,238.4 536.9,238.4 537.0,238.3 537.1,238.3 537.2,238.2 537.3,238.2 537.4,238.1 537.5,238.1 537.6,238.0 537.7,238.0 537.8,237.9 537.9,237.9 538.0,237.8 538.1,237.8 538.2,237.7 538.3,237.7 538.4,237.6 538.5,237.5 538.6,237.5 538.7,237.4 538.8,237.4 538.9,237.3 539.0,237.2 539.1,237.2 539.2,237.1 539.3,237.1 539.4,237.0 539.5,237.0 539.6,236.9 539.7,236.8 539.8,236.8 539.9,236.7 540.0,236.7 540.1,236.6 540.2,236.5 540.3,236.5 540.4,236.4 540.5,236.4 540.6,236.3 540.7,236.3 540.8,236.2 540.9,236.1 541.0,236.1 541.1,236.0 541.2,236.0 541.3,235.9 541.4,235.9 541.5,235.8 541.6,235.8 541.7,235.7 541.8,235.7 541.9,235.6 542.0,235.6 542.1,235.6 542.2,235.5 542.3,235.5 542.4,235.4 542.5,235.4 542.6,235.4 542.7,235.3 542.8,235.3 542.9,235.3 543.0,235.2 543.1,235.2 543.2,235.2 543.3,235.2 543.4,235.2 543.5,235.1 543.6,235.1 543.7,235.1 543.8,235.1 543.9,235.1 544.0,235.1 544.1,235.1 544.2,235.1 544.3,235.1 544.4,235.1 544.5,235.1 544.6,235.1 544.7,235.1 544.8,235.1 544.9,235.2 545.0,235.2 545.1,235.2 545.2,235.2 545.3,235.3 545.4,235.3 545.5,235.3 545.6,235.4 545.7,235.4 545.8,235.5 545.9,235.5 546.0,235.6 546.1,235.6 546.2,235.7 546.3,235.8 546.4,235.8 546.5,235.9 546.6,236.0 546.7,236.1 546.8,236.2 546.9,236.2 547.0,236.3 547.1,236.4 547.2,236.5 547.3,236.6 547.4,236.7 547.5,236.9 547.6,237.0 547.7,237.1 547.8,237.2 547.9,237.4 548.0,237.5 548.1,237.6 548.2,237.8 548.3,237.9 548.4,238.1 548.5,238.2 548.6,238.4 548.7,238.6 548.8,238.7 548.9,238.9 549.0,239.1 549.1,239.3 549.2,239.5 549.3,239.6 549.4,239.8 549.5,240.0 549.6,240.2 549.7,240.5 549.8,240.7 549.9,240.9 550.0,241.1 550.1,241.3 550.2,241.6 550.3,241.8 550.4,242.0 550.5,242.3 550.6,242.5 550.7,242.8 550.8,243.1 550.9,243.3 551.0,243.6 551.1,243.9 551.2,244.1 551.3,244.4 551.4,244.7 551.5,245.0 551.6,245.3 551.7,245.6 551.8,245.9 551.9,246.2 552.0,246.5 552.1,246.8 552.2,247.1 552.3,247.4 552.4,247.8 552.5,248.1 552.6,248.4 552.7,248.7 552.8,249.1 552.9,249.4 553.0,249.8 553.1,250.1 553.2,250.5 553.3,250.8 553.4,251.2 553.5,251.5 553.6,251.9 553.7,252.3 553.8,252.6 553.9,253.0 554.0,253.4 554.1,253.7 554.2,254.1 554.3,254.5 554.4,254.9 554.5,255.3 554.6,255.6 554.7,256.0 554.8,256.4 554.9,256.8 555.0,257.2 555.1,257.6 555.2,258.0 555.3,258.4 555.4,258.8 555.5,259.2 555.6,259.6 555.7,260.0 555.8,260.4 555.9,260.8 556.0,261.2 556.1,261.6 556.2,262.0 556.3,262.4 556.4,262.8 556.5,263.2 556.6,263.6 556.7,264.0 556.8,264.3 556.9,264.7 557.0,265.1 557.1,265.5 557.2,265.9 557.3,266.3 557.4,266.7 557.5,267.1 557.6,267.5 557.7,267.9 557.8,268.2 557.9,268.6 558.0,269.0 558.1,269.4 558.2,269.7 558.3,270.1 558.4,270.5 558.5,270.8 558.6,271.2 558.7,271.5 558.8,271.9 558.9,272.2 559.0,272.6 559.1,272.9 559.2,273.2 559.3,273.5 559.4,273.9 559.5,274.2 559.6,274.5 559.7,274.8 559.8,275.1 559.9,275.4 560.0,275.7 560.1,276.0 560.2,276.2 560.3,276.5 560.4,276.8 560.5,277.0 560.6,277.3 560.7,277.5 560.8,277.8 560.9,278.0 561.0,278.2 561.1,278.4 561.2,278.6 561.3,278.8 561.4,279.0 561.5,279.2 561.6,279.4 561.7,279.5 561.8,279.7 561.9,279.8 562.0,280.0 562.1,280.1 562.2,280.2 562.3,280.3 562.4,280.4 562.5,280.5 562.6,280.6 562.7,280.7 562.8,280.7 562.9,280.8 563.0,280.8 563.1,280.8 563.2,280.9 563.3,280.9 563.4,280.9 563.5,280.9 563.6,280.8 563.7,280.8 563.8,280.8 563.9,280.7 564.0,280.6 564.1,280.5 564.2,280.5 564.3,280.4 564.4,280.2 564.5,280.1 564.6,280.0 564.7,279.8 564.8,279.7 564.9,279.5 565.0,279.3 565.1,279.1 565.2,278.9 565.3,278.6 565.4,278.4 565.5,278.2 565.6,277.9 565.7,277.6 565.8,277.3 565.9,277.0 566.0,276.7 566.1,276.4 566.2,276.0 566.3,275.7 566.4,275.3 566.5,275.0 566.6,274.6 566.7,274.2 566.8,273.7 566.9,273.3 567.0,272.9 567.1,272.4 567.2,272.0 567.3,271.5 567.4,271.0 567.5,270.5 567.6,270.0 567.7,269.4 567.8,268.9 567.9,268.3 568.0,267.8 568.1,267.2 568.2,266.6 568.3,266.0 568.4,265.4 568.5,264.7 568.6,264.1 568.7,263.5 568.8,262.8 568.9,262.1 569.0,261.4 569.1,260.7 569.2,260.0 569.3,259.3 569.4,258.6 569.5,257.8 569.6,257.1 569.7,256.3 569.8,255.5 569.9,254.8 570.0,254.0 570.1,253.2 570.2,252.4 570.3,251.5 570.4,250.7 570.5,249.9 570.6,249.0 570.7,248.2 570.8,247.3 570.9,246.4 571.0,245.5 571.1,244.6 571.2,243.7 571.3,242.8 571.4,241.9 571.5,241.0 571.6,240.1 571.7,239.1 571.8,238.2 571.9,237.3 572.0,236.3 572.1,235.4 572.2,234.4 572.3,233.4 572.4,232.5 572.5,231.5 572.6,230.5 572.7,229.5 572.8,228.5 572.9,227.5 573.0,226.5 573.1,225.5 573.2,224.5 573.3,223.5 573.4,222.5 573.5,221.5 573.6,220.5 573.7,219.5 573.8,218.5 573.9,217.5 574.0,216.5 574.1,215.5 574.2,214.5 574.3,213.5 574.4,212.5 574.5,211.5 574.6,210.5 574.7,209.5 574.8,208.5 574.9,207.5 575.0,206.5 575.1,205.6 575.2,204.6 575.3,203.6 575.4,202.6 575.5,201.7 575.6,200.7 575.7,199.8 575.8,198.8 575.9,197.9 576.0,197.0 576.1,196.0 576.2,195.1 576.3,194.2 576.4,193.3 576.5,192.4 576.6,191.5 576.7,190.7 576.8,189.8 576.9,189.0 577.0,188.1 577.1,187.3 577.2,186.5 577.3,185.7 577.4,184.9 577.5,184.1 577.6,183.3 577.7,182.6 577.8,181.8 577.9,181.1 578.0,180.4 578.1,179.7 578.2,179.0 578.3,178.3 578.4,177.6 578.5,177.0 578.6,176.4 578.7,175.8 578.8,175.2 578.9,174.6 579.0,174.0 579.1,173.5 579.2,173.0 579.3,172.5 579.4,172.0 579.5,171.5 579.6,171.0 579.7,170.6 579.8,170.2 579.9,169.8 580.0,169.4 580.1,169.1 580.2,168.7 580.3,168.4 580.4,168.1 580.5,167.8 580.6,167.6 580.7,167.3 580.8,167.1 580.9,166.9 581.0,166.8 581.1,166.6 581.2,166.5 581.3,166.4 581.4,166.3 581.5,166.2 581.6,166.2 581.7,166.2 581.8,166.2 581.9,166.2 582.0,166.3 582.1,166.4 582.2,166.5 582.3,166.6 582.4,166.7 582.5,166.9 582.6,167.1 582.7,167.3 582.8,167.5 582.9,167.8 583.0,168.1 583.1,168.4 583.2,168.7 583.3,169.1 583.4,169.5 583.5,169.9 583.6,170.3 583.7,170.7 583.8,171.2 583.9,171.7 584.0,172.2 584.1,172.8 584.2,173.3 584.3,173.9 584.4,174.5 584.5,175.1 584.6,175.8 584.7,176.5 584.8,177.2 584.9,177.9 585.0,178.6 585.1,179.4 585.2,180.2 585.3,181.0 585.4,181.8 585.5,182.6 585.6,183.5 585.7,184.4 585.8,185.3 585.9,186.2 586.0,187.1 586.1,188.1 586.2,189.1 586.3,190.1 586.4,191.1 586.5,192.1 586.6,193.2 586.7,194.2 586.8,195.3 586.9,196.4 587.0,197.5 587.1,198.7 587.2,199.8 587.3,201.0 587.4,202.1 587.5,203.3 587.6,204.5 587.7,205.8 587.8,207.0 587.9,208.2 588.0,209.5 588.1,210.7 588.2,212.0 588.3,213.3 588.4,214.6 588.5,215.9 588.6,217.2 588.7,218.6 588.8,219.9 588.9,221.2 589.0,222.6 589.1,223.9 589.2,225.3 589.3,226.6 589.4,228.0 589.5,229.4 589.6,230.8 589.7,232.2 589.8,233.5 589.9,234.9 590.0,236.3 590.1,237.7 590.2,239.1 590.3,240.5 590.4,241.9 590.5,243.3 590.6,244.7 590.7,246.1 590.8,247.5 590.9,248.9 591.0,250.3 591.1,251.7 591.2,253.1 591.3,254.5 591.4,255.9 591.5,257.3 591.6,258.7 591.7,260.0 591.8,261.4 591.9,262.7 592.0,264.1 592.1,265.4 592.2,266.8 592.3,268.1 592.4,269.4 592.5,270.7 592.6,272.0 592.7,273.3 592.8,274.6 592.9,275.8 593.0,277.1 593.1,278.3 593.2,279.6 593.3,280.8 593.4,282.0 593.5,283.2 593.6,284.3 593.7,285.5 593.8,286.6 593.9,287.7 594.0,288.9 594.1,289.9 594.2,291.0 594.3,292.1 594.4,293.1 594.5,294.1 594.6,295.1 594.7,296.1 594.8,297.0 594.9,298.0 595.0,298.9 595.1,299.8 595.2,300.7 595.3,301.5 595.4,302.3 595.5,303.1 595.6,303.9 595.7,304.7 595.8,305.4 595.9,306.1 596.0,306.8 596.1,307.4 596.2,308.1 596.3,308.7 596.4,309.3 596.5,309.8 596.6,310.3 596.7,310.8 596.8,311.3 596.9,311.7 597.0,312.2 597.1,312.6 597.2,312.9 597.3,313.2 597.4,313.5 597.5,313.8 597.6,314.1 597.7,314.3 597.8,314.5 597.9,314.6 598.0,314.7 598.1,314.8 598.2,314.9 598.3,314.9 598.4,314.9 598.5,314.9 598.6,314.9 598.7,314.8 598.8,314.7 598.9,314.5 599.0,314.3 599.1,314.1 599.2,313.9 599.3,313.6 599.4,313.3 599.5,313.0 599.6,312.6 599.7,312.2 599.8,311.8 599.9,311.4 600.0,310.9 600.1,310.4 600.2,309.8 600.3,309.3 600.4,308.7 600.5,308.0 600.6,307.4 600.7,306.7 600.8,306.0 600.9,305.2 601.0,304.4 601.1,303.6 601.2,302.8 601.3,301.9 601.4,301.1 601.5,300.1 601.6,299.2 601.7,298.2 601.8,297.2 601.9,296.2 602.0,295.2 602.1,294.1 602.2,293.0 602.3,291.9 602.4,290.7 602.5,289.6 602.6,288.4 602.7,287.2 602.8,285.9 602.9,284.7 603.0,283.4 603.1,282.1 603.2,280.8 603.3,279.5 603.4,278.1 603.5,276.7 603.6,275.3 603.7,273.9 603.8,272.5 603.9,271.1 604.0,269.6 604.1,268.1 604.2,266.6 604.3,265.1 604.4,263.6 604.5,262.1 604.6,260.6 604.7,259.0 604.8,257.5 604.9,255.9 605.0,254.3 605.1,252.7 605.2,251.1 605.3,249.5 605.4,247.9 605.5,246.3 605.6,244.7 605.7,243.1 605.8,241.4 605.9,239.8 606.0,238.2 606.1,236.6 606.2,234.9 606.3,233.3 606.4,231.7 606.5,230.0 606.6,228.4 606.7,226.8 606.8,225.2 606.9,223.6 607.0,222.0 607.1,220.4 607.2,218.8 607.3,217.2 607.4,215.6 607.5,214.1 607.6,212.5 607.7,211.0 607.8,209.4 607.9,207.9 608.0,206.4 608.1,204.9 608.2,203.4 608.3,202.0 608.4,200.5 608.5,199.1 608.6,197.7 608.7,196.3 608.8,195.0 608.9,193.6 609.0,192.3 609.1,191.0 609.2,189.7 609.3,188.5 609.4,187.2 609.5,186.0 609.6,184.8 609.7,183.7 609.8,182.5 609.9,181.4 610.0,180.4 610.1,179.3 610.2,178.3 610.3,177.3 610.4,176.3 610.5,175.4 610.6,174.5 610.7,173.7 610.8,172.8 610.9,172.0 611.0,171.3 611.1,170.5 611.2,169.8 611.3,169.2 611.4,168.5 611.5,168.0 611.6,167.4 611.7,166.9 611.8,166.4 611.9,166.0 612.0,165.6 612.1,165.2 612.2,164.9 612.3,164.6 612.4,164.3 612.5,164.1 612.6,163.9 612.7,163.8 612.8,163.7 612.9,163.7 613.0,163.7 613.1,163.7 613.2,163.7 613.3,163.9 613.4,164.0 613.5,164.2 613.6,164.4 613.7,164.7 613.8,165.0 613.9,165.4 614.0,165.7 614.1,166.2 614.2,166.6 614.3,167.2 614.4,167.7 614.5,168.3 614.6,168.9 614.7,169.6 614.8,170.3 614.9,171.1 615.0,171.8 615.1,172.7 615.2,173.5 615.3,174.4 615.4,175.4 615.5,176.3 615.6,177.3 615.7,178.4 615.8,179.5 615.9,180.6 616.0,181.7 616.1,182.9 616.2,184.1 616.3,185.4 616.4,186.6 616.5,187.9 616.6,189.3 616.7,190.7 616.8,192.1 616.9,193.5 617.0,194.9 617.1,196.4 617.2,197.9 617.3,199.5 617.4,201.0 617.5,202.6 617.6,204.2 617.7,205.8 617.8,207.5 617.9,209.1 618.0,210.8 618.1,212.5 618.2,214.2 618.3,216.0 618.4,217.7 618.5,219.5 618.6,221.3 618.7,223.1 618.8,224.9 618.9,226.7 619.0,228.5 619.1,230.3 619.2,232.2 619.3,234.0 619.4,235.9 619.5,237.7 619.6,239.6 619.7,241.5 619.8,243.3 619.9,245.2 620.0,247.0 620.1,248.9 620.2,250.7 620.3,252.6 620.4,254.4 620.5,256.2 620.6,258.1 620.7,259.9 620.8,261.7 620.9,263.5 621.0,265.2 621.1,267.0 621.2,268.8 621.3,270.5 621.4,272.2 621.5,273.9 621.6,275.6 621.7,277.2 621.8,278.8 621.9,280.4 622.0,282.0 622.1,283.6 622.2,285.1 622.3,286.6 622.4,288.1 622.5,289.5 622.6,290.9 622.7,292.3 622.8,293.7 622.9,295.0 623.0,296.3 623.1,297.5 623.2,298.7 623.3,299.9 623.4,301.0 623.5,302.1 623.6,303.2 623.7,304.2 623.8,305.2 623.9,306.1 624.0,307.0 624.1,307.8 624.2,308.6 624.3,309.4 624.4,310.1 624.5,310.8 624.6,311.4 624.7,311.9 624.8,312.5 624.9,312.9 625.0,313.4 625.1,313.7 625.2,314.1 625.3,314.3 625.4,314.6 625.5,314.7 625.6,314.9 625.7,314.9 625.8,314.9 625.9,314.9 626.0,314.8 626.1,314.7 626.2,314.5 626.3,314.3 626.4,314.0 626.5,313.7 626.6,313.3 626.7,312.8 626.8,312.3 626.9,311.8 627.0,311.2 627.1,310.5 627.2,309.8 627.3,309.1 627.4,308.3 627.5,307.5 627.6,306.6 627.7,305.6 627.8,304.6 627.9,303.6 628.0,302.5 628.1,301.4 628.2,300.2 628.3,299.0 628.4,297.7 628.5,296.4 628.6,295.1 628.7,293.7 628.8,292.2 628.9,290.8 629.0,289.3 629.1,287.7 629.2,286.1 629.3,284.5 629.4,282.9 629.5,281.2 629.6,279.5 629.7,277.7 629.8,275.9 629.9,274.1 630.0,272.3 630.1,270.4 630.2,268.6 630.3,266.6 630.4,264.7 630.5,262.8 630.6,260.8 630.7,258.8 630.8,256.8 630.9,254.8 631.0,252.7 631.1,250.7 631.2,248.6 631.3,246.6 631.4,244.5 631.5,242.4 631.6,240.3 631.7,238.2 631.8,236.2 631.9,234.1 632.0,232.0 632.1,229.9 632.2,227.8 632.3,225.8 632.4,223.7 632.5,221.7 632.6,219.6 632.7,217.6 632.8,215.6 632.9,213.6 633.0,211.6 633.1,209.6 633.2,207.7 633.3,205.8 633.4,203.9 633.5,202.0 633.6,200.2 633.7,198.4 633.8,196.6 633.9,194.9 634.0,193.2 634.1,191.5 634.2,189.9 634.3,188.3 634.4,186.7 634.5,185.2 634.6,183.7 634.7,182.3 634.8,180.9 634.9,179.5 635.0,178.3 635.1,177.0 635.2,175.8 635.3,174.7 635.4,173.6 635.5,172.5 635.6,171.5 635.7,170.6 635.8,169.7 635.9,168.9 636.0,168.1 636.1,167.4 636.2,166.8 636.3,166.2 636.4,165.6 636.5,165.2 636.6,164.8 636.7,164.4 636.8,164.1 636.9,163.9 637.0,163.8 637.1,163.7 637.2,163.7 637.3,163.7 637.4,163.8 637.5,163.9 637.6,164.2 637.7,164.5 637.8,164.8 637.9,165.2 638.0,165.7 638.1,166.3 638.2,166.9 638.3,167.6 638.4,168.3 638.5,169.1 638.6,170.0 638.7,170.9 638.8,171.9 638.9,172.9 639.0,174.0 639.1,175.2 639.2,176.4 639.3,177.7 639.4,179.0 639.5,180.4 639.6,181.8 639.7,183.3 639.8,184.9 639.9,186.4 640.0,188.1 640.1,189.8 640.2,191.5 640.3,193.3 640.4,195.1 640.5,197.0 640.6,198.9 640.7,200.8 640.8,202.8 640.9,204.8 641.0,206.8 641.1,208.9 641.2,211.0 641.3,213.2 641.4,215.3 641.5,217.5 641.6,219.7 641.7,221.9 641.8,224.2 641.9,226.5 642.0,228.7 642.1,231.0 642.2,233.3 642.3,235.6 642.4,237.9 642.5,240.2 642.6,242.6 642.7,244.9 642.8,247.2 642.9,249.5 643.0,251.8 643.1,254.1 643.2,256.4 643.3,258.6 643.4,260.9 643.5,263.1 643.6,265.3 643.7,267.5 643.8,269.7 643.9,271.8 644.0,273.9 644.1,276.0 644.2,278.0 644.3,280.0 644.4,282.0 644.5,283.9 644.6,285.8 644.7,287.6 644.8,289.4 644.9,291.2 645.0,292.9 645.1,294.5 645.2,296.1 645.3,297.7 645.4,299.2 645.5,300.6 645.6,301.9 645.7,303.3 645.8,304.5 645.9,305.7 646.0,306.8 646.1,307.8 646.2,308.8 646.3,309.7 646.4,310.6 646.5,311.3 646.6,312.0 646.7,312.7 646.8,313.2 646.9,313.7 647.0,314.1 647.1,314.4 647.2,314.7 647.3,314.8 647.4,314.9 647.5,314.9 647.6,314.9 647.7,314.7 647.8,314.5 647.9,314.2 648.0,313.9 648.1,313.4 648.2,312.9 648.3,312.3 648.4,311.6 648.5,310.8 648.6,310.0 648.7,309.1 648.8,308.1 648.9,307.0 649.0,305.9 649.1,304.7 649.2,303.4 649.3,302.0 649.4,300.6 649.5,299.1 649.6,297.6 649.7,296.0 649.8,294.3 649.9,292.6 650.0,290.8 650.1,288.9 650.2,287.0 650.3,285.1 650.4,283.0 650.5,281.0 650.6,278.9 650.7,276.7 650.8,274.5 650.9,272.3 651.0,270.0 651.1,267.7 651.2,265.3 651.3,262.9 651.4,260.5 651.5,258.1 651.6,255.6 651.7,253.2 651.8,250.7 651.9,248.2 652.0,245.6 652.1,243.1 652.2,240.6 652.3,238.0 652.4,235.5 652.5,232.9 652.6,230.4 652.7,227.9 652.8,225.4 652.9,222.8 653.0,220.4 653.1,217.9 653.2,215.4 653.3,213.0 653.4,210.6 653.5,208.3 653.6,205.9 653.7,203.6 653.8,201.4 653.9,199.2 654.0,197.0 654.1,194.9 654.2,192.8 654.3,190.8 654.4,188.8 654.5,186.9 654.6,185.1 654.7,183.3 654.8,181.6 654.9,179.9 655.0,178.3 655.1,176.8 655.2,175.4 655.3,174.0 655.4,172.7 655.5,171.5 655.6,170.4 655.7,169.4 655.8,168.4 655.9,167.5 656.0,166.7 656.1,166.0 656.2,165.4 656.3,164.9 656.4,164.5 656.5,164.1 656.6,163.9 656.7,163.7 656.8,163.7 656.9,163.7 657.0,163.8 657.1,164.0 657.2,164.3 657.3,164.7 657.4,165.2 657.5,165.8 657.6,166.5 657.7,167.3 657.8,168.1 657.9,169.1 658.0,170.1 658.1,171.3 658.2,172.5 658.3,173.8 658.4,175.2 658.5,176.7 658.6,178.2 658.7,179.8 658.8,181.6 658.9,183.3 659.0,185.2 659.1,187.1 659.2,189.1 659.3,191.2 659.4,193.3 659.5,195.5 659.6,197.8 659.7,200.1 659.8,202.5 659.9,204.9 660.0,207.3 660.1,209.8 660.2,212.4 660.3,215.0 660.4,217.6 660.5,220.2 660.6,222.9 660.7,225.6 660.8,228.3 660.9,231.1 661.0,233.8 661.1,236.6 661.2,239.4 661.3,242.1 661.4,244.9 661.5,247.7 661.6,250.4 661.7,253.2 661.8,255.9 661.9,258.6 662.0,261.3 662.1,264.0 662.2,266.6 662.3,269.2 662.4,271.7 662.5,274.3 662.6,276.7 662.7,279.1 662.8,281.5 662.9,283.8 663.0,286.1 663.1,288.2 663.2,290.4 663.3,292.4 663.4,294.4 663.5,296.3 663.6,298.1 663.7,299.9 663.8,301.5 663.9,303.1 664.0,304.6 664.1,306.0 664.2,307.3 664.3,308.5 664.4,309.6 664.5,310.6 664.6,311.5 664.7,312.3 664.8,313.0 664.9,313.6 665.0,314.1 665.1,314.5 665.2,314.7 665.3,314.9 665.4,314.9 665.5,314.9 665.6,314.7 665.7,314.4 665.8,314.1 665.9,313.6 666.0,313.0 666.1,312.2 666.2,311.4 666.3,310.5 666.4,309.4 666.5,308.3 666.6,307.0 666.7,305.7 666.8,304.2 666.9,302.7 667.0,301.0 667.1,299.3 667.2,297.5 667.3,295.5 667.4,293.5 667.5,291.4 667.6,289.3 667.7,287.0 667.8,284.7 667.9,282.3 668.0,279.8 668.1,277.3 668.2,274.7 668.3,272.1 668.4,269.4 668.5,266.6 668.6,263.8 668.7,261.0 668.8,258.1 668.9,255.2 669.0,252.3 669.1,249.3 669.2,246.3 669.3,243.4 669.4,240.4 669.5,237.4 669.6,234.4 669.7,231.4 669.8,228.4 669.9,225.4 670.0,222.4 670.1,219.5 670.2,216.6 670.3,213.8 670.4,210.9 670.5,208.1 670.6,205.4 670.7,202.7 670.8,200.1 670.9,197.5 671.0,195.0 671.1,192.6 671.2,190.2 671.3,187.9 671.4,185.7 671.5,183.6 671.6,181.6 671.7,179.7 671.8,177.8 671.9,176.1 672.0,174.4 672.1,172.9 672.2,171.5 672.3,170.2 672.4,169.0 672.5,167.9 672.6,166.9 672.7,166.1 672.8,165.4 672.9,164.8 673.0,164.3 673.1,164.0 673.2,163.7 673.3,163.7 673.4,163.7 673.5,163.9 673.6,164.1 673.7,164.6 673.8,165.1 673.9,165.8 674.0,166.6 674.1,167.5 674.2,168.6 674.3,169.8 674.4,171.1 674.5,172.5 674.6,174.0 674.7,175.7 674.8,177.4 674.9,179.3 675.0,181.3 675.1,183.4 675.2,185.5 675.3,187.8 675.4,190.2 675.5,192.7 675.6,195.2 675.7,197.8 675.8,200.5 675.9,203.3 676.0,206.2 676.1,209.1 676.2,212.0 676.3,215.0 676.4,218.1 676.5,221.2 676.6,224.3 676.7,227.5 676.8,230.7 676.9,233.9 677.0,237.1 677.1,240.3 677.2,243.6 677.3,246.8 677.4,250.0 677.5,253.2 677.6,256.4 677.7,259.5 677.8,262.6 677.9,265.7 678.0,268.7 678.1,271.7 678.2,274.6 678.3,277.5 678.4,280.3 678.5,283.0 678.6,285.6 678.7,288.2 678.8,290.6 678.9,293.0 679.0,295.3 679.1,297.4 679.2,299.5 679.3,301.4 679.4,303.2 679.5,304.9 679.6,306.5 679.7,308.0 679.8,309.3 679.9,310.5 680.0,311.5 680.1,312.5 680.2,313.2 680.3,313.9 680.4,314.4 680.5,314.7 680.6,314.9 680.7,314.9 680.8,314.9 680.9,314.6 681.0,314.2 681.1,313.7 681.2,313.0 681.3,312.1 681.4,311.2 681.5,310.0 681.6,308.8 681.7,307.4 681.8,305.8 681.9,304.2 682.0,302.4 682.1,300.4 682.2,298.4 682.3,296.2 682.4,293.9 682.5,291.5 682.6,289.0 682.7,286.3 682.8,283.6 682.9,280.8 683.0,277.9 683.1,274.9 683.2,271.9 683.3,268.7 683.4,265.6 683.5,262.3 683.6,259.0 683.7,255.7 683.8,252.3 683.9,248.9 684.0,245.5 684.1,242.0 684.2,238.5 684.3,235.1 684.4,231.6 684.5,228.2 684.6,224.8 684.7,221.4 684.8,218.0 684.9,214.7 685.0,211.4 685.1,208.2 685.2,205.1 685.3,202.0 685.4,199.0 685.5,196.1 685.6,193.3 685.7,190.5 685.8,187.9 685.9,185.4 686.0,183.0 686.1,180.7 686.2,178.5 686.3,176.5 686.4,174.6 686.5,172.8 686.6,171.2 686.7,169.7 686.8,168.4 686.9,167.3 687.0,166.3 687.1,165.4 687.2,164.7 687.3,164.2 687.4,163.9 687.5,163.7 687.6,163.7 687.7,163.8 687.8,164.1 687.9,164.6 688.0,165.3 688.1,166.1 688.2,167.1 688.3,168.3 688.4,169.6 688.5,171.1 688.6,172.7 688.7,174.5 688.8,176.4 688.9,178.5 689.0,180.7 689.1,183.1 689.2,185.6 689.3,188.2 689.4,190.9 689.5,193.8 689.6,196.7 689.7,199.8 689.8,203.0 689.9,206.2 690.0,209.5 690.1,212.9 690.2,216.4 690.3,219.9 690.4,223.5 690.5,227.1 690.6,230.7 690.7,234.4 690.8,238.1 690.9,241.8 691.0,245.4 691.1,249.1 691.2,252.8 691.3,256.4 691.4,260.0 691.5,263.5 691.6,267.0 691.7,270.4 691.8,273.8 691.9,277.1 692.0,280.2 692.1,283.3 692.2,286.3 692.3,289.2 692.4,291.9 692.5,294.5 692.6,297.0 692.7,299.4 692.8,301.6 692.9,303.7 693.0,305.6 693.1,307.3 693.2,308.9 693.3,310.3 693.4,311.5 693.5,312.5 693.6,313.4 693.7,314.1 693.8,314.5 693.9,314.8 694.0,314.9 694.1,314.9 694.2,314.6 694.3,314.1 694.4,313.5 694.5,312.6 694.6,311.6 694.7,310.4 694.8,309.0 694.9,307.4 695.0,305.7 695.1,303.7 695.2,301.6 695.3,299.4 695.4,296.9 695.5,294.4 695.6,291.7 695.7,288.8 695.8,285.8 695.9,282.7 696.0,279.5 696.1,276.2 696.2,272.7 696.3,269.2 696.4,265.6 696.5,261.9 696.6,258.2 696.7,254.4 696.8,250.5 696.9,246.6 697.0,242.7 697.1,238.8 697.2,234.9 697.3,231.0 697.4,227.1 697.5,223.3 697.6,219.4 697.7,215.7 697.8,212.0 697.9,208.3 698.0,204.8 698.1,201.3 698.2,197.9 698.3,194.7 698.4,191.5 698.5,188.5 698.6,185.6 698.7,182.9 698.8,180.3 698.9,177.9 699.0,175.7 699.1,173.6 699.2,171.7 699.3,170.0 699.4,168.5 699.5,167.2 699.6,166.1 699.7,165.2 699.8,164.5 699.9,164.0 700.0,163.7 700.1,163.7 700.2,163.8 700.3,164.2 700.4,164.8 700.5,165.5 700.6,166.6 700.7,167.8 700.8,169.2 700.9,170.8 701.0,172.6 701.1,174.7 701.2,176.9 701.3,179.3 701.4,181.8 701.5,184.6 701.6,187.5 701.7,190.5 701.8,193.7 701.9,197.1 702.0,200.5 702.1,204.1 702.2,207.8 702.3,211.6 702.4,215.5 702.5,219.4 702.6,223.4 702.7,227.5 702.8,231.6 702.9,235.7 703.0,239.8 703.1,244.0 703.2,248.1 703.3,252.2 703.4,256.3 703.5,260.3 703.6,264.3 703.7,268.2 703.8,272.0 703.9,275.7 704.0,279.3 704.1,282.8 704.2,286.2 704.3,289.4 704.4,292.5 704.5,295.4 704.6,298.1 704.7,300.7 704.8,303.0 704.9,305.2 705.0,307.2 705.1,308.9 705.2,310.5 705.3,311.8 705.4,312.9 705.5,313.8 705.6,314.4 705.7,314.8 705.8,314.9 705.9,314.9 706.0,314.5 706.1,314.0 706.2,313.2 706.3,312.1 706.4,310.9 706.5,309.4 706.6,307.6 706.7,305.7 706.8,303.5 706.9,301.2 707.0,298.6 707.1,295.8 707.2,292.9 707.3,289.7 707.4,286.4 707.5,283.0 707.6,279.3 707.7,275.6 707.8,271.7 707.9,267.8 708.0,263.7 708.1,259.5 708.2,255.3 708.3,251.0 708.4,246.7 708.5,242.3 708.6,238.0 708.7,233.6 708.8,229.2 708.9,224.9 709.0,220.6 709.1,216.4 709.2,212.3 709.3,208.2 709.4,204.2 709.5,200.4 709.6,196.7 709.7,193.1 709.8,189.7 709.9,186.4 710.0,183.4 710.1,180.5 710.2,177.8 710.3,175.3 710.4,173.0 710.5,171.0 710.6,169.2 710.7,167.7 710.8,166.3 710.9,165.3 711.0,164.5 711.1,164.0 711.2,163.7 711.3,163.7 711.4,163.9 711.5,164.5 711.6,165.3 711.7,166.3 711.8,167.6 711.9,169.2 712.0,171.0 712.1,173.1 712.2,175.4 712.3,177.9 712.4,180.7 712.5,183.7 712.6,186.8 712.7,190.2 712.8,193.8 712.9,197.5 713.0,201.3 713.1,205.4 713.2,209.5 713.3,213.8 713.4,218.1 713.5,222.6 713.6,227.1 713.7,231.6 713.8,236.2 713.9,240.8 714.0,245.4 714.1,250.0 714.2,254.5 714.3,259.0 714.4,263.4 714.5,267.8 714.6,272.0 714.7,276.1 714.8,280.1 714.9,283.9 715.0,287.6 715.1,291.1 715.2,294.4 715.3,297.5 715.4,300.3 715.5,303.0 715.6,305.4 715.7,307.5 715.8,309.4 715.9,311.1 716.0,312.4 716.1,313.5 716.2,314.2 716.3,314.7 716.4,314.9 716.5,314.9 716.6,314.5 716.7,313.8 716.8,312.8 716.9,311.6 717.0,310.0 717.1,308.2 717.2,306.1 717.3,303.7 717.4,301.1 717.5,298.2 717.6,295.1 717.7,291.8 717.8,288.3 717.9,284.5 718.0,280.6 718.1,276.5 718.2,272.3 718.3,267.9 718.4,263.4 718.5,258.8 718.6,254.1 718.7,249.3 718.8,244.5 718.9,239.7 719.0,234.9 719.1,230.1 719.2,225.3 719.3,220.6 719.4,215.9 719.5,211.3 719.6,206.9 719.7,202.6 719.8,198.4 719.9,194.4 720.0,190.5 720.1,186.9 720.2,183.5 720.3,180.3 720.4,177.4 720.5,174.7 720.6,172.3 720.7,170.1 720.8,168.3 720.9,166.7 721.0,165.5 721.1,164.6 721.2,164.0 721.3,163.7 721.4,163.7 721.5,164.1 721.6,164.7 721.7,165.7 721.8,167.1 721.9,168.7 722.0,170.6 722.1,172.9 722.2,175.4 722.3,178.2 722.4,181.3 722.5,184.6 722.6,188.2 722.7,192.0 722.8,196.0 722.9,200.2 723.0,204.5 723.1,209.1 723.2,213.8 723.3,218.6 723.4,223.4 723.5,228.4 723.6,233.4 723.7,238.5 723.8,243.5 723.9,248.6 724.0,253.6 724.1,258.5 724.2,263.4 724.3,268.2 724.4,272.8 724.5,277.3 724.6,281.6 724.7,285.7 724.8,289.7 724.9,293.4 725.0,296.8 725.1,300.0 725.2,302.9 725.3,305.6 725.4,307.9 725.5,309.9 725.6,311.6 725.7,312.9 725.8,313.9 725.9,314.6 726.0,314.9 726.1,314.9 726.2,314.5 726.3,313.7 726.4,312.7 726.5,311.2 726.6,309.4 726.7,307.3 726.8,304.9 726.9,302.1 727.0,299.1 727.1,295.7 727.2,292.1 727.3,288.2 727.4,284.1 727.5,279.8 727.6,275.3 727.7,270.6 727.8,265.7 727.9,260.7 728.0,255.6 728.1,250.4 728.2,245.2 728.3,239.9 728.4,234.6 728.5,229.4 728.6,224.1 728.7,219.0 728.8,213.9 728.9,209.0 729.0,204.2 729.1,199.6 729.2,195.1 729.3,190.9 729.4,186.9 729.5,183.2 729.6,179.8 729.7,176.6 729.8,173.8 729.9,171.3 730.0,169.1 730.1,167.3 730.2,165.8 730.3,164.7 730.4,164.0 730.5,163.7 730.6,163.7 730.7,164.2 730.8,165.0 730.9,166.2 731.0,167.8 731.1,169.8 731.2,172.1 731.3,174.7 731.4,177.7 731.5,181.1 731.6,184.7 731.7,188.6 731.8,192.8 731.9,197.2 732.0,201.9 732.1,206.7 732.2,211.8 732.3,216.9 732.4,222.3 732.5,227.7 732.6,233.1 732.7,238.6 732.8,244.1 732.9,249.6 733.0,255.1 733.1,260.4 733.2,265.7 733.3,270.8 733.4,275.8 733.5,280.5 733.6,285.1 733.7,289.4 733.8,293.4 733.9,297.2 734.0,300.6 734.1,303.7 734.2,306.5 734.3,308.9 734.4,310.9 734.5,312.5 734.6,313.7 734.7,314.5 734.8,314.9 734.9,314.9 735.0,314.4 735.1,313.6 735.2,312.3 735.3,310.6 735.4,308.5 735.5,306.1 735.6,303.2 735.7,300.0 735.8,296.5 735.9,292.6 736.0,288.4 736.1,283.9 736.2,279.2 736.3,274.2 736.4,269.1 736.5,263.7 736.6,258.3 736.7,252.7 736.8,247.0 736.9,241.3 737.0,235.5 737.1,229.8 737.2,224.1 737.3,218.5 737.4,213.0 737.5,207.7 737.6,202.5 737.7,197.6 737.8,192.9 737.9,188.5 738.0,184.3 738.1,180.5 738.2,177.0 738.3,173.9 738.4,171.2 738.5,168.8 738.6,166.9 738.7,165.4 738.8,164.4 738.9,163.8 739.0,163.7 739.1,164.0 739.2,164.7 739.3,165.9 739.4,167.6 739.5,169.7 739.6,172.2 739.7,175.1 739.8,178.4 739.9,182.1 740.0,186.2 740.1,190.5 740.2,195.2 740.3,200.2 740.4,205.3 740.5,210.8 740.6,216.3 740.7,222.1 740.8,227.9 740.9,233.9 741.0,239.8 741.1,245.8 741.2,251.7 741.3,257.6 741.4,263.3 741.5,269.0 741.6,274.4 741.7,279.6 741.8,284.5 741.9,289.2 742.0,293.6 742.1,297.6 742.2,301.3 742.3,304.5 742.4,307.4 742.5,309.8 742.6,311.8 742.7,313.3 742.8,314.3 742.9,314.9 743.0,314.9 743.1,314.5 743.2,313.6 743.3,312.2 743.4,310.3 743.5,307.9 743.6,305.1 743.7,301.9 743.8,298.3 743.9,294.2 744.0,289.8 744.1,285.1 744.2,280.0 744.3,274.7 744.4,269.1 744.5,263.4 744.6,257.4 744.7,251.4 744.8,245.2 744.9,239.0 745.0,232.8 745.1,226.7 745.2,220.6 745.3,214.6 745.4,208.8 745.5,203.2 745.6,197.9 745.7,192.8 745.8,188.0 745.9,183.6 746.0,179.6 746.1,175.9 746.2,172.7 746.3,170.0 746.4,167.7 746.5,165.9 746.6,164.6 746.7,163.9 746.8,163.7 746.9,163.9 747.0,164.8 747.1,166.1 747.2,168.0 747.3,170.3 747.4,173.2 747.5,176.5 747.6,180.2 747.7,184.4 747.8,189.0 747.9,193.9 748.0,199.2 748.1,204.8 748.2,210.6 748.3,216.6 748.4,222.8 748.5,229.1 748.6,235.5 748.7,241.9 748.8,248.3 748.9,254.7 749.0,260.9 749.1,267.0 749.2,272.9 749.3,278.6 749.4,284.0 749.5,289.0 749.6,293.7 749.7,298.0 749.8,301.9 749.9,305.3 750.0,308.3 750.1,310.7 750.2,312.6 750.3,313.9 750.4,314.7 750.5,314.9 750.6,314.6 750.7,313.7 750.8,312.3 750.9,310.2 751.0,307.7 751.1,304.6 751.2,301.1 751.3,297.0 751.4,292.5 751.5,287.7 751.6,282.4 751.7,276.8 751.8,270.9 751.9,264.8 752.0,258.4 752.1,251.9 752.2,245.3 752.3,238.7 752.4,232.0 752.5,225.4 752.6,218.9 752.7,212.6 752.8,206.4 752.9,200.6 753.0,195.0 753.1,189.7 753.2,184.8 753.3,180.4 753.4,176.4 753.5,172.9 753.6,170.0 753.7,167.5 753.8,165.7 753.9,164.4 754.0,163.8 754.1,163.7 754.2,164.2 754.3,165.4 754.4,167.1 754.5,169.5 754.6,172.4 754.7,175.8 754.8,179.8 754.9,184.2 755.0,189.1 755.1,194.4 755.2,200.1 755.3,206.1 755.4,212.4 755.5,218.9 755.6,225.6 755.7,232.4 755.8,239.3 755.9,246.2 756.0,253.0 756.1,259.7 756.2,266.3 756.3,272.6 756.4,278.7 756.5,284.4 756.6,289.8 756.7,294.8 756.8,299.2 756.9,303.2 757.0,306.7 757.1,309.6 757.2,311.8 757.3,313.5 757.4,314.5 757.5,314.9 757.6,314.7 757.7,313.8 757.8,312.3 757.9,310.1 758.0,307.3 758.1,303.9 758.2,300.0 758.3,295.5 758.4,290.6 758.5,285.2 758.6,279.3 758.7,273.2 758.8,266.7 758.9,260.0 759.0,253.1 759.1,246.0 759.2,238.9 759.3,231.8 759.4,224.8 759.5,217.8 759.6,211.1 759.7,204.6 759.8,198.4 759.9,192.6 760.0,187.2 760.1,182.2 760.2,177.8 760.3,173.9 760.4,170.5 760.5,167.9 760.6,165.8 760.7,164.4 760.8,163.7 760.9,163.7 761.0,164.4 761.1,165.8 761.2,167.8 761.3,170.5 761.4,173.9 761.5,177.8 761.6,182.3 761.7,187.4 761.8,192.9 761.9,198.9 762.0,205.3 762.1,211.9 762.2,218.9 762.3,226.0 762.4,233.3 762.5,240.6 762.6,248.0 762.7,255.2 762.8,262.3 762.9,269.2 763.0,275.9 763.1,282.1 763.2,288.0 763.3,293.4 763.4,298.3 763.5,302.7 763.6,306.4 763.7,309.5 763.8,311.9 763.9,313.7 764.0,314.7 764.1,314.9 764.2,314.5 764.3,313.3 764.4,311.4 764.5,308.7 764.6,305.4 764.7,301.5 764.8,296.9 764.9,291.8 765.0,286.1 765.1,280.0 765.2,273.4 765.3,266.5 765.4,259.4 765.5,252.0 765.6,244.5 765.7,236.9 765.8,229.4 765.9,221.9 766.0,214.6 766.1,207.6 766.2,200.8 766.3,194.5 766.4,188.6 766.5,183.2 766.6,178.3 766.7,174.1 766.8,170.6 766.9,167.7 767.0,165.6 767.1,164.3 767.2,163.7 767.3,163.9 767.4,164.8 767.5,166.6 767.6,169.1 767.7,172.3 767.8,176.2 767.9,180.8 768.0,186.0 768.1,191.8 768.2,198.1 768.3,204.8 768.4,211.9 768.5,219.3 768.6,226.9 768.7,234.6 768.8,242.4 768.9,250.2 769.0,257.9 769.1,265.3 769.2,272.5 769.3,279.4 769.4,285.8 769.5,291.7 769.6,297.1 769.7,301.9 769.8,305.9 769.9,309.3 770.0,311.9 770.1,313.7 770.2,314.7 770.3,314.9 770.4,314.3 770.5,312.8 770.6,310.5 770.7,307.5 770.8,303.6 770.9,299.1 771.0,293.9 771.1,288.1 771.2,281.7 771.3,274.9 771.4,267.6 771.5,260.1 771.6,252.3 771.7,244.3 771.8,236.3 771.9,228.3 772.0,220.4 772.1,212.7 772.2,205.3 772.3,198.3 772.4,191.8 772.5,185.8 772.6,180.4 772.7,175.6 772.8,171.6 772.9,168.4 773.0,166.0 773.1,164.4 773.2,163.7 773.3,163.9 773.4,164.9 773.5,166.8 773.6,169.5 773.7,173.1 773.8,177.5 773.9,182.5 774.0,188.3 774.1,194.6 774.2,201.5 774.3,208.8 774.4,216.5 774.5,224.5 774.6,232.7 774.7,240.9 774.8,249.2 774.9,257.3 775.0,265.2 775.1,272.8 775.2,280.0 775.3,286.8 775.4,292.9 775.5,298.5 775.6,303.3 775.7,307.3 775.8,310.6 775.9,312.9 776.0,314.4 776.1,314.9 776.2,314.6 776.3,313.3 776.4,311.1 776.5,308.0 776.6,304.0 776.7,299.3 776.8,293.8 776.9,287.6 777.0,280.8 777.1,273.5 777.2,265.8 777.3,257.7 777.4,249.4 777.5,240.9 777.6,232.4 777.7,224.0 777.8,215.8 777.9,207.9 778.0,200.3 778.1,193.3 778.2,186.8 778.3,181.0 778.4,175.9 778.5,171.7 778.6,168.3 778.7,165.8 778.8,164.2 778.9,163.7 779.0,164.1 779.1,165.4 779.2,167.8 779.3,171.0 779.4,175.2 779.5,180.2 779.6,185.9 779.7,192.4 779.8,199.5 779.9,207.1 780.0,215.2 780.1,223.6 780.2,232.2 780.3,240.9 780.4,249.6 780.5,258.1 780.6,266.5 780.7,274.4 780.8,281.9 780.9,288.9 781.0,295.1 781.1,300.7 781.2,305.4 781.3,309.2 781.4,312.1 781.5,314.0 781.6,314.9 781.7,314.7 781.8,313.6 781.9,311.4 782.0,308.2 782.1,304.1 782.2,299.1 782.3,293.2 782.4,286.6 782.5,279.4 782.6,271.6 782.7,263.3 782.8,254.7 782.9,245.8 783.0,236.9 783.1,228.0 783.2,219.2 783.3,210.7 783.4,202.7 783.5,195.1 783.6,188.1 783.7,181.8 783.8,176.4 783.9,171.9 784.0,168.3 784.1,165.7 784.2,164.1 784.3,163.7 784.4,164.3 784.5,166.0 784.6,168.7 784.7,172.5 784.8,177.2 784.9,182.9 785.0,189.3 785.1,196.5 785.2,204.4 785.3,212.7 785.4,221.4 785.5,230.5 785.6,239.6 785.7,248.8 785.8,257.8 785.9,266.5 786.0,274.9 786.1,282.8 786.2,290.0 786.3,296.4 786.4,302.0 786.5,306.7 786.6,310.4 786.7,313.0 786.8,314.5 786.9,314.9 787.0,314.2 787.1,312.3 787.2,309.3 787.3,305.3 787.4,300.2 787.5,294.2 787.6,287.4 787.7,279.8 787.8,271.6 787.9,262.9 788.0,253.8 788.1,244.5 788.2,235.1 788.3,225.8 788.4,216.6 788.5,207.8 788.6,199.5 788.7,191.8 788.8,184.9 788.9,178.7 789.0,173.5 789.1,169.4 789.2,166.3 789.3,164.4 789.4,163.7 789.5,164.1 789.6,165.8 789.7,168.6 789.8,172.5 789.9,177.5 790.0,183.5 790.1,190.4 790.2,198.1 790.3,206.5 790.4,215.4 790.5,224.7 790.6,234.2 790.7,243.8 790.8,253.4 790.9,262.7 791.0,271.7 791.1,280.1 791.2,287.9 791.3,294.9 791.4,301.0 791.5,306.1 791.6,310.1 791.7,312.9 791.8,314.6 791.9,314.9 792.0,314.0 792.1,311.9 792.2,308.6 792.3,304.1 792.4,298.5 792.5,291.9 792.6,284.4 792.7,276.2 792.8,267.3 792.9,258.0 793.0,248.3 793.1,238.5 793.2,228.7 793.3,219.0 793.4,209.7 793.5,200.9 793.6,192.7 793.7,185.3 793.8,178.8 793.9,173.4 794.0,169.1 794.1,166.0 794.2,164.2 794.3,163.7 794.4,164.4 794.5,166.5 794.6,169.9 794.7,174.5 794.8,180.2 794.9,186.9 795.0,194.6 795.1,203.1 795.2,212.2 795.3,221.8 795.4,231.8 795.5,241.9 795.6,251.9 795.7,261.7 795.8,271.1 795.9,280.0 796.0,288.2 796.1,295.4 796.2,301.7 796.3,306.9 796.4,310.8 796.5,313.5 796.6,314.8 796.7,314.7 796.8,313.3 796.9,310.5 797.0,306.5 797.1,301.1 797.2,294.7 797.3,287.2 797.4,278.9 797.5,269.7 797.6,260.1 797.7,250.0 797.8,239.7 797.9,229.4 798.0,219.3 798.1,209.6 798.2,200.4 798.3,191.9 798.4,184.3 798.5,177.7 798.6,172.2 798.7,168.1 798.8,165.3 798.9,163.8 799.0,163.8 799.1,165.3 799.2,168.1 799.3,172.3 799.4,177.8 799.5,184.5 799.6,192.2 799.7,200.9 799.8,210.3 799.9,220.3 800.0,230.6 800.1,241.1 800.2,251.6 800.3,261.9 800.4,271.7 800.5,280.9 800.6,289.4 800.7,296.8 800.8,303.1 800.9,308.2 801.0,311.9 801.1,314.1 801.2,314.9 801.3,314.2 801.4,312.1 801.5,308.4 801.6,303.4 801.7,297.1 801.8,289.6 801.9,281.1 802.0,271.8 802.1,261.8 802.2,251.3 802.3,240.6 802.4,229.9 802.5,219.3 802.6,209.1 802.7,199.5 802.8,190.8 802.9,183.0 803.0,176.4 803.1,171.0 803.2,167.1 803.3,164.6 803.4,163.7 803.5,164.3 803.6,166.5 803.7,170.2 803.8,175.3 803.9,181.8 804.0,189.5 804.1,198.3 804.2,207.9 804.3,218.2 804.4,228.9 804.5,239.9 804.6,250.8 804.7,261.5 804.8,271.8 804.9,281.4 805.0,290.1 805.1,297.7 805.2,304.1 805.3,309.1 805.4,312.6 805.5,314.6 805.6,314.9 805.7,313.6 805.8,310.6 805.9,306.2 806.0,300.2 806.1,293.0 806.2,284.6 806.3,275.1 806.4,264.9 806.5,254.1 806.6,243.0 806.7,231.8 806.8,220.7 806.9,210.0 807.0,200.0 807.1,190.8 807.2,182.7 807.3,175.9 807.4,170.5 807.5,166.6 807.6,164.3 807.7,163.7 807.8,164.8 807.9,167.5 808.0,171.9 808.1,177.9 808.2,185.2 808.3,193.7 808.4,203.3 808.5,213.8 808.6,224.8 808.7,236.1 808.8,247.6 808.9,258.8 809.0,269.7 809.1,279.8 809.2,289.0 809.3,297.1 809.4,303.8 809.5,309.1 809.6,312.7 809.7,314.6 809.8,314.8 809.9,313.2 810.0,309.9 810.1,304.9 810.2,298.3 810.3,290.4 810.4,281.2 810.5,271.1 810.6,260.2 810.7,248.7 810.8,237.1 810.9,225.5 811.0,214.2 811.1,203.5 811.2,193.6 811.3,184.8 811.4,177.4 811.5,171.4 811.6,167.0 811.7,164.4 811.8,163.7 811.9,164.7 812.0,167.6 812.1,172.2 812.2,178.5 812.3,186.2 812.4,195.3 812.5,205.5 812.6,216.5 812.7,228.1 812.8,239.9 812.9,251.8 813.0,263.4 813.1,274.4 813.2,284.5 813.3,293.5 813.4,301.1 813.5,307.2 813.6,311.6 813.7,314.2 813.8,314.9 813.9,313.7 814.0,310.6 814.1,305.7 814.2,299.1 814.3,291.0 814.4,281.6 814.5,271.0 814.6,259.7 814.7,247.8 814.8,235.7 814.9,223.6 815.0,212.0 815.1,201.0 815.2,191.0 815.3,182.3 815.4,175.1 815.5,169.5 815.6,165.7 815.7,163.8 815.8,164.0 815.9,166.1 816.0,170.1 816.1,176.0 816.2,183.5 816.3,192.5 816.4,202.8 816.5,214.0 816.6,226.0 816.7,238.2 816.8,250.6 816.9,262.6 817.0,274.1 817.1,284.6 817.2,293.9 817.3,301.7 817.4,307.9 817.5,312.2 817.6,314.5 817.7,314.8 817.8,313.1 817.9,309.3 818.0,303.6 818.1,296.1 818.2,287.1 818.3,276.8 818.4,265.4 818.5,253.3 818.6,240.8 818.7,228.2 818.8,215.9 818.9,204.3 819.0,193.6 819.1,184.2 819.2,176.3 819.3,170.2 819.4,166.0 819.5,163.9 819.6,163.9 819.7,166.0 819.8,170.2 819.9,176.4 820.0,184.4 820.1,193.9 820.2,204.7 820.3,216.5 820.4,229.0 820.5,241.8 820.6,254.6 820.7,266.9 820.8,278.4 820.9,288.8 821.0,297.8 821.1,305.1 821.2,310.5 821.3,313.8 821.4,314.9 821.5,313.9 821.6,310.7 821.7,305.3 821.8,298.0 821.9,289.0 822.0,278.5 822.1,266.9 822.2,254.4 822.3,241.4 822.4,228.4 822.5,215.7 822.6,203.6 822.7,192.7 822.8,183.1 822.9,175.2 823.0,169.2 823.1,165.3 823.2,163.7 823.3,164.3 823.4,167.3 823.5,172.4 823.6,179.5 823.7,188.5 823.8,199.0 823.9,210.8 824.0,223.5 824.1,236.6 824.2,249.9 824.3,262.8 824.4,275.1 824.5,286.2 824.6,295.9 824.7,303.8 824.8,309.8 824.9,313.5 825.0,314.9 825.1,314.0 825.2,310.7 825.3,305.2 825.4,297.6 825.5,288.1 825.6,277.1 825.7,264.9 825.8,251.8 825.9,238.4 826.0,225.0 826.1,212.0 826.2,199.8 826.3,189.0 826.4,179.7 826.5,172.3 826.6,167.1 826.7,164.2 826.8,163.8 826.9,165.8 827.0,170.1 827.1,176.8 827.2,185.5 827.3,195.9 827.4,207.8 827.5,220.7 827.6,234.3 827.7,248.0 827.8,261.4 827.9,274.2 828.0,285.8 828.1,295.8 828.2,304.0 828.3,310.1 828.4,313.7 828.5,314.9 828.6,313.6 828.7,309.8 828.8,303.6 828.9,295.2 829.0,285.0 829.1,273.1 829.2,260.2 829.3,246.5 829.4,232.5 829.5,218.8 829.6,205.7 829.7,193.8 829.8,183.4 829.9,175.0 830.0,168.7 830.1,164.9 830.2,163.7 830.3,165.0 830.4,168.9 830.5,175.3 830.6,183.9 830.7,194.5 830.8,206.6 830.9,219.9 831.0,233.9 831.1,248.1 831.2,261.9 831.3,275.0 831.4,286.9 831.5,297.1 831.6,305.2 831.7,311.0 831.8,314.3 831.9,314.8 832.0,312.7 832.1,308.0 832.2,300.7 832.3,291.3 832.4,280.0 832.5,267.2 832.6,253.4 832.7,239.0 832.8,224.7 832.9,210.9 833.0,198.0 833.1,186.7 833.2,177.3 833.3,170.2 833.4,165.6 833.5,163.7 833.6,164.6 833.7,168.2 833.8,174.5 833.9,183.2 834.0,194.0 834.1,206.5 834.2,220.2 834.3,234.6 834.4,249.3 834.5,263.5 834.6,276.9 834.7,288.9 834.8,299.0 834.9,306.9 835.0,312.2 835.1,314.7 835.2,314.4 835.3,311.3 835.4,305.3 835.5,296.9 835.6,286.2 835.7,273.8 835.8,259.9 835.9,245.3 836.0,230.5 836.1,215.9 836.2,202.3 836.3,190.1 836.4,179.7 836.5,171.7 836.6,166.4 836.7,163.8 836.8,164.3 836.9,167.6 837.0,173.8 837.1,182.6 837.2,193.7 837.3,206.5 837.4,220.7 837.5,235.6 837.6,250.7 837.7,265.3 837.8,278.9 837.9,291.0 838.0,300.9 838.1,308.5 838.2,313.2 838.3,314.9 838.4,313.6 838.5,309.3 838.6,302.2 838.7,292.5 838.8,280.6 838.9,267.0 839.0,252.2 839.1,237.0 839.2,221.8 839.3,207.3 839.4,194.1 839.5,182.8 839.6,173.8 839.7,167.5 839.8,164.1 839.9,164.0 840.0,166.9 840.1,172.9 840.2,181.6 840.3,192.8 840.4,206.0 840.5,220.5 840.6,235.9 840.7,251.4 840.8,266.4 840.9,280.3 841.0,292.5 841.1,302.4 841.2,309.6 841.3,313.9 841.4,314.9 841.5,312.7 841.6,307.3 841.7,299.0 841.8,288.2 841.9,275.2 842.0,260.6 842.1,245.1 842.2,229.3 842.3,214.0 842.4,199.7 842.5,187.2 842.6,176.9 842.7,169.4 842.8,164.9 842.9,163.7 843.0,165.8 843.1,171.2 843.2,179.6 843.3,190.7 843.4,203.9 843.5,218.8 843.6,234.5 843.7,250.5 843.8,266.0 843.9,280.3 844.0,292.8 844.1,302.9 844.2,310.1 844.3,314.1 844.4,314.8 844.5,312.0 844.6,305.9 844.7,296.7 844.8,284.9 844.9,271.0 845.0,255.7 845.1,239.6 845.2,223.4 845.3,208.0 845.4,194.0 845.5,182.1 845.6,172.8 845.7,166.6 845.8,163.8 845.9,164.5 846.0,168.7 846.1,176.3 846.2,186.7 846.3,199.7 846.4,214.6 846.5,230.6 846.6,247.0 846.7,263.1 846.8,278.1 846.9,291.3 847.0,302.0 847.1,309.7 847.2,314.0 847.3,314.8 847.4,311.9 847.5,305.6 847.6,296.0 847.7,283.7 847.8,269.2 847.9,253.3 848.0,236.7 848.1,220.2 848.2,204.6 848.3,190.6 848.4,179.1 848.5,170.5 848.6,165.3 848.7,163.7 848.8,165.8 848.9,171.6 849.0,180.7 849.1,192.8 849.2,207.1 849.3,223.1 849.4,239.9 849.5,256.7 849.6,272.7 849.7,287.0 849.8,298.9 849.9,307.8 850.0,313.2 850.1,314.9 850.2,312.8 850.3,307.0 850.4,297.7 850.5,285.4 850.6,270.8 850.7,254.5 850.8,237.4 850.9,220.5 851.0,204.4 851.1,190.2 851.2,178.5 851.3,169.9 851.4,164.9 851.5,163.7 851.6,166.5 851.7,173.1 851.8,183.2 851.9,196.2 852.0,211.5 852.1,228.2 852.2,245.6 852.3,262.6 852.4,278.5 852.5,292.2 852.6,303.2 852.7,310.8 852.8,314.6 852.9,314.3 853.0,310.1 853.1,302.0 853.2,290.6 853.3,276.4 853.4,260.2 853.5,242.9 853.6,225.3 853.7,208.5 853.8,193.4 853.9,180.7 854.0,171.2 854.1,165.4 854.2,163.7 854.3,166.1 854.4,172.5 854.5,182.6 854.6,195.8 854.7,211.5 854.8,228.7 854.9,246.5 855.0,263.9 855.1,280.0 855.2,293.8 855.3,304.6 855.4,311.8 855.5,314.8 855.6,313.7 855.7,308.3 855.8,299.1 855.9,286.4 856.0,271.1 856.1,254.0 856.2,236.0 856.3,218.2 856.4,201.5 856.5,187.1 856.6,175.5 856.7,167.7 856.8,163.9 856.9,164.5 857.0,169.4 857.1,178.4 857.2,190.9 857.3,206.2 857.4,223.5 857.5,241.6 857.6,259.7 857.7,276.6 857.8,291.3 857.9,303.0 858.0,311.0 858.1,314.7 858.2,314.0 858.3,308.8 858.4,299.6 858.5,286.7 858.6,271.0 858.7,253.4 858.8,234.9 858.9,216.7 859.0,199.9 859.1,185.3 859.2,174.0 859.3,166.7 859.4,163.7 859.5,165.3 859.6,171.4 859.7,181.6 859.8,195.4 859.9,211.8 860.0,229.9 860.1,248.7 860.2,266.8 860.3,283.3 860.4,297.1 860.5,307.4 860.6,313.4 860.7,314.9 860.8,311.6 860.9,303.9 861.0,292.1 861.1,277.0 861.2,259.6 861.3,240.8 861.4,222.0 861.5,204.2 861.6,188.6 861.7,176.2 861.8,167.8 861.9,163.9 862.0,164.8 862.1,170.4 862.2,180.4 862.3,194.3 862.4,211.0 862.5,229.5 862.6,248.7 862.7,267.3 862.8,284.1 862.9,298.0 863.0,308.1 863.1,313.8 863.2,314.7 863.3,310.6 863.4,301.9 863.5,289.1 863.6,273.0 863.7,254.7 863.8,235.3 863.9,216.2 864.0,198.6 864.1,183.7 864.2,172.4 864.3,165.6 864.4,163.7 864.5,166.8 864.6,174.7 864.7,187.0 864.8,202.8 864.9,221.1 865.0,240.6 865.1,260.0 865.2,278.1 865.3,293.5 865.4,305.3 865.5,312.6 865.6,314.9 865.7,312.1 865.8,304.3 865.9,292.1 866.0,276.2 866.1,257.7 866.2,238.0 866.3,218.4 866.4,200.1 866.5,184.6 866.6,172.9 866.7,165.7 866.8,163.7 866.9,166.9 867.0,175.2 867.1,188.0 867.2,204.4 867.3,223.3 867.4,243.3 867.5,263.1 867.6,281.2 867.7,296.3 867.8,307.4 867.9,313.7 868.0,314.7 868.1,310.3 868.2,300.8 868.3,286.9 868.4,269.6 868.5,250.0 868.6,229.7 868.7,210.1 868.8,192.5 868.9,178.4 869.0,168.6 869.1,164.0 869.2,164.8 869.3,171.1 869.4,182.4 869.5,197.9 869.6,216.5 869.7,236.7 869.8,257.1 869.9,276.3 870.0,292.7 870.1,305.2 870.2,312.8 870.3,314.9 870.4,311.4 870.5,302.5 870.6,288.9 870.7,271.5 870.8,251.7 870.9,230.9 871.0,210.8 871.1,192.8 871.2,178.3 871.3,168.4 871.4,163.9 871.5,165.1 871.6,172.0 871.7,184.1 871.8,200.4 871.9,219.7 872.0,240.5 872.1,261.3 872.2,280.3 872.3,296.3 872.4,307.8 872.5,314.0 872.6,314.4 872.7,309.0 872.8,298.1 872.9,282.6 873.0,263.7 873.1,242.8 873.2,221.7 873.3,201.9 873.4,185.1 873.5,172.5 873.6,165.3 873.7,163.9 873.8,168.5 873.9,178.7 874.0,193.8 874.1,212.6 874.2,233.5 874.3,254.9 874.4,275.1 874.5,292.4 874.6,305.4 874.7,313.1 874.8,314.8 874.9,310.4 875.0,300.1 875.1,284.9 875.2,266.0 875.3,244.8 875.4,223.2 875.5,202.9 875.6,185.5 875.7,172.6 875.8,165.2 875.9,163.9 876.0,168.9 876.1,179.7 876.2,195.6 876.3,215.0 876.4,236.6 876.5,258.3 876.6,278.5 876.7,295.5 876.8,307.7 876.9,314.1 877.0,314.2 877.1,308.0 877.2,295.9 877.3,279.0 877.4,258.7 877.5,236.7 877.6,214.9 877.7,195.2 877.8,179.3 877.9,168.5 878.0,163.8 878.1,165.6 878.2,173.9 878.3,187.8 878.4,206.1 878.5,227.4 878.6,249.8 878.7,271.2 878.8,289.9 878.9,304.2 879.0,312.7 879.1,314.8 879.2,310.3 879.3,299.4 879.4,283.2 879.5,263.1 879.6,240.9 879.7,218.5 879.8,197.9 879.9,181.1 880.0,169.4 880.1,164.0 880.2,165.3 880.3,173.4 880.4,187.3 880.5,206.0 880.6,227.8 880.7,250.6 880.8,272.4 880.9,291.2 881.0,305.3 881.1,313.3 881.2,314.6 881.3,309.0 881.4,296.9 881.5,279.5 881.6,258.4 881.7,235.5 881.8,212.9 881.9,192.8 882.0,177.0 882.1,166.9 882.2,163.7 882.3,167.5 882.4,178.0 882.5,194.3 882.6,214.9 882.7,237.8 882.8,260.9 882.9,281.9 883.0,298.9 883.1,310.3 883.2,314.9 883.3,312.3 883.4,302.7 883.5,287.0 883.6,266.8 883.7,243.9 883.8,220.5 883.9,198.9 884.0,181.2 884.1,169.1 884.2,163.8 884.3,165.9 884.4,175.1 884.5,190.6 884.6,210.9 884.7,233.9 884.8,257.6 884.9,279.4 885.0,297.3 885.1,309.5 885.2,314.8 885.3,312.6 885.4,303.1 885.5,287.2 885.6,266.6 885.7,243.2 885.8,219.4 885.9,197.5 886.0,179.9 886.1,168.2 886.2,163.7 886.3,166.8 886.4,177.3 886.5,194.0 886.6,215.4 886.7,239.3 886.8,263.1 886.9,284.6 887.0,301.4 887.1,311.9 887.2,314.9 887.3,310.1 887.4,298.1 887.5,279.9 887.6,257.5 887.7,233.2 887.8,209.5 887.9,188.9 888.0,173.5 888.1,165.0 888.2,164.3 888.3,171.5 888.4,185.7 888.5,205.7 888.6,229.2 888.7,253.8 888.8,276.9 888.9,296.0 889.0,309.1 889.1,314.8 889.2,312.4 889.3,302.2 889.4,285.2 889.5,263.3 889.6,238.8 889.7,214.3 889.8,192.5 889.9,175.7 890.0,165.9 890.1,163.9 890.2,170.2 890.3,184.1 890.4,204.0 890.5,227.7 890.6,252.8 890.7,276.4 890.8,295.9 890.9,309.2 891.0,314.8 891.1,312.1 891.2,301.2 891.3,283.5 891.4,260.8 891.5,235.7 891.6,211.0 891.7,189.4 891.8,173.4 891.9,164.8 892.0,164.6 892.1,172.8 892.2,188.6 892.3,210.1 892.4,234.9 892.5,260.3 892.6,283.3 892.7,301.3 892.8,312.2 892.9,314.8 893.0,308.7 893.1,294.6 893.2,274.1 893.3,249.6 893.4,223.9 893.5,199.9 893.6,180.5 893.7,167.9 893.8,163.7 893.9,168.2 894.0,181.1 894.1,200.8 894.2,225.1 894.3,251.0 894.4,275.6 894.5,295.9 894.6,309.6 894.7,314.9 894.8,311.2 894.9,299.0 895.0,279.6 895.1,255.4 895.2,229.3 895.3,204.3 895.4,183.5 895.5,169.4 895.6,163.7 895.7,167.2 895.8,179.4 895.9,198.9 896.0,223.3 896.1,249.7 896.2,274.8 896.3,295.6 896.4,309.6 896.5,314.9 896.6,311.0 896.7,298.2 896.8,278.1 896.9,253.2 897.0,226.6 897.1,201.5 897.2,181.1 897.3,167.9 897.4,163.7 897.5,168.9 897.6,182.9 897.7,204.0 897.8,229.6 897.9,256.5 898.0,281.2 898.1,300.6 898.2,312.2 898.3,314.6 898.4,307.5 898.5,291.6 898.6,269.0 898.7,242.6 898.8,215.8 898.9,191.9 899.0,174.2 899.1,164.8 899.2,165.0 899.3,174.9 899.4,193.1 899.5,217.3 899.6,244.5 899.7,270.9 899.8,293.3 899.9,308.6 900.0,314.9 900.1,311.2 900.2,298.0 900.3,277.1 900.4,251.1 900.5,223.6 900.6,198.1 900.7,178.1 900.8,166.2 900.9,164.1 901.0,172.0 901.1,188.9 901.2,212.6 901.3,240.0 901.4,267.2 901.5,290.7 901.6,307.3 901.7,314.7 901.8,311.8 901.9,299.1 902.0,278.2 902.1,252.0 902.2,224.0 902.3,198.1 902.4,177.8 902.5,166.0 902.6,164.2 902.7,172.9 902.8,190.7 902.9,215.3 903.0,243.2 903.1,270.6 903.2,293.7 903.3,309.2 903.4,314.9 903.5,310.1 903.6,295.2 903.7,272.5 903.8,245.1 903.9,216.8 904.0,191.7 904.1,173.3 904.2,164.3 904.3,166.0 904.4,178.1 904.5,198.9 904.6,225.6 904.7,254.3 904.8,280.8 904.9,301.4 905.0,313.0 905.1,314.0 905.2,304.2 905.3,284.9 905.4,259.0 905.5,230.2 905.6,202.7 905.7,180.5 905.8,166.9 905.9,164.0 906.0,172.0 906.1,190.1 906.2,215.4 906.3,244.2 906.4,272.4 906.5,295.7 906.6,310.6 906.7,314.9 906.8,307.9 906.9,290.7 907.0,265.7 907.1,236.8 907.2,208.2 907.3,184.2 907.4,168.6 907.5,163.7 907.6,170.2 907.7,187.2 907.8,212.2 907.9,241.3 908.0,270.1 908.1,294.3 908.2,310.0 908.3,314.9 908.4,308.2 908.5,290.8 908.6,265.4 908.7,236.0 908.8,207.1 908.9,183.1 909.0,167.9 909.1,163.8 909.2,171.5 909.3,189.8 909.4,215.9 909.5,245.7 909.6,274.5 909.7,297.8 909.8,311.9 909.9,314.5 910.0,305.1 910.1,285.3 910.2,258.2 910.3,228.0 910.4,199.6 910.5,177.5 910.6,165.3 910.7,165.0 910.8,176.7 910.9,198.5 911.0,226.9 911.1,257.4 911.2,284.9 911.3,305.0 911.4,314.5 911.5,311.7 911.6,297.0 911.7,272.9 911.8,243.2 911.9,212.9 912.0,186.9 912.1,169.5 912.2,163.7 912.3,170.3 912.4,188.5 912.5,215.1 912.6,245.8 912.7,275.4 912.8,299.0 912.9,312.6 913.0,313.9 913.1,302.7 913.2,280.7 913.3,251.8 913.4,220.7 913.5,192.7 913.6,172.6 913.7,163.9 913.8,168.0 913.9,184.3 914.0,210.0 914.1,240.8 914.2,271.3 914.3,296.4 914.4,311.6 914.5,314.4 914.6,304.1 914.7,282.6 914.8,253.6 914.9,222.0 915.0,193.4 915.1,172.8 915.2,163.9 915.3,168.1 915.4,184.9 915.5,211.3 915.6,242.6 915.7,273.4 915.8,298.2 915.9,312.5 916.0,313.9 916.1,301.9 916.2,278.8 916.3,248.6 916.4,216.7 916.5,188.8 916.6,170.0 916.7,163.7 916.8,171.0 916.9,190.6 917.0,219.1 917.1,251.3 917.2,281.3 917.3,303.7 917.4,314.4 917.5,311.3 917.6,295.0 917.7,268.5 917.8,236.6 917.9,205.1 918.0,180.0 918.1,165.7 918.2,165.1 918.3,178.3 918.4,202.9 918.5,234.2 918.6,266.5 918.7,293.8 918.8,310.9 918.9,314.5 919.0,304.0 919.1,281.3 919.2,250.6 919.3,217.8 919.4,189.0 919.5,169.7 919.6,163.7 919.7,172.1 919.8,193.3 919.9,223.4 920.0,256.5 920.1,286.4 920.2,307.2 920.3,314.9 920.4,308.1 920.5,287.9 920.6,258.3 920.7,224.9 920.8,194.4 920.9,172.5 921.0,163.7 921.1,169.7 921.2,189.4 921.3,218.8 921.4,252.4 921.5,283.4 921.6,305.7 921.7,314.8 921.8,309.0 921.9,289.4 922.0,259.7 922.1,225.9 922.2,194.8 922.3,172.6 922.4,163.7 922.5,170.0 922.6,190.3 922.7,220.5 922.8,254.5 922.9,285.5 923.0,307.1 923.1,314.9 923.2,307.4 923.3,285.9 923.4,254.9 923.5,220.6 923.6,190.2 923.7,169.8 923.8,163.7 923.9,173.3 924.0,196.5 924.1,228.5 924.2,262.9 924.3,292.4 924.4,310.8 924.5,314.3 924.6,302.2 924.7,276.8 924.8,243.5 924.9,209.4 925.0,181.5 925.1,165.8 925.2,165.6 925.3,181.1 925.4,208.9 925.5,243.3 925.6,276.8 925.7,302.3 925.8,314.4 925.9,310.4 926.0,291.1 926.1,260.6 926.2,225.6 926.3,193.4 926.4,171.2 926.5,163.7 926.6,172.6 926.7,196.1 926.8,229.0 926.9,264.2 927.0,294.0 927.1,311.8 927.2,313.7 927.3,299.2 927.4,271.5 927.5,236.7 927.6,202.4 927.7,176.2 927.8,164.1 927.9,168.7 928.0,189.0 928.1,220.6 928.2,256.5 928.3,288.4 928.4,309.4 928.5,314.6 928.6,302.8 928.7,276.7 928.8,242.0 928.9,206.7 929.0,178.8 929.1,164.6 929.2,167.5 929.3,186.8 929.4,218.1 929.5,254.3 929.6,287.1 929.7,308.9 929.8,314.7 929.9,303.0 930.0,276.6 930.1,241.5 930.2,205.8 930.3,177.9 930.4,164.4 930.5,168.3 930.6,188.9 930.7,221.3 930.8,258.0 930.9,290.3 931.0,310.6 931.1,314.1 931.2,299.8 931.3,271.2 931.4,234.9 931.5,199.7 931.6,173.9 931.7,163.7 931.8,171.6 931.9,195.8 932.0,230.5 932.1,267.3 932.2,297.4 932.3,313.5 932.4,311.6 932.5,292.1 932.6,259.8 932.7,222.4 932.8,189.2 932.9,168.1 933.0,164.5 933.1,179.3 933.2,208.8 933.3,245.9 933.4,281.4 933.5,306.5 933.6,314.9 933.7,304.6 933.8,278.0 933.9,241.8 934.0,204.8 934.1,176.5 934.2,163.9 934.3,170.3 934.4,194.0 934.5,229.1 934.6,266.9 934.7,297.7 934.8,313.7 934.9,310.9 935.0,289.8 935.1,255.8 935.2,217.6 935.3,184.9 935.4,166.1 935.5,166.1 935.6,185.0 935.7,217.9 935.8,256.3 935.9,290.4 936.0,311.3 936.1,313.4 936.2,296.3 936.3,264.3 936.4,225.7 936.5,190.7 936.6,168.4 936.7,164.7 936.8,180.6 936.9,212.1 937.0,250.8 937.1,286.4 937.2,309.6 937.3,314.2 937.4,298.8 937.5,267.5 937.6,228.6 937.7,192.6 937.8,169.1 937.9,164.4 938.0,179.9 938.1,211.5 938.2,250.5 938.3,286.6 938.4,309.9 938.5,314.0 938.6,297.7 938.7,265.5 938.8,226.1 938.9,190.3 939.0,167.9 939.1,165.1 939.2,182.7 939.3,216.0 939.4,255.8 939.5,291.0 939.6,311.9 939.7,312.6 939.8,292.9 939.9,258.3 940.0,218.3 940.1,184.1 940.2,165.4 940.3,167.5 940.4,189.8 940.5,226.1 940.6,266.2 940.7,298.7 940.8,314.3 940.9,308.7 941.0,283.2 941.1,245.2 941.2,205.5 941.3,175.4 941.4,163.7 941.5,173.6 941.6,202.5 941.7,242.1 941.8,280.9 941.9,307.6 942.0,314.6 942.1,299.6 942.2,267.1 942.3,226.4 942.4,189.5 942.5,167.1 942.6,165.9 942.7,186.3 942.8,222.3 942.9,263.4 943.0,297.4 943.1,314.2 943.2,308.7 943.3,282.6 943.4,243.6 943.5,203.2 943.6,173.6 943.7,163.7 943.8,176.4 943.9,208.1 944.0,249.2 944.1,287.4 944.2,311.0 944.3,312.9 944.4,292.5 944.5,255.8 944.6,214.1 944.7,180.1 944.8,164.1 944.9,171.2 945.0,199.2 945.1,239.6 945.2,279.9 945.3,307.7 945.4,314.4 945.5,297.8 945.6,263.0 945.7,220.8 945.8,184.4 945.9,165.0 946.0,168.9 946.1,194.9 946.2,234.8 946.3,276.2 946.4,306.0 946.5,314.7 946.6,299.6 946.7,265.4 946.8,222.8 946.9,185.5 947.0,165.3 947.1,168.7 947.2,194.7 947.3,235.1 947.4,276.8 947.5,306.5 947.6,314.6 947.7,298.3 947.8,262.9 947.9,219.9 948.0,183.1 948.1,164.5 948.2,170.4 948.3,198.7 948.4,240.4 948.5,281.7 948.6,309.2 948.7,313.6 948.8,293.6 948.9,255.6 949.0,212.2 949.1,177.7 949.2,163.7 949.3,174.8 949.4,207.5 949.5,250.8 949.6,290.3 949.7,312.7 949.8,310.5 949.9,284.3 950.0,242.9 950.1,200.3 950.2,170.8 950.3,164.5 950.4,183.7 950.5,221.8 950.6,265.9 950.7,300.9 950.8,314.9 950.9,303.0 951.0,269.2 951.1,225.0 951.2,185.8 951.3,165.0 951.4,169.9 951.5,198.9 951.6,241.9 951.7,284.1 951.8,310.7 951.9,312.3 952.0,288.4 952.1,247.3 952.2,203.3 952.3,171.9 952.4,164.3 952.5,183.2 952.6,222.0 952.7,266.9 952.8,302.1 952.9,314.9 953.0,300.8 953.1,264.7 953.2,219.5 953.3,181.3 953.4,163.9 953.5,173.7 953.6,207.1 953.7,252.2 953.8,292.7 953.9,313.8 954.0,307.9 954.1,277.0 954.2,232.3 954.3,190.2 954.4,166.0 954.5,168.7 954.6,197.3 954.7,241.4 954.8,284.8 954.9,311.4 955.0,311.3 955.1,284.5 955.2,240.9 955.3,196.7 955.4,168.3 955.5,166.4 955.6,191.8 955.7,235.1 955.8,279.9 955.9,309.6 956.0,312.7 956.1,288.1 956.2,245.0 956.3,199.7 956.4,169.4 956.5,165.7 956.6,190.1 956.7,233.2 956.8,278.8 956.9,309.2 957.0,312.8 957.1,288.1 957.2,244.6 957.3,198.9 957.4,168.9 957.5,166.2 957.6,191.8 957.7,236.0 957.8,281.5 957.9,310.5 958.0,311.7 958.1,284.5 958.2,239.5 958.3,194.4 958.4,166.9 958.5,168.1 958.6,197.4 958.7,243.4 958.8,287.8 958.9,312.9 959.0,308.7 959.1,276.8 959.2,229.8 959.3,186.6 959.4,164.6 959.5,172.6 959.6,207.5 959.7,255.3 959.8,296.7 959.9,314.8 960.0,302.3 960.1,264.1 960.2,215.8 960.3,177.0 960.4,163.7 960.5,181.4 960.6,222.9 960.7,271.1 960.8,306.3 960.9,313.8 961.0,290.5 961.1,245.9 961.2,198.6 961.3,168.1 961.4,167.3 961.5,196.6 961.6,243.8 961.7,289.1 961.8,313.6 961.9,306.8 962.0,271.6 962.1,222.7 962.2,180.8 962.3,163.7 962.4,178.7 962.5,219.5 962.6,268.8 962.7,305.5 962.8,314.0 962.9,290.4 963.0,244.9 963.1,196.9 963.2,167.2 963.3,168.6 963.4,200.6 963.5,249.4 963.6,293.9 963.7,314.6 963.8,302.6 963.9,262.9 964.0,212.8 964.1,174.3 964.2,164.4 964.3,187.4 964.4,233.3 964.5,281.9 964.6,311.7 964.7,309.4 964.8,276.0 964.9,226.3 965.0,182.3 965.1,163.7 965.2,178.9 965.3,221.2 965.4,271.7 965.5,307.6 965.6,312.8 965.7,284.8 965.8,236.2 965.9,189.0 966.0,164.6 966.1,174.1 966.2,213.4 966.3,264.5 966.4,304.2 966.5,314.1 966.6,289.7 966.7,242.1 966.8,193.2 966.9,165.5 967.0,171.9 967.1,209.6 967.2,261.1 967.3,302.5 967.4,314.5 967.5,291.4 967.6,243.9 967.7,194.3 967.8,165.7 967.9,171.7 968.0,209.6 968.1,261.5 968.2,303.0 968.3,314.3 968.4,290.0 968.5,241.6 968.6,192.1 968.7,165.0 968.8,173.5 968.9,213.4 969.0,265.8 969.1,305.5 969.2,313.4 969.3,285.5 969.4,235.2 969.5,186.9 969.6,164.0 969.7,177.7 969.8,221.4 969.9,273.8 970.0,309.5 970.1,310.8 970.2,277.0 970.3,224.7 970.4,179.5 970.5,163.8 970.6,185.4 970.7,233.7 970.8,284.8 970.9,313.4 971.0,305.1 971.1,264.0 971.2,210.5 971.3,171.4 971.4,166.3 971.5,197.9 971.6,250.4 971.7,297.3 971.8,314.9 971.9,294.3 972.0,245.8 972.1,193.9 972.2,165.1 972.3,174.1 972.4,216.4 972.5,270.5 972.6,308.6 972.7,311.1 972.8,276.7 972.9,223.0 973.0,177.6 973.1,164.2 973.2,189.6 973.3,240.9 973.4,291.4 973.5,314.8 973.6,298.7 973.7,251.6 973.8,198.0 973.9,166.0 974.0,172.6 974.1,214.3 974.2,269.3 974.3,308.4 974.4,311.0 974.5,275.4 974.6,220.7 974.7,175.8 974.8,164.8 974.9,193.6" fill="none" stroke="#24125f" stroke-width="0.95"/><path d="M969.5,163.65 H1292.5 L1299,239.30 L1292.5,314.95 H969.5 Z" fill="#1d0a58"/><path d="M1014.8,163.7V314.9" stroke="#fff" stroke-width="0.8" opacity="0.24"/><path d="M1016.4,163.7V314.9" stroke="#fff" stroke-width="0.8" opacity="0.23"/><path d="M1022.5,163.7V314.9" stroke="#fff" stroke-width="0.8" opacity="0.25"/><path d="M1025.4,163.7V314.9" stroke="#fff" stroke-width="0.8" opacity="0.18"/><path d="M1032.6,163.7V314.9" stroke="#fff" stroke-width="0.8" opacity="0.22"/><path d="M1034.0,163.7V314.9" stroke="#fff" stroke-width="0.8" opacity="0.08"/><path d="M1043.4,163.7V314.9" stroke="#fff" stroke-width="0.8" opacity="0.08"/><path d="M1052.2,163.7V314.9" stroke="#fff" stroke-width="0.8" opacity="0.11"/><path d="M1064.8,163.7V314.9" stroke="#fff" stroke-width="0.8" opacity="0.10"/><path d="M1065.9,163.7V314.9" stroke="#fff" stroke-width="0.8" opacity="0.09"/><path d="M1066.4,163.7V314.9" stroke="#fff" stroke-width="0.8" opacity="0.09"/><path d="M1070.6,163.7V314.9" stroke="#fff" stroke-width="0.8" opacity="0.20"/><path d="M1071.5,163.7V314.9" stroke="#fff" stroke-width="0.8" opacity="0.11"/><path d="M1073.0,163.7V314.9" stroke="#fff" stroke-width="0.8" opacity="0.31"/><path d="M1076.4,163.7V314.9" stroke="#fff" stroke-width="0.8" opacity="0.24"/><path d="M1081.1,163.7V314.9" stroke="#fff" stroke-width="0.8" opacity="0.20"/><path d="M1083.9,163.7V314.9" stroke="#fff" stroke-width="0.8" opacity="0.24"/><path d="M1086.4,163.7V314.9" stroke="#fff" stroke-width="0.8" opacity="0.13"/><path d="M1086.5,163.7V314.9" stroke="#fff" stroke-width="0.8" opacity="0.30"/><path d="M1087.9,163.7V314.9" stroke="#fff" stroke-width="0.8" opacity="0.28"/><path d="M1088.0,163.7V314.9" stroke="#fff" stroke-width="0.8" opacity="0.25"/><path d="M1090.0,163.7V314.9" stroke="#fff" stroke-width="0.8" opacity="0.18"/><path d="M1090.3,163.7V314.9" stroke="#fff" stroke-width="0.8" opacity="0.28"/><path d="M1094.4,163.7V314.9" stroke="#fff" stroke-width="0.8" opacity="0.25"/><path d="M1099.9,163.7V314.9" stroke="#fff" stroke-width="0.8" opacity="0.23"/><path d="M1103.8,163.7V314.9" stroke="#fff" stroke-width="0.8" opacity="0.30"/><path d="M1110.0,163.7V314.9" stroke="#fff" stroke-width="0.8" opacity="0.22"/><path d="M1110.1,163.7V314.9" stroke="#fff" stroke-width="0.8" opacity="0.16"/><path d="M1113.4,163.7V314.9" stroke="#fff" stroke-width="0.8" opacity="0.20"/><path d="M1114.6,163.7V314.9" stroke="#fff" stroke-width="0.8" opacity="0.11"/><path d="M1117.4,163.7V314.9" stroke="#fff" stroke-width="0.8" opacity="0.11"/><path d="M1122.6,163.7V314.9" stroke="#fff" stroke-width="0.8" opacity="0.25"/><path d="M1125.1,163.7V314.9" stroke="#fff" stroke-width="0.8" opacity="0.26"/><path d="M1132.2,163.7V314.9" stroke="#fff" stroke-width="0.8" opacity="0.31"/><path d="M1132.3,163.7V314.9" stroke="#fff" stroke-width="0.8" opacity="0.28"/><path d="M1133.5,163.7V314.9" stroke="#fff" stroke-width="0.8" opacity="0.20"/><path d="M1136.2,163.7V314.9" stroke="#fff" stroke-width="0.8" opacity="0.08"/><path d="M1136.8,163.7V314.9" stroke="#fff" stroke-width="0.8" opacity="0.19"/><path d="M1137.1,163.7V314.9" stroke="#fff" stroke-width="0.8" opacity="0.30"/><path d="M1140.2,163.7V314.9" stroke="#fff" stroke-width="0.8" opacity="0.26"/><path d="M1144.4,163.7V314.9" stroke="#fff" stroke-width="0.8" opacity="0.19"/><path d="M1152.1,163.7V314.9" stroke="#fff" stroke-width="0.8" opacity="0.18"/><path d="M1153.0,163.7V314.9" stroke="#fff" stroke-width="0.8" opacity="0.12"/><path d="M1161.6,163.7V314.9" stroke="#fff" stroke-width="0.8" opacity="0.11"/><path d="M1163.3,163.7V314.9" stroke="#fff" stroke-width="0.8" opacity="0.08"/><path d="M1165.3,163.7V314.9" stroke="#fff" stroke-width="0.8" opacity="0.29"/><path d="M1165.6,163.7V314.9" stroke="#fff" stroke-width="0.8" opacity="0.23"/><path d="M1169.5,163.7V314.9" stroke="#fff" stroke-width="0.8" opacity="0.10"/><path d="M1173.3,163.7V314.9" stroke="#fff" stroke-width="0.8" opacity="0.17"/><path d="M1174.6,163.7V314.9" stroke="#fff" stroke-width="0.8" opacity="0.07"/><path d="M1191.1,163.7V314.9" stroke="#fff" stroke-width="0.8" opacity="0.11"/><path d="M1192.3,163.7V314.9" stroke="#fff" stroke-width="0.8" opacity="0.25"/><path d="M1196.4,163.7V314.9" stroke="#fff" stroke-width="0.8" opacity="0.23"/><path d="M1197.6,163.7V314.9" stroke="#fff" stroke-width="0.8" opacity="0.18"/><path d="M1198.7,163.7V314.9" stroke="#fff" stroke-width="0.8" opacity="0.13"/><path d="M1202.3,163.7V314.9" stroke="#fff" stroke-width="0.8" opacity="0.23"/><path d="M1202.9,163.7V314.9" stroke="#fff" stroke-width="0.8" opacity="0.31"/><path d="M1203.5,163.7V314.9" stroke="#fff" stroke-width="0.8" opacity="0.17"/><path d="M1207.6,163.7V314.9" stroke="#fff" stroke-width="0.8" opacity="0.08"/><path d="M1207.7,163.7V314.9" stroke="#fff" stroke-width="0.8" opacity="0.08"/><path d="M1218.6,163.7V314.9" stroke="#fff" stroke-width="0.8" opacity="0.08"/><path d="M1228.0,163.7V314.9" stroke="#fff" stroke-width="0.8" opacity="0.31"/><path d="M1246.5,163.7V314.9" stroke="#fff" stroke-width="0.8" opacity="0.20"/><path d="M1250.7,163.7V314.9" stroke="#fff" stroke-width="0.8" opacity="0.28"/><path d="M1259.8,163.7V314.9" stroke="#fff" stroke-width="0.8" opacity="0.10"/><path d="M1260.8,163.7V314.9" stroke="#fff" stroke-width="0.8" opacity="0.13"/><path d="M1262.6,163.7V314.9" stroke="#fff" stroke-width="0.8" opacity="0.24"/><path d="M1272.1,163.7V314.9" stroke="#fff" stroke-width="0.8" opacity="0.29"/><path d="M1282.0,163.7V314.9" stroke="#fff" stroke-width="0.8" opacity="0.15"/><path d="M1283.2,163.7V314.9" stroke="#fff" stroke-width="0.8" opacity="0.08"/><rect x="1008" y="163.65" width="284" height="151.30" fill="#fff" opacity="0.04"/><path d="M1299.00,239.30H1350.00" stroke="#3a2c78" stroke-width="1.0"/><path d="M484.50,157.00V320.00" stroke="#8c8c8c" stroke-width="1.4"/><path d="M484.50,320.00H1350.20" stroke="#8c8c8c" stroke-width="1.4"/></svg>
<div class="t" style="left:441.64px;top:159.43px;font-size:9.60px;color:#5a5a5a;">100.00m</div>
<div class="t" style="left:446.98px;top:197.25px;font-size:9.60px;color:#5a5a5a;">50.00m</div>
<div class="t" style="left:460.32px;top:235.08px;font-size:9.60px;color:#5a5a5a;">0.00</div>
<div class="t" style="left:443.78px;top:272.90px;font-size:9.60px;color:#5a5a5a;">-50.00m</div>
<div class="t" style="left:438.44px;top:310.73px;font-size:9.60px;color:#5a5a5a;">-100.00m</div>
<div class="t" style="left:485.00px;top:325.72px;font-size:10.30px;color:#5a5a5a;">0.00</div>
<div class="t" style="left:1186.09px;top:325.72px;font-size:10.30px;color:#5a5a5a;">1.00m</div>
<div class="t" style="left:894.80px;top:341.47px;font-size:11.00px;color:#444;letter-spacing:-0.19px;">Time(s)</div>
<div class="t" style="left:365.85px;top:239.68px;font-size:10.79px;color:#555;transform:rotate(-90deg);transform-origin:center;">Record Waveform(Vpeak)</div>
<div class="a" style="left:0.00px;top:888.00px;width:1688.00px;height:3.00px;background:#d9d9d9;"></div>
<div class="a" style="left:0.00px;top:891.00px;width:1688.00px;height:21.00px;background:#f2f2f2;"></div>
<div class="t" style="left:9.50px;top:897.27px;font-size:11.00px;color:#888;letter-spacing:-0.07px;">Measurement Time</div>
<div class="a" style="left:106.00px;top:894.70px;width:48.30px;height:15.30px;background:#1b005a;"></div>
<div class="t" style="left:109.00px;top:897.47px;font-size:11.00px;color:#fff;letter-spacing:-0.05px;">00:00:02</div>
<div class="t" style="left:1293.30px;top:897.97px;font-size:11.20px;color:#777;">Input</div>
<div class="t" style="left:1325.40px;top:898.07px;font-size:11.00px;color:#777;letter-spacing:-0.36px;">1 Ch</div>
<div class="a" style="left:1350.60px;top:897.50px;width:1.00px;height:11.00px;background:#777;"></div>
<div class="t" style="left:1355.40px;top:898.07px;font-size:11.00px;color:#777;letter-spacing:-0.25px;">High Pass</div>
<div class="t" style="left:1409.30px;top:898.07px;font-size:11.00px;color:#777;letter-spacing:-0.39px;">AC</div>
<div class="a" style="left:1426.70px;top:897.50px;width:1.00px;height:11.00px;background:#777;"></div>
<div class="t" style="left:1431.80px;top:898.07px;font-size:11.00px;color:#777;letter-spacing:-0.16px;">Low Pass</div>
<div class="t" style="left:1484.30px;top:897.96px;font-size:11.22px;color:#777;">Nyquist</div>
<div class="a" style="left:1524.60px;top:897.50px;width:1.00px;height:11.00px;background:#777;"></div>
<div class="t" style="left:1536.20px;top:897.90px;font-size:11.34px;color:#777;">Z-Weighting</div>
<div class="t" style="left:1616.00px;top:897.74px;font-size:11.66px;color:#777;">Output</div>
<div class="t" style="left:1657.00px;top:898.07px;font-size:11.00px;color:#777;letter-spacing:-0.23px;">0 Ch</div>
</body></html>
